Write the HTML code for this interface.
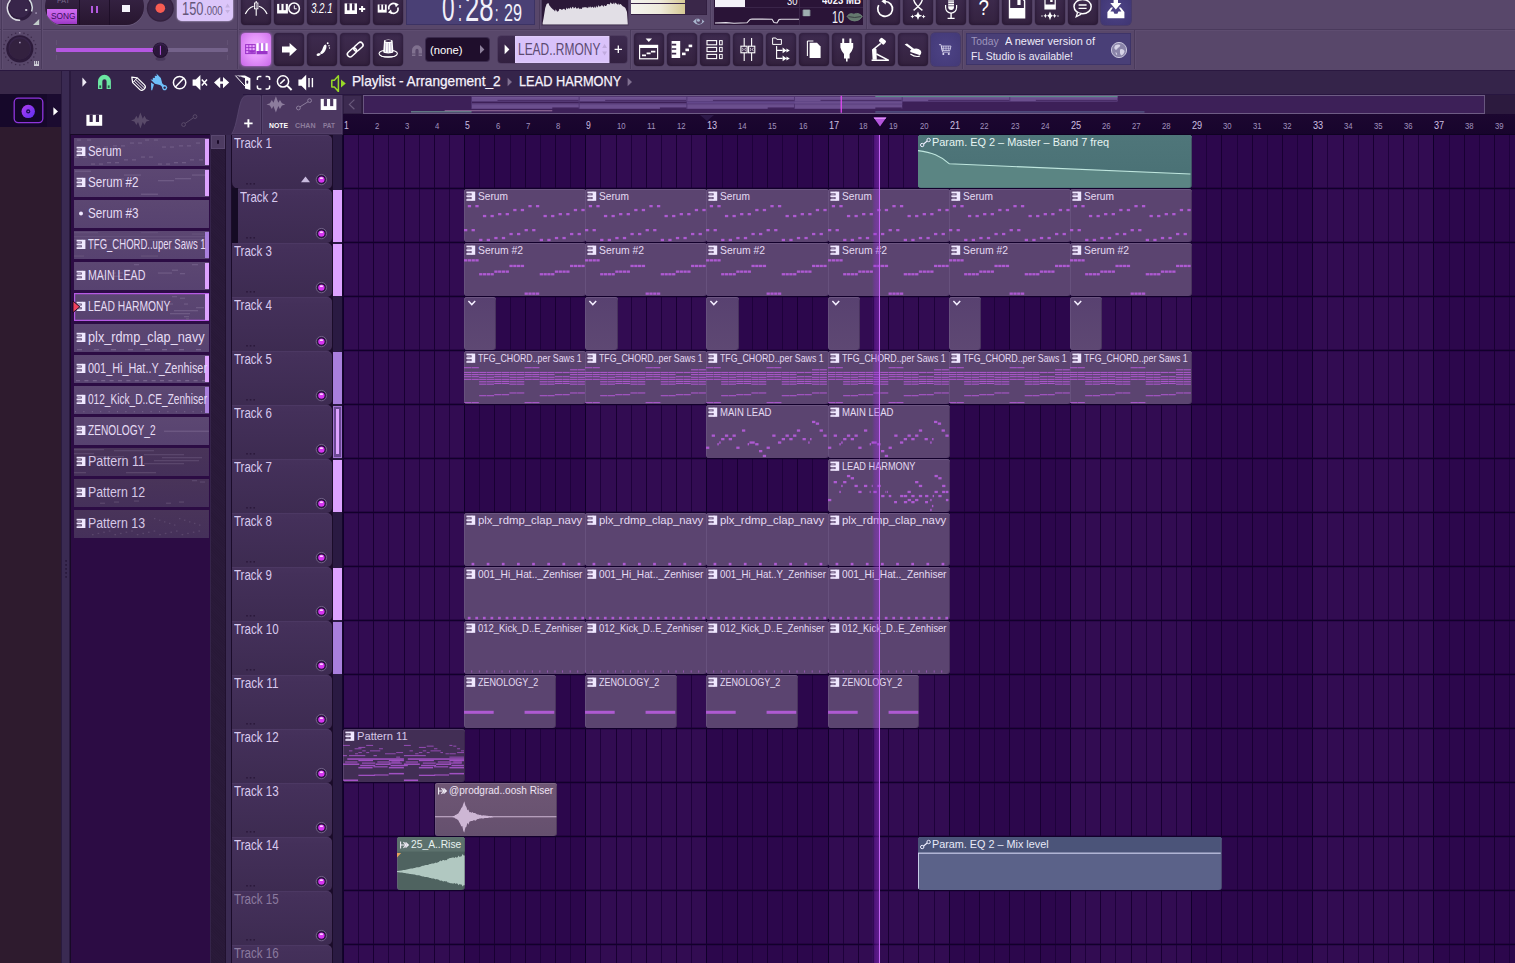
<!DOCTYPE html>
<html><head><meta charset="utf-8"><title>FL Studio Playlist</title><style>html,body{margin:0;padding:0;background:#35244a;}
#r{position:relative;width:1515px;height:963px;overflow:hidden;font-family:"Liberation Sans",sans-serif;background:#35244a;}
#r div,#r svg{position:absolute;}
#r svg{overflow:hidden;display:block;}
.t{white-space:nowrap;line-height:1;transform-origin:0 0;}
</style></head><body><div id="r">
<div style="left:0px;top:0px;width:1515px;height:71px;background:#58476a;"></div>
<div style="left:0px;top:28.6px;width:1515px;height:1px;background:#4a3a5c;"></div>
<div style="left:0px;top:29.6px;width:1515px;height:1px;background:#5e4d70;"></div>
<div style="left:0px;top:70px;width:1515px;height:1px;background:#2a1840;"></div>
<div style="left:1px;top:0px;width:1px;height:69px;background:#4a3a5c;"></div>
<div style="left:2px;top:0px;width:1px;height:69px;background:#5e4d70;"></div>
<div style="left:41px;top:0px;width:1px;height:69px;background:#4a3a5c;"></div>
<div style="left:42px;top:0px;width:1px;height:69px;background:#5e4d70;"></div>
<div style="left:237px;top:0px;width:1px;height:69px;background:#4a3a5c;"></div>
<div style="left:238px;top:0px;width:1px;height:69px;background:#5e4d70;"></div>
<div style="left:539px;top:0px;width:1px;height:29px;background:#4a3a5c;"></div>
<div style="left:540px;top:0px;width:1px;height:29px;background:#5e4d70;"></div>
<div style="left:630px;top:30px;width:1px;height:39px;background:#4a3a5c;"></div>
<div style="left:631px;top:30px;width:1px;height:39px;background:#5e4d70;"></div>
<div style="left:710px;top:0px;width:1px;height:29px;background:#4a3a5c;"></div>
<div style="left:711px;top:0px;width:1px;height:29px;background:#5e4d70;"></div>
<div style="left:866px;top:0px;width:1px;height:29px;background:#4a3a5c;"></div>
<div style="left:867px;top:0px;width:1px;height:29px;background:#5e4d70;"></div>
<div style="left:962px;top:30px;width:1px;height:39px;background:#4a3a5c;"></div>
<div style="left:963px;top:30px;width:1px;height:39px;background:#5e4d70;"></div>
<div style="left:1134px;top:30px;width:1px;height:39px;background:#4a3a5c;"></div>
<div style="left:1135px;top:30px;width:1px;height:39px;background:#5e4d70;"></div>
<svg style="left:2px;top:0px;" width="40" height="29" viewBox="0 0 40 29">
      <circle cx="18" cy="8" r="12.6" fill="#2e1c3e"/>
      <circle cx="17.6" cy="7.2" r="10.6" fill="#38254a"/>
      <path d="M8.4,0 A12.3,12.3 0 0 0 18.2,20.3" fill="none" stroke="#dcdce4" stroke-width="1.5"/>
      <path d="M26.6,-1 A12.3,12.3 0 0 1 29.6,11.4" fill="none" stroke="#d4dce0" stroke-width="1.5"/>
      <rect x="23.2" y="9" width="2" height="2" fill="#c4c0cc"/>
      <rect x="33.2" y="12.2" width="1.8" height="1.8" fill="#8e80a0"/>
      <path d="M37.2,19 L37.2,25 L31,25 Z" fill="#c2cdca"/>
    </svg>
<div style="left:45px;top:-12px;width:99px;height:36.6px;background:linear-gradient(#3a2749,#27152f);border-radius:18px;box-shadow:0 1px 0 #6a5a7c;"></div>
<div style="left:79px;top:-12px;width:1.2px;height:36.6px;background:#1e0e28;"></div>
<div style="left:109px;top:-12px;width:1.2px;height:36.6px;background:#1e0e28;"></div>
<div style="left:45px;top:-12px;width:34px;height:36.6px;border-radius:18px 0 0 18px;overflow:hidden;"><div style="left:2px;top:21.2px;width:30px;height:14.6px;background:linear-gradient(#cf6ef0,#c058e4 55%,#9a38c4);"></div></div>
<div class="t" style="left:50.8px;top:10px;font-size:9.5px;line-height:11px;color:#3a0f5e;transform:scaleX(0.8793);">SONG</div>
<div class="t" style="left:57px;top:-4px;font-size:8px;line-height:9px;color:#7a6a8c;transform:scaleX(0.9045);">PAT</div>
<div style="left:90.8px;top:6px;width:2.7px;height:7px;background:#b45ae0;"></div>
<div style="left:95.5px;top:6px;width:2.7px;height:7px;background:#b45ae0;"></div>
<div style="left:122px;top:5px;width:8.2px;height:7.4px;background:#f4f4fa;"></div>
<svg style="left:146px;top:-6px;" width="30" height="30" viewBox="0 0 30 30"><circle cx="14.3" cy="14.2" r="13.5" fill="#33213f"/><circle cx="14.3" cy="14.2" r="12.2" fill="#3a2748"/><circle cx="14.3" cy="14.2" r="4.8" fill="#f85c52"/></svg>
<div style="left:177px;top:-6px;width:55.6px;height:26.6px;background:#dcc6fa;border-radius:5px;box-shadow:0 0 2px #e8d8ff;"></div>
<div class="t" style="left:182.2px;top:-2px;font-size:18.3px;line-height:21px;color:#65567a;transform:scaleX(0.7009);">150</div>
<div class="t" style="left:204.4px;top:4px;font-size:12.2px;line-height:14px;color:#65567a;transform:scaleX(0.7875);">.000</div>
<svg style="left:224px;top:2px;" width="8" height="14" viewBox="0 0 8 14"><path d="M1.2,5.4 L3.6,1.6 L6,5.4Z M1.2,8 L3.6,11.6 L6,8Z" fill="#c4b0e0"/></svg>
<svg style="left:0px;top:30px;" width="42" height="39" viewBox="0 0 42 39"><circle cx="36.00" cy="18.80" r="0.75" fill="#3b2949"/><circle cx="35.45" cy="22.99" r="0.75" fill="#3b2949"/><circle cx="33.83" cy="26.90" r="0.75" fill="#3b2949"/><circle cx="31.26" cy="30.26" r="0.75" fill="#3b2949"/><circle cx="27.90" cy="32.83" r="0.75" fill="#3b2949"/><circle cx="23.99" cy="34.45" r="0.75" fill="#3b2949"/><circle cx="19.80" cy="35.00" r="0.75" fill="#3b2949"/><circle cx="15.61" cy="34.45" r="0.75" fill="#3b2949"/><circle cx="11.70" cy="32.83" r="0.75" fill="#3b2949"/><circle cx="8.34" cy="30.26" r="0.75" fill="#3b2949"/><circle cx="5.77" cy="26.90" r="0.75" fill="#3b2949"/><circle cx="4.15" cy="22.99" r="0.75" fill="#3b2949"/><circle cx="3.60" cy="18.80" r="0.75" fill="#3b2949"/><circle cx="4.15" cy="14.61" r="0.75" fill="#3b2949"/><circle cx="5.77" cy="10.70" r="0.75" fill="#3b2949"/><circle cx="8.34" cy="7.34" r="0.75" fill="#3b2949"/><circle cx="11.70" cy="4.77" r="0.75" fill="#3b2949"/><circle cx="15.61" cy="3.15" r="0.75" fill="#3b2949"/><circle cx="19.80" cy="2.60" r="0.75" fill="#3b2949"/><circle cx="23.99" cy="3.15" r="0.75" fill="#3b2949"/><circle cx="27.90" cy="4.77" r="0.75" fill="#3b2949"/><circle cx="31.26" cy="7.34" r="0.75" fill="#3b2949"/><circle cx="33.83" cy="10.70" r="0.75" fill="#3b2949"/><circle cx="35.45" cy="14.61" r="0.75" fill="#3b2949"/>
      <circle cx="19.8" cy="18.8" r="13.6" fill="#2c1a3a"/>
      <circle cx="19.8" cy="18.2" r="11.2" fill="#38254a"/>
      <circle cx="19.8" cy="19" r="10.4" fill="#33213f"/>
      <rect x="19" y="2" width="1.6" height="1.6" fill="#8a7a9a"/>
      <rect x="19.1" y="11.8" width="1.5" height="1.5" fill="#b0a0c0"/>
      <path d="M34,31 h5 v5 h-5z" fill="#d0d0d8"/><path d="M35.4,31 v3.2 M37.6,31 v3.2" stroke="#58476a" stroke-width="0.9"/>
    </svg>
<div style="left:55.5px;top:48px;width:172px;height:4px;background:#74628a;border-radius:1px;"></div>
<div style="left:55.5px;top:48px;width:98px;height:4px;background:#b557e2;border-radius:1px;"></div>
<div style="left:56.2px;top:40.2px;width:0.7px;height:5px;background:#625174;"></div>
<div style="left:56.2px;top:55px;width:0.7px;height:4.6px;background:#625174;"></div>
<div style="left:226.6px;top:40.2px;width:0.7px;height:5px;background:#625174;"></div>
<div style="left:226.6px;top:55px;width:0.7px;height:4.6px;background:#625174;"></div>
<svg style="left:151px;top:40px;" width="20" height="22" viewBox="0 0 20 22"><ellipse cx="9.5" cy="18.8" rx="5" ry="2" fill="#47375a"/>
      <circle cx="9.4" cy="10.2" r="7.7" fill="#231030"/><circle cx="9.4" cy="9.8" r="6.7" fill="#35224a"/>
      <circle cx="9.4" cy="10.6" r="6.2" fill="#2a173a"/>
      <rect x="8.9" y="5.8" width="1" height="9" fill="#b557e2"/></svg>
<div style="left:241px;top:-6px;width:29.8px;height:30.6px;background:linear-gradient(#3e2b4f,#34223f);border-radius:4px;box-shadow:inset 0 0 4px rgba(20,5,30,.55),0 0 0 0.6px #4a3a5c;"></div>
<div style="left:274px;top:-6px;width:29.8px;height:30.6px;background:linear-gradient(#3e2b4f,#34223f);border-radius:4px;box-shadow:inset 0 0 4px rgba(20,5,30,.55),0 0 0 0.6px #4a3a5c;"></div>
<div style="left:307px;top:-6px;width:29.8px;height:30.6px;background:linear-gradient(#3e2b4f,#34223f);border-radius:4px;box-shadow:inset 0 0 4px rgba(20,5,30,.55),0 0 0 0.6px #4a3a5c;"></div>
<div style="left:340px;top:-6px;width:29.8px;height:30.6px;background:linear-gradient(#3e2b4f,#34223f);border-radius:4px;box-shadow:inset 0 0 4px rgba(20,5,30,.55),0 0 0 0.6px #4a3a5c;"></div>
<div style="left:373px;top:-6px;width:29.8px;height:30.6px;background:linear-gradient(#3e2b4f,#34223f);border-radius:4px;box-shadow:inset 0 0 4px rgba(20,5,30,.55),0 0 0 0.6px #4a3a5c;"></div>
<div style="left:274px;top:33px;width:29.8px;height:33px;background:linear-gradient(#3e2b4f,#34223f);border-radius:4px;box-shadow:inset 0 0 4px rgba(20,5,30,.55),0 0 0 0.6px #4a3a5c;"></div>
<div style="left:307px;top:33px;width:29.8px;height:33px;background:linear-gradient(#3e2b4f,#34223f);border-radius:4px;box-shadow:inset 0 0 4px rgba(20,5,30,.55),0 0 0 0.6px #4a3a5c;"></div>
<div style="left:340px;top:33px;width:29.8px;height:33px;background:linear-gradient(#3e2b4f,#34223f);border-radius:4px;box-shadow:inset 0 0 4px rgba(20,5,30,.55),0 0 0 0.6px #4a3a5c;"></div>
<div style="left:373px;top:33px;width:29.8px;height:33px;background:linear-gradient(#3e2b4f,#34223f);border-radius:4px;box-shadow:inset 0 0 4px rgba(20,5,30,.55),0 0 0 0.6px #4a3a5c;"></div>
<div style="left:241px;top:33px;width:29.8px;height:33px;background:radial-gradient(ellipse at 50% 45%,#f0b4ff 0%,#e595fb 45%,#c868e8 100%);border-radius:4px;box-shadow:0 0 3px #d070f0;"></div>
<svg style="left:241px;top:-6px;" width="30" height="30.6" viewBox="0 0 30 30.6"><path d="M4.3,19.9 Q7.4,13.6 12.6,12.2 M26.1,19.9 Q23,13.6 17.8,12.2" stroke="#fff" fill="none" stroke-width="1.15"/><path d="M15.2,7 V21.8" stroke="#fff" fill="none" stroke-width="1.1"/><rect x="13.5" y="9" width="3.4" height="5.8" fill="#3a2749" stroke="#fff" stroke-width="0.9"/><path d="M15.2,10 v4" stroke="#fff" stroke-width="0.7"/></svg>
<svg style="left:274px;top:-6px;" width="30" height="30.6" viewBox="0 0 30 30.6"><rect x="3.1" y="9.9" width="10.8" height="9.6" fill="#fff"/><rect x="5.26" y="9.8" width="2.16" height="6.34" fill="#3a2749"/><rect x="9.58" y="9.8" width="2.16" height="6.34" fill="#3a2749"/><circle cx="20.1" cy="14.4" r="5.3" fill="#3a2749" stroke="#fff" stroke-width="1.5"/><path d="M20.3,11.4 V14.8 H22.8" stroke="#fff" fill="none" stroke-width="1"/></svg>
<svg style="left:307px;top:-6px;" width="30" height="30.6" viewBox="0 0 30 30.6"><text x="3.9" y="18.9" font-family="Liberation Sans" font-style="italic" font-size="14.6" fill="#fff" textLength="21.8" lengthAdjust="spacingAndGlyphs">3.2.1</text></svg>
<svg style="left:340px;top:-6px;" width="30" height="30.6" viewBox="0 0 30 30.6"><rect x="4.6" y="9.4" width="12.4" height="10.6" fill="#fff"/><rect x="7.08" y="9.3" width="2.48" height="7.00" fill="#3a2749"/><rect x="12.04" y="9.3" width="2.48" height="7.00" fill="#3a2749"/><path d="M19,15 h6.2 M22.1,11.9 v6.2" stroke="#fff" stroke-width="2"/></svg>
<svg style="left:373px;top:-6px;" width="30" height="30.6" viewBox="0 0 30 30.6"><rect x="4.7" y="10.5" width="9" height="8.1" fill="#fff"/><rect x="6.50" y="10.4" width="1.80" height="5.35" fill="#3a2749"/><rect x="10.10" y="10.4" width="1.80" height="5.35" fill="#3a2749"/><path d="M16,15.4 A4.5,4.5 0 0 1 23.4,10.8" stroke="#fff" fill="none" stroke-width="1.6"/><path d="M24.8,13.4 A4.5,4.5 0 0 1 17.4,18" stroke="#fff" fill="none" stroke-width="1.6"/><path d="M21.6,8.6 l4.2,1.6 -3,3z M19.2,20.2 l-4.2,-1.6 3,-3z" fill="#fff"/></svg>
<svg style="left:241px;top:33px;" width="30" height="32.4" viewBox="0 0 30 32.4"><rect x="4.6" y="11.6" width="9.6" height="9" fill="none" stroke="#9a32c8" stroke-width="1"/><path d="M4.6,14.6 h9.6 M4.6,17.6 h9.6 M7.8,11.6 v9 M11,11.6 v9" stroke="#9a32c8" stroke-width="0.9"/><rect x="8.2" y="18" width="5.6" height="1.8" fill="#9a32c8"/><rect x="15.5" y="10.2" width="11.2" height="11.2" fill="#fff"/><rect x="17.74" y="10.1" width="2.24" height="7.84" fill="#c070e8"/><rect x="22.22" y="10.1" width="2.24" height="7.84" fill="#c070e8"/><rect x="15.5" y="18" width="11.2" height="3.4" fill="#9a32c8"/></svg>
<svg style="left:274px;top:33px;" width="30" height="32.4" viewBox="0 0 30 32.4"><path d="M8,13.6 h7.6 v-3.6 l7.3,6.6 -7.3,6.6 v-3.6 h-7.6z" fill="#fff"/></svg>
<svg style="left:307px;top:33px;" width="30" height="32.4" viewBox="0 0 30 32.4"><ellipse cx="11.6" cy="21.6" rx="2.1" ry="1.3" transform="rotate(-18 11.6 21.6)" fill="#fff"/><path d="M13.6,21.3 Q17.6,20.4 19.2,15.4 Q20,12 18.7,11.4 Q17,11.2 16,14.4 Q15.2,17.8 13.2,19.6Z" fill="#fff"/><circle cx="20.7" cy="10.3" r="0.95" fill="#fff"/><circle cx="22" cy="12.7" r="0.75" fill="#fff"/><circle cx="22.5" cy="15" r="0.65" fill="#fff"/></svg>
<svg style="left:340px;top:33px;" width="30" height="32.4" viewBox="0 0 30 32.4"><g transform="rotate(-42 15.2 16.6)" fill="none" stroke="#fff" stroke-width="1.5"><rect x="5.6" y="13.9" width="10.6" height="5.4" rx="2.7"/><rect x="14.2" y="13.9" width="10.6" height="5.4" rx="2.7"/></g></svg>
<svg style="left:373px;top:33px;" width="30" height="32.4" viewBox="0 0 30 32.4"><ellipse cx="15.2" cy="20.6" rx="9.2" ry="3.6" fill="none" stroke="#fff" stroke-width="1.1"/><path d="M6.2,21.4 A9.2,3.6 0 0 0 24.2,21.4 A9.2,2.4 0 0 1 6.2,21.4Z" fill="#fff"/><path d="M11,8 A4.3,1.5 0 0 1 19.6,8 L20.4,19 A5.2,1.8 0 0 1 10.2,19Z" fill="#fff"/><ellipse cx="15.3" cy="8" rx="3.2" ry="0.9" fill="#3a2749"/><path d="M12.8,9.8 L12.4,19 M15.3,10 V19.6 M17.8,9.8 L18.2,19" stroke="#9a8cb0" stroke-width="0.6"/></svg>
<svg style="left:410px;top:42px;" width="14" height="18" viewBox="0 0 14 18"><path d="M2,14 V8.2 A5,5 0 0 1 12,8.2 V14 H8.6 V8.4 A1.6,1.6 0 0 0 5.4,8.4 V14Z" fill="#80718f"/><path d="M2,12 h3.4 M8.6,12 h3.4" stroke="#58476a" stroke-width="0.9"/></svg>
<div style="left:426px;top:38px;width:62.6px;height:22.6px;background:#1f0e2c;border-radius:3px;box-shadow:0 0 0 1px #3a2a4c;"></div>
<div class="t" style="left:430.2px;top:44px;font-size:11.5px;line-height:12px;color:#fff;transform:scaleX(0.9806);">(none)</div>
<svg style="left:478px;top:43px;" width="8" height="13" viewBox="0 0 8 13"><path d="M2,2 L6.4,6.4 L2,10.8Z" fill="#8e809c"/></svg>
<div style="left:498px;top:36px;width:17px;height:26.6px;background:linear-gradient(#3e2b50,#322040);border-radius:3px 0 0 3px;box-shadow:0 0 0 0.6px #463558;"></div>
<svg style="left:503px;top:43px;" width="8" height="13" viewBox="0 0 8 13"><path d="M1.6,1.6 L6.4,6.4 L1.6,11.2Z" fill="#fff"/></svg>
<div style="left:515px;top:36px;width:95px;height:26.6px;background:#d9c2fa;box-shadow:inset 0 0 3px #eedcff;"></div>
<div class="t" style="left:517.6px;top:39px;font-size:17.4px;line-height:20px;color:#5c4a72;transform:scaleX(0.6873);">LEAD..RMONY</div>
<svg style="left:601px;top:42px;" width="8" height="16" viewBox="0 0 8 16"><path d="M1.2,6 L3.6,2 L6,6Z M1.2,9.6 L3.6,13.4 L6,9.6Z" fill="#c0aade"/></svg>
<div style="left:610px;top:36px;width:17px;height:26.6px;background:linear-gradient(#3e2b50,#322040);border-radius:0 3px 3px 0;box-shadow:0 0 0 0.6px #463558;"></div>
<svg style="left:612px;top:42px;" width="13" height="14" viewBox="0 0 13 14"><path d="M2.6,7.3 h7.4 M6.3,3.6 v7.4" stroke="#fff" stroke-width="1.3"/></svg>
<div style="left:406px;top:-4px;width:129px;height:28.6px;background:#4a4075;box-shadow:inset 0 0 0 1px #3c3364;"></div>
<div class="t" style="left:441.6px;top:-13px;font-size:38px;line-height:42px;color:#f2f0fa;transform:scaleX(0.5962);">0</div>
<div class="t" style="left:458.4px;top:-6px;font-size:30px;line-height:33px;color:#f2f0fa;transform:scaleX(0.4799);">:</div>
<div class="t" style="left:465.2px;top:-13px;font-size:38px;line-height:42px;color:#f2f0fa;transform:scaleX(0.6766);">28</div>
<div class="t" style="left:495.2px;top:1px;font-size:22px;line-height:25px;color:#f2f0fa;transform:scaleX(0.5563);">:</div>
<div class="t" style="left:503.6px;top:0px;font-size:23.4px;line-height:26px;color:#f2f0fa;transform:scaleX(0.6915);">29</div>
<div style="left:541.6px;top:-4px;width:86.8px;height:28.6px;background:#2b1838;box-shadow:0 0 0 0.6px #463558;"></div>
<svg style="left:541.6px;top:0px;" width="87" height="24.6" viewBox="0 0 87 24.6"><path d="M0.6,24.6 L0.6,23.0 L1.6,18.0 L2.4,13.0 L3.2,8.0 L4.6,4.0 L5.5,3.5 L6.4,2.9 L7.4,5.6 L8.1,6.3 L8.8,7.2 L9.5,8.0 L10.3,8.7 L11.0,9.6 L12.0,10.0 L13.0,11.5 L13.7,9.3 L14.5,10.6 L15.2,12.1 L15.9,10.9 L16.6,11.2 L17.3,8.8 L18.0,9.3 L18.8,8.9 L19.5,9.8 L20.2,10.0 L21.0,8.7 L21.7,9.0 L22.4,8.8 L23.2,10.2 L23.9,9.5 L24.6,7.6 L25.5,9.3 L26.3,7.7 L27.1,9.0 L28.0,7.8 L28.8,7.2 L29.5,9.1 L30.3,7.1 L31.1,6.8 L31.8,8.5 L32.6,7.9 L33.5,6.7 L34.3,8.7 L35.1,8.0 L36.0,8.7 L36.8,7.3 L37.5,9.2 L38.3,8.4 L39.1,9.1 L39.8,8.8 L40.6,7.2 L41.5,7.5 L42.3,7.2 L43.1,7.3 L44.0,7.3 L44.7,7.6 L45.5,8.2 L46.2,6.4 L46.9,7.9 L47.7,6.7 L48.4,6.4 L49.1,7.9 L49.8,7.1 L50.6,6.8 L51.3,7.4 L52.0,8.1 L52.7,6.2 L53.5,8.3 L54.2,5.6 L54.9,7.2 L55.7,7.2 L56.4,4.8 L57.1,6.9 L57.8,6.0 L58.6,6.6 L59.3,5.2 L60.0,5.4 L60.7,5.4 L61.5,7.1 L62.2,4.8 L62.9,5.9 L63.7,6.1 L64.4,5.7 L65.3,4.1 L66.1,4.0 L67.0,4.3 L67.7,4.4 L68.5,2.2 L69.2,3.3 L70.1,3.7 L71.1,4.1 L72.0,2.2 L72.7,4.6 L73.4,2.5 L74.1,3.2 L74.9,3.9 L75.6,4.8 L76.3,3.3 L77.0,4.9 L77.8,4.3 L78.5,4.1 L79.2,4.5 L80.0,5.6 L80.8,6.2 L81.7,6.8 L82.6,7.3 L83.4,7.9 L84.2,9.9 L85.0,12.0 L85.8,23.8 L85.8,24.6Z" fill="#e2dfe6"/></svg>
<div style="left:630.6px;top:-4px;width:76.4px;height:18.6px;background:#3a2749;box-shadow:inset 0 0 0 0.6px #2e1c3c;"></div>
<div style="left:631.2px;top:-2px;width:54px;height:4.6px;background:linear-gradient(90deg,#f4f4f0,#eeeada 55%,#d6c994);"></div>
<div style="left:631.2px;top:4.2px;width:53.4px;height:9.6px;background:linear-gradient(90deg,#f4f4f0,#eeeada 55%,#d6c994);"></div>
<svg style="left:692px;top:15px;" width="14" height="12" viewBox="0 0 14 12"><path d="M1,6.4 Q6.6,-0.6 12.4,6.4 Q6.6,13 1,6.4Z" fill="#a9b6cf"/><circle cx="7.2" cy="6" r="3" fill="#58476a"/><circle cx="6.4" cy="5.2" r="1.5" fill="#a9b6cf"/></svg>
<div style="left:714px;top:-4px;width:149px;height:28.6px;background:#2a1437;"></div>
<div style="left:714.6px;top:-4px;width:30.4px;height:10.6px;background:#f4f2f8;"></div>
<div style="left:714px;top:6.8px;width:85px;height:0.8px;background:#3a2549;"></div>
<div style="left:799px;top:-4px;width:0.9px;height:28.6px;background:#3a2549;"></div>
<div style="left:799px;top:6.6px;width:64px;height:0.8px;background:#3a2549;"></div>
<div class="t" style="left:786.8px;top:-5px;font-size:10.6px;line-height:12px;color:#f4f2fa;transform:scaleX(0.8905);">30</div>
<div class="t" style="left:821.6px;top:-6px;font-size:10.6px;line-height:12px;color:#f8f6fc;transform:scaleX(0.9021);font-weight:bold;">4023 MB</div>
<svg style="left:714px;top:14px;" width="86" height="11" viewBox="0 0 86 11"><path d="M1,9 L12,8.6 L20,9.2 L33,8.8 L36,5.4 L38,5 L58,5.2 L60,8.6 L63,9 L65,5.6 L67,5.2 L85,5.2" fill="none" stroke="#e2dee8" stroke-width="1.1"/></svg>
<svg style="left:801px;top:8px;" width="12" height="10" viewBox="0 0 12 10"><rect x="2.2" y="1.6" width="6.6" height="6.6" fill="#9eb0b0"/><path d="M1,3 h9 M1,5 h9 M1,7 h9" stroke="#9eb0b0" stroke-width="0.6"/></svg>
<div class="t" style="left:832px;top:9px;font-size:15.6px;line-height:17px;color:#f4f2f8;transform:scaleX(0.6915);">10</div>
<svg style="left:846px;top:11px;" width="18" height="12" viewBox="0 0 18 12"><path d="M1,5.4 Q3,2.2 5.6,2.6 Q7.4,3.4 8.4,3 Q10.6,2 12.4,2.6 Q14.6,3.4 16.4,5.4 Q13,10.4 8.6,10 Q4,10.2 1,5.4Z" fill="#65786f" stroke="#6d8377" stroke-width="0.8"/><path d="M2.4,5.6 Q8.6,7.4 15,5.6" fill="none" stroke="#3a3f44" stroke-width="1"/></svg>
<div style="left:870px;top:-6px;width:29.8px;height:30.6px;background:linear-gradient(#3e2b4f,#34223f);border-radius:4px;box-shadow:inset 0 0 4px rgba(20,5,30,.55),0 0 0 0.6px #4a3a5c;"></div>
<div style="left:903px;top:-6px;width:29.8px;height:30.6px;background:linear-gradient(#3e2b4f,#34223f);border-radius:4px;box-shadow:inset 0 0 4px rgba(20,5,30,.55),0 0 0 0.6px #4a3a5c;"></div>
<div style="left:936px;top:-6px;width:29.8px;height:30.6px;background:linear-gradient(#3e2b4f,#34223f);border-radius:4px;box-shadow:inset 0 0 4px rgba(20,5,30,.55),0 0 0 0.6px #4a3a5c;"></div>
<div style="left:969px;top:-6px;width:29.8px;height:30.6px;background:linear-gradient(#3e2b4f,#34223f);border-radius:4px;box-shadow:inset 0 0 4px rgba(20,5,30,.55),0 0 0 0.6px #4a3a5c;"></div>
<div style="left:1002px;top:-6px;width:29.8px;height:30.6px;background:linear-gradient(#3e2b4f,#34223f);border-radius:4px;box-shadow:inset 0 0 4px rgba(20,5,30,.55),0 0 0 0.6px #4a3a5c;"></div>
<div style="left:1035px;top:-6px;width:29.8px;height:30.6px;background:linear-gradient(#3e2b4f,#34223f);border-radius:4px;box-shadow:inset 0 0 4px rgba(20,5,30,.55),0 0 0 0.6px #4a3a5c;"></div>
<div style="left:1068px;top:-6px;width:29.8px;height:30.6px;background:linear-gradient(#3e2b4f,#34223f);border-radius:4px;box-shadow:inset 0 0 4px rgba(20,5,30,.55),0 0 0 0.6px #4a3a5c;"></div>
<div style="left:1101px;top:-6px;width:29.8px;height:30.6px;background:radial-gradient(ellipse at 50% 50%,#4e4488,#3f3572);border-radius:4px;box-shadow:0 0 0 0.6px #3c3368;"></div>
<svg style="left:870px;top:-6px;" width="30" height="30.6" viewBox="0 0 30 30.6"><path d="M15.1,7.5 A7.4,7.4 0 1 1 8.7,11.2" stroke="#fff" fill="none" stroke-width="1.7"/><path d="M11.4,7.3 L15.8,4 V10.6Z" fill="#fff"/></svg>
<svg style="left:903px;top:-6px;" width="30" height="30.6" viewBox="0 0 30 30.6"><path d="M10.6,5 Q11,10 19.4,16.4 M19.4,5 Q19,10 10.6,16.4" stroke="#fff" fill="none" stroke-width="1.4"/><path d="M15,17.6 l1.2,3 3,1.2 -3,1.2 -1.2,3 -1.2,-3 -3,-1.2 3,-1.2z" fill="#fff"/><path d="M9.4,20.4 l.6,1.6 1.4,.6 -1.4,.6 -.6,1.4 -.6,-1.4 -1.4,-.6 1.4,-.6z M20.6,20.4 l.6,1.6 1.4,.6 -1.4,.6 -.6,1.4 -.6,-1.4 -1.4,-.6 1.4,-.6z" fill="#fff"/></svg>
<svg style="left:936px;top:-6px;" width="30" height="30.6" viewBox="0 0 30 30.6"><rect x="12.2" y="2" width="5.8" height="14" rx="2.9" fill="#fff"/><path d="M12.2,7 h5.8 M12.2,9.4 h5.8 M12.2,11.8 h5.8" stroke="#3a2749" stroke-width="0.7"/><path d="M9.6,11 v2.6 a5.5,5.5 0 0 0 11,0 V11" stroke="#fff" fill="none" stroke-width="1.2"/><path d="M15.1,19 v5 M11.6,24.4 h7" stroke="#fff" fill="none" stroke-width="1.4"/></svg>
<svg style="left:969px;top:-6px;" width="30" height="30.6" viewBox="0 0 30 30.6"><text x="9.6" y="20.6" font-family="Liberation Sans" font-size="22.5" fill="#fff" textLength="10.4" lengthAdjust="spacingAndGlyphs">?</text></svg>
<svg style="left:1002px;top:-6px;" width="30" height="30.6" viewBox="0 0 30 30.6"><path d="M7.5,4 H19.8 L22.6,6.8 V23.8 H7.5Z" fill="#3a2749" stroke="#fff" stroke-width="1.4"/><rect x="7.5" y="14" width="15.1" height="9.8" fill="#fff"/><rect x="15.4" y="4" width="3.2" height="7" fill="#fff"/></svg>
<svg style="left:1035px;top:-6px;" width="30" height="30.6" viewBox="0 0 30 30.6"><path d="M10,3 H18.4 L20.2,4.8 V14.9 H10Z" fill="#3a2749" stroke="#fff" stroke-width="1.2"/><rect x="10" y="10.5" width="10.2" height="4.4" fill="#fff"/><rect x="15.2" y="3" width="2.4" height="5" fill="#fff"/><path d="M15,17.4 l1.2,3.2 1.6,1.2 -1.6,1.2 -1.2,3.2 -1.2,-3.2 -1.6,-1.2 1.6,-1.2z M10.4,19.6 l.7,1.6 1.2,.6 -1.2,.6 -.7,1.6 -.7,-1.6 -1.2,-.6 1.2,-.6z M19.6,19.6 l.7,1.6 1.2,.6 -1.2,.6 -.7,1.6 -.7,-1.6 -1.2,-.6 1.2,-.6z M7,21 l.4,.8 .8,.2 -.8,.2 -.4,.8 -.4,-.8 -.8,-.2 .8,-.2z M23,21 l.4,.8 .8,.2 -.8,.2 -.4,.8 -.4,-.8 -.8,-.2 .8,-.2z" fill="#fff"/></svg>
<svg style="left:1068px;top:-6px;" width="30" height="30.6" viewBox="0 0 30 30.6"><ellipse cx="14.6" cy="12.6" rx="8.6" ry="7.2" stroke="#fff" fill="none" stroke-width="1.5"/><path d="M9.6,18.4 l-1.4,4.4 5,-2.6" fill="#3a2749" stroke="#fff" stroke-width="1.3"/><path d="M10.6,11 h8 M10.6,14.4 h8" stroke="#fff" fill="none" stroke-width="1.3"/></svg>
<svg style="left:1101px;top:-6px;" width="30" height="30.6" viewBox="0 0 30 30.6"><path d="M12.6,2 h4.4 v7 h3.4 l-5.6,6.6 -5.6,-6.6 h3.4z" fill="#fff"/><path d="M6.4,18 l3.6,-4.6 h2 l-2.6,4 h3 l1,2.4 h3 l1,-2.4 h3 l-2.6,-4 h2 l3.6,4.6 v6.2 h-17z" fill="#fff"/></svg>
<div style="left:634.3px;top:33px;width:29.8px;height:33px;background:linear-gradient(#3e2b4f,#34223f);border-radius:4px;box-shadow:inset 0 0 4px rgba(20,5,30,.55),0 0 0 0.6px #4a3a5c;"></div>
<div style="left:667.3px;top:33px;width:29.8px;height:33px;background:linear-gradient(#3e2b4f,#34223f);border-radius:4px;box-shadow:inset 0 0 4px rgba(20,5,30,.55),0 0 0 0.6px #4a3a5c;"></div>
<div style="left:700.3px;top:33px;width:29.8px;height:33px;background:linear-gradient(#3e2b4f,#34223f);border-radius:4px;box-shadow:inset 0 0 4px rgba(20,5,30,.55),0 0 0 0.6px #4a3a5c;"></div>
<div style="left:733.3px;top:33px;width:29.8px;height:33px;background:linear-gradient(#3e2b4f,#34223f);border-radius:4px;box-shadow:inset 0 0 4px rgba(20,5,30,.55),0 0 0 0.6px #4a3a5c;"></div>
<div style="left:766.3px;top:33px;width:29.8px;height:33px;background:linear-gradient(#3e2b4f,#34223f);border-radius:4px;box-shadow:inset 0 0 4px rgba(20,5,30,.55),0 0 0 0.6px #4a3a5c;"></div>
<div style="left:799.3px;top:33px;width:29.8px;height:33px;background:linear-gradient(#3e2b4f,#34223f);border-radius:4px;box-shadow:inset 0 0 4px rgba(20,5,30,.55),0 0 0 0.6px #4a3a5c;"></div>
<div style="left:832.3px;top:33px;width:29.8px;height:33px;background:linear-gradient(#3e2b4f,#34223f);border-radius:4px;box-shadow:inset 0 0 4px rgba(20,5,30,.55),0 0 0 0.6px #4a3a5c;"></div>
<div style="left:865.3px;top:33px;width:29.8px;height:33px;background:linear-gradient(#3e2b4f,#34223f);border-radius:4px;box-shadow:inset 0 0 4px rgba(20,5,30,.55),0 0 0 0.6px #4a3a5c;"></div>
<div style="left:898.3px;top:33px;width:29.8px;height:33px;background:linear-gradient(#3e2b4f,#34223f);border-radius:4px;box-shadow:inset 0 0 4px rgba(20,5,30,.55),0 0 0 0.6px #4a3a5c;"></div>
<div style="left:931.3px;top:33px;width:29px;height:33px;background:radial-gradient(ellipse at 50% 50%,#4d4386,#433977);border-radius:4px;box-shadow:0 0 0 0.6px #3c3368;"></div>
<svg style="left:634.3px;top:33px;" width="30" height="32.4" viewBox="0 0 30 32.4"><path d="M11.6,5.6 h6.4 l-3.2,3.4z" fill="#fff"/><rect x="5.6" y="12.4" width="18" height="13.4" stroke="#fff" fill="none" stroke-width="1.2"/><rect x="5.6" y="12.4" width="18" height="2.6" fill="#fff"/><path d="M8,22.4 h4 M12.6,20.4 h4 M17,18.6 h4.4" stroke="#fff" stroke-width="1.6"/></svg>
<svg style="left:667.3px;top:33px;" width="30" height="32.4" viewBox="0 0 30 32.4"><path d="M4.6,8 h8.6 v17 h-8.6z" fill="#fff"/><path d="M4.6,11.6 h4.6 M4.6,16 h4.6 M4.6,20.6 h4.6" stroke="#3a2749" stroke-width="1.6"/><rect x="15" y="19.6" width="3.6" height="2.6" fill="#fff"/><rect x="18.4" y="15.6" width="3.6" height="2.6" fill="#fff"/><rect x="21.6" y="11.6" width="3.6" height="2.6" fill="#fff"/></svg>
<svg style="left:700.3px;top:33px;" width="30" height="32.4" viewBox="0 0 30 32.4"><rect x="7" y="7.6" width="9.6" height="4.2" stroke="#fff" fill="none" stroke-width="1.1"/><rect x="19.6" y="7.6" width="2.6" height="4.2" stroke="#fff" fill="none" stroke-width="1"/><rect x="7" y="14.4" width="9.6" height="4.2" stroke="#fff" fill="none" stroke-width="1.1"/><rect x="19.6" y="14.4" width="2.6" height="4.2" stroke="#fff" fill="none" stroke-width="1"/><rect x="7" y="21.4" width="9.6" height="4.2" stroke="#fff" fill="none" stroke-width="1.1"/><rect x="19.6" y="21.4" width="2.6" height="4.2" stroke="#fff" fill="none" stroke-width="1"/></svg>
<svg style="left:733.3px;top:33px;" width="30" height="32.4" viewBox="0 0 30 32.4"><path d="M11.2,5 V28 M18.6,5 V28" stroke="#fff" fill="none" stroke-width="1.1"/><rect x="7.9" y="13.2" width="6.2" height="6.6" fill="#3a2749" stroke="#fff" stroke-width="1.1"/><rect x="15.6" y="13.2" width="6.2" height="6.6" fill="#3a2749" stroke="#fff" stroke-width="1.1"/><path d="M9.4,14.8 q1.6,1.7 0,3.4 M12.6,14.8 q-1.6,1.7 0,3.4 M17.1,14.8 q1.6,1.7 0,3.4 M20.3,14.8 q-1.6,1.7 0,3.4" stroke="#fff" fill="none" stroke-width="0.7"/></svg>
<svg style="left:766.3px;top:33px;" width="30" height="32.4" viewBox="0 0 30 32.4"><path d="M6.6,11.4 v-6.4 h3.2 l1,1.4 h4.6 v5z" stroke="#fff" fill="none" stroke-width="1"/><path d="M10.6,13 v12.4 h6 M10.6,17.4 h6" stroke="#fff" fill="none" stroke-width="1.1"/><path d="M16.6,14.6 l4,2.8 -4,2.8z M16.6,22.6 l4,2.8 -4,2.8z M20.4,15.4 l3.4,2 -3.4,2z M20.4,23.4 l3.4,2 -3.4,2z" fill="#fff"/></svg>
<svg style="left:799.3px;top:33px;" width="30" height="32.4" viewBox="0 0 30 32.4"><path d="M8.4,8 h6 M8.4,8 v15" stroke="#fff" fill="none" stroke-width="1.1"/><path d="M10.6,9.8 h7.4 l3.6,3.6 v11.6 h-11z" fill="#fff"/></svg>
<svg style="left:832.3px;top:33px;" width="30" height="32.4" viewBox="0 0 30 32.4"><path d="M11.2,5.4 v5 M18.4,5.4 v5" stroke="#fff" stroke-width="2"/><path d="M8.4,10 h12.8 v4.6 q-1,4 -3.6,6.4 v4.6 h-5.6 v-4.6 q-2.6,-2.4 -3.6,-6.4z" fill="#fff"/><path d="M14.8,25 v3.4" stroke="#fff" stroke-width="1.6"/></svg>
<svg style="left:865.3px;top:33px;" width="30" height="32.4" viewBox="0 0 30 32.4"><rect x="14.2" y="5.8" width="6.6" height="4.8" rx="1.4" transform="rotate(40 17.5 8.2)" fill="#fff"/><path d="M15.8,10.4 L8.8,16" fill="none" stroke="#fff" stroke-width="1.5"/><path d="M7,16.6 Q9.2,13.8 11.4,16 L11.8,26.8 H7.6Z" fill="#fff"/><path d="M11.4,21 L23.4,27.2 H6.6" fill="none" stroke="#fff" stroke-width="1.5" stroke-linejoin="round"/></svg>
<svg style="left:898.3px;top:33px;" width="30" height="32.4" viewBox="0 0 30 32.4"><g transform="translate(0,-1.6)"><path d="M6.6,13 l2.4,-1 7,5.4 q4,-1 6.4,1.4 q2,2.4 -0.4,5 l-9.6,-3.2 q-1,-1.6 1,-2.4z" fill="#fff"/><path d="M12.4,22.6 q5,3.6 9.6,2" fill="none" stroke="#fff" stroke-width="1.2"/></g></svg>
<svg style="left:931.3px;top:33px;" width="29" height="32.4" viewBox="0 0 29 32.4"><g transform="translate(2.2,3.4) scale(0.78)"><path d="M7.4,10.6 h2.6 l2,9.6 h9.6" fill="none" stroke="#e4e0f6" stroke-width="1"/><path d="M10.4,12.4 h12.4 l-1.4,5.6 h-9.8z" fill="none" stroke="#e4e0f6" stroke-width="1"/><path d="M13.4,12.4 v5.6 M16.4,12.4 v5.6 M19.4,12.4 v5.6 M10.8,15.2 h11.6" stroke="#e4e0f6" stroke-width="0.8"/><circle cx="13" cy="22.6" r="1.3" fill="#e4e0f6"/><circle cx="20" cy="22.6" r="1.3" fill="#e4e0f6"/></g></svg>
<div style="left:966.3px;top:33px;width:164.4px;height:32.4px;background:#493f77;box-shadow:inset 0 0 0 0.8px #3b3266;"></div>
<div class="t" style="left:970.6px;top:35px;font-size:10.9px;line-height:12px;color:#9d94bb;transform:scaleX(0.9489);">Today</div>
<div class="t" style="left:1004.6px;top:35px;font-size:10.9px;line-height:12px;color:#eeeaf8;transform:scaleX(1.0037);">A newer version of</div>
<div class="t" style="left:970.6px;top:50px;font-size:10.9px;line-height:12px;color:#eeeaf8;transform:scaleX(0.9601);">FL Studio is available!</div>
<svg style="left:1110px;top:41px;" width="18" height="18" viewBox="0 0 18 18"><circle cx="9" cy="9" r="7.6" fill="#8a84a8" stroke="#c9c6dc" stroke-width="1"/><path d="M5,4.6 q3,-2 5.4,-0.6 q-0.6,2.6 -2.6,3 q-0.6,2.4 -2.6,1.6 q-1.6,-2 -0.2,-4z M10,8.4 q3,-1 4.6,1.6 q-0.6,3.6 -3.6,4.6 q-1.6,-2 -1,-6.2z M5.6,11 q1.6,0.6 1.6,3 q-1.6,0 -1.6,-3z" fill="#d6d3e6"/></svg>
<div style="left:0px;top:71px;width:62px;height:24px;background:#392849;"></div>
<div style="left:0px;top:94px;width:62px;height:33px;background:#16082a;"></div>
<div style="left:0px;top:127px;width:62px;height:836px;background:#2e1b2e;"></div>
<div style="left:46.6px;top:94px;width:15.4px;height:33px;background:#1b0b30;"></div>
<svg style="left:12px;top:96px;" width="34" height="29" viewBox="0 0 34 29"><rect x="2.2" y="2.2" width="28.6" height="24.4" rx="4" fill="#14062a" stroke="#8e35dc" stroke-width="1.3"/><defs><linearGradient id="dg" x1="0" y1="0" x2="1" y2="1"><stop offset="0" stop-color="#b53cf4"/><stop offset="1" stop-color="#5a30ee"/></linearGradient></defs><circle cx="16.2" cy="15.4" r="6.7" fill="url(#dg)"/><circle cx="16.2" cy="15.4" r="2.1" fill="#1a0c5a"/><circle cx="16.2" cy="15.4" r="0.7" fill="#b060e0"/></svg>
<svg style="left:51px;top:104px;" width="9" height="15" viewBox="0 0 9 15"><path d="M2.4,3.2 L7,7.4 L2.4,11.6Z" fill="#fff"/></svg>
<div style="left:62px;top:71px;width:8.6px;height:893px;background:#3a2a52;"></div>
<div style="left:61px;top:71px;width:1.4px;height:893px;background:#2a1a3e;"></div>
<div style="left:69.4px;top:71px;width:1.3px;height:893px;background:#2a1a3e;"></div>
<svg style="left:64px;top:556px;" width="5" height="30" viewBox="0 0 5 30"><rect x="1.2" y="4" width="1.8" height="1.8" fill="#2a1a3e"/><rect x="1.2" y="8" width="1.8" height="1.8" fill="#2a1a3e"/><rect x="1.2" y="12" width="1.8" height="1.8" fill="#2a1a3e"/><rect x="1.2" y="16" width="1.8" height="1.8" fill="#2a1a3e"/><rect x="1.2" y="20" width="1.8" height="1.8" fill="#2a1a3e"/></svg>
<div style="left:70.6px;top:71px;width:1444.4px;height:893px;background:#35244a;"></div>
<div style="left:243px;top:94px;width:1272px;height:1.2px;background:#281640;"></div>
<svg style="left:78px;top:72px;" width="240" height="21" viewBox="0 0 240 21">
<path d="M4.4,5.6 L8.6,10.2 L4.4,14.8Z" fill="#f0ecf6"/>
<path d="M20,16.9 V9.2 A6.45,6.45 0 0 1 32.9,9.2 V16.9 H28.6 V9.4 A2.15,2.15 0 0 0 24.3,9.4 V16.9Z" fill="#6be6a2"/><rect x="21.3" y="13.4" width="1.8" height="2.5" fill="#2c5a48"/><rect x="29.8" y="13.4" width="1.8" height="2.5" fill="#2c5a48"/>
<g transform="translate(53.8,5.2) rotate(44)" fill="none" stroke="#fff" stroke-width="1.25" stroke-linejoin="round"><path d="M0,0 L4.4,-3.3 H14.4 Q17.2,-3.3 17.2,0 Q17.2,3.3 14.4,3.3 H4.4Z"/><path d="M4.4,-3.3 V3.3 M4.4,-1.1 H16.6 M4.4,1.1 H16.6" stroke-width="0.9"/></g>
<g transform="translate(76.6,5.6) rotate(45)" fill="#6fc0fa"><path d="M-1.6,-4.2 L0.4,-2.8 L-1.2,-1.4 L0.4,0 L-1.2,1.4 L0.4,2.8 L-1.6,4.2 L4.6,4.2 L9,1.6 L9,-1.6 L4.6,-4.2Z"/><rect x="8" y="-1.3" width="5" height="2.6"/><circle cx="14.2" cy="0" r="1.9" fill="#35244a" stroke="#6fc0fa" stroke-width="1.3"/></g>
<path d="M73,10.4 L76,12.6 L74.2,18.2 L73.2,18.2Z" fill="#6fc0fa"/>
<circle cx="101.6" cy="10.6" r="6.2" fill="none" stroke="#fff" stroke-width="1.5"/><path d="M97.4,15 L105.8,6.2" stroke="#fff" stroke-width="1.5"/>
<path d="M114.6,7.4 h3.2 l4.6,-4.4 v15.2 l-4.6,-4.4 h-3.2z" fill="#fff"/><path d="M123.8,7.6 l5.2,6 m0,-6 l-5.2,6" stroke="#fff" stroke-width="1.5"/>
<path d="M136,10.6 l6.2,-5.6 v11.2z M151.2,10.6 l-6.2,-5.6 v11.2z" fill="#fff"/><path d="M141,10.6 h5" stroke="#fff" stroke-width="2.4"/>
<path d="M157.4,3.6 h9.6 l5.4,2.6 v11.8 l-5.4,-1.6 v-10.4z" fill="#fff"/><path d="M157.4,3.6 l9.6,10.6" stroke="#fff" stroke-width="1"/><path d="M159.4,3.6 l7.4,8.2 M162,3.6 l4.8,5.4" stroke="#35244a" stroke-width="0.6"/><rect x="168.4" y="8.4" width="1.8" height="3.4" rx="0.8" fill="#35244a"/>
<path d="M179.4,8 V6.4 q0,-2 2,-2 h2 M187.6,4.4 h2 q2,0 2,2 V8 M191.6,13.4 V15 q0,2 -2,2 h-2 M183.4,17 h-2 q-2,0 -2,-2 v-1.6" fill="none" stroke="#fff" stroke-width="1.5"/>
<circle cx="205" cy="9.4" r="5.6" fill="none" stroke="#fff" stroke-width="1.5"/><path d="M209.2,13.6 l4.4,4.4" stroke="#fff" stroke-width="2"/><path d="M202.2,11.8 l4.6,-4.4" stroke="#fff" stroke-width="1.5"/>
<path d="M220.4,7.4 h3 l4.8,-4.6 v15.6 l-4.8,-4.6 h-3z" fill="#fff"/><path d="M231,6 v9.2 M234.4,6 v9.2" stroke="#fff" stroke-width="1.4"/>
</svg>
<div class="t" style="left:352.4px;top:73px;font-size:14.2px;line-height:16px;color:#f6f2fc;transform:scaleX(0.9619);-webkit-text-stroke:0.25px #f6f2fc;">Playlist - Arrangement_2</div>
<svg style="left:506px;top:76px;" width="8" height="13" viewBox="0 0 8 13"><path d="M1.6,1.8 L6,6 L1.6,10.2Z" fill="#7f7090"/></svg>
<div class="t" style="left:519px;top:73px;font-size:14.2px;line-height:16px;color:#f6f2fc;transform:scaleX(0.9012);-webkit-text-stroke:0.25px #f6f2fc;">LEAD HARMONY</div>
<svg style="left:626px;top:76px;" width="8" height="13" viewBox="0 0 8 13"><path d="M1.6,1.8 L6,6 L1.6,10.2Z" fill="#7f7090"/></svg>
<div style="left:70.6px;top:95.2px;width:161px;height:40px;background:#35244a;"></div>
<svg style="left:84px;top:110px;" width="120" height="20" viewBox="0 0 120 20"><rect x="2.4" y="4.8" width="15.8" height="11" fill="#fff"/><rect x="5.56" y="4.7" width="3.16" height="7.26" fill="#35244a"/><rect x="11.88" y="4.7" width="3.16" height="7.26" fill="#35244a"/><path d="M47,10.4 l3.4,-1.2 2,-3.4 1.6,3 2.4,-6.4 2.4,6.4 1.6,-3 2,3.4 3.4,1.2 -3.4,1.2 -2,3.4 -1.6,-3 -2.4,6.4 -2.4,-6.4 -1.6,3 -2,-3.4z" fill="#594a69"/><circle cx="99.6" cy="14.6" r="1.9" fill="none" stroke="#594a69" stroke-width="1"/><circle cx="111" cy="6.6" r="1.9" fill="none" stroke="#594a69" stroke-width="1"/><path d="M101.2,13.4 L109.4,7.8" stroke="#594a69" stroke-width="1"/></svg>
<svg style="left:329px;top:73px;" width="20" height="19" viewBox="0 0 20 19"><path d="M2.8,7.2 h2.6 l4,-4.4 v15.6 l-4,-4.4 h-2.6z" fill="none" stroke="#98d828" stroke-width="1.5" stroke-linejoin="round"/><path d="M12,6.4 L16.8,10.5 L12,14.6Z" fill="#98d828"/></svg>
<div style="left:70.4px;top:134.4px;width:140px;height:829px;background:#170a26;"></div>
<div style="left:71.4px;top:135.2px;width:138.4px;height:828px;background:#2c0c44;"></div>
<div style="left:210.6px;top:135px;width:15px;height:828px;background:#2a1a3a;background-image:repeating-linear-gradient(45deg,rgba(0,0,0,.06) 0 1px,transparent 1px 2px);"></div>
<div style="left:211px;top:135px;width:14px;height:14px;background:#4d3b61;box-shadow:inset 0 0 0 1px #5a4870;"></div>
<div style="left:217.2px;top:139.6px;width:1.8px;height:4.4px;background:#1a0a28;border-radius:1px;"></div>
<div style="left:225.6px;top:135px;width:6px;height:828px;background:#3a2a52;"></div>
<div style="left:225.2px;top:135px;width:0.8px;height:828px;background:#21112f;"></div>
<div style="left:74px;top:138px;width:135px;height:27.6px;background:linear-gradient(#5c4772,#574270);overflow:hidden;"><svg style="left:0;top:0" width="135" height="27.6"><rect x="3" y="1.4" width="4" height="1.3" fill="#6e5a84"/><rect x="13" y="1.4" width="4" height="1.3" fill="#6e5a84"/><rect x="56" y="4.4" width="4" height="1.3" fill="#6e5a84"/><rect x="64" y="4.4" width="4" height="1.3" fill="#6e5a84"/><rect x="39" y="7.2" width="4" height="1.3" fill="#6e5a84"/><rect x="47" y="7.2" width="4" height="1.3" fill="#6e5a84"/><rect x="22" y="8.4" width="4" height="1.3" fill="#6e5a84"/><rect x="30" y="8.4" width="4" height="1.3" fill="#6e5a84"/><rect x="71" y="1.4" width="4" height="1.3" fill="#6e5a84"/><rect x="80" y="1.4" width="4" height="1.3" fill="#6e5a84"/><rect x="122" y="4.4" width="4" height="1.3" fill="#6e5a84"/><rect x="105" y="7.2" width="4" height="1.3" fill="#6e5a84"/><rect x="113" y="7.2" width="4" height="1.3" fill="#6e5a84"/><rect x="88" y="8.4" width="4" height="1.3" fill="#6e5a84"/><rect x="96" y="8.4" width="4" height="1.3" fill="#6e5a84"/><rect x="1" y="18.4" width="4" height="1.3" fill="#6e5a84"/><rect x="9" y="18.4" width="4" height="1.3" fill="#6e5a84"/><rect x="67" y="18.4" width="4" height="1.3" fill="#6e5a84"/><rect x="75" y="18.4" width="4" height="1.3" fill="#6e5a84"/><rect x="50" y="21.2" width="4" height="1.3" fill="#6e5a84"/><rect x="58" y="21.2" width="4" height="1.3" fill="#6e5a84"/><rect x="33" y="24" width="4" height="1.3" fill="#6e5a84"/><rect x="41" y="24" width="4" height="1.3" fill="#6e5a84"/><rect x="17" y="25.4" width="4" height="1.3" fill="#6e5a84"/><rect x="25" y="25.4" width="4" height="1.3" fill="#6e5a84"/><rect x="116" y="21.2" width="4" height="1.3" fill="#6e5a84"/><rect x="125" y="21.2" width="4" height="1.3" fill="#6e5a84"/><rect x="100" y="24" width="4" height="1.3" fill="#6e5a84"/><rect x="108" y="24" width="4" height="1.3" fill="#6e5a84"/><rect x="84" y="25.4" width="4" height="1.3" fill="#6e5a84"/><rect x="92" y="25.4" width="4" height="1.3" fill="#6e5a84"/></svg></div>
<div style="left:205px;top:138.6px;width:4px;height:26.6px;background:#dda2ff;"></div>
<svg style="left:76px;top:146px;" width="10" height="11" viewBox="0 0 10 11"><rect x="5.8" y="0.8" width="3.6" height="9.2" fill="#f0e8ff"/><rect x="0.6" y="0.8" width="6" height="1.7" fill="#f0e8ff"/><rect x="0.6" y="4.55" width="6" height="1.7" fill="#f0e8ff"/><rect x="0.6" y="8.3" width="6" height="1.7" fill="#f0e8ff"/><rect x="1.4" y="3.0" width="3.4" height="1" fill="#f0e8ff" opacity="0.55"/><rect x="1.4" y="6.75" width="3.4" height="1" fill="#f0e8ff" opacity="0.55"/></svg>
<div class="t" style="left:88.2px;top:143px;font-size:14px;line-height:16px;color:#e6dcf4;transform:scaleX(0.8148);">Serum</div>
<div style="left:74px;top:169px;width:135px;height:27.6px;background:linear-gradient(#5c4772,#574270);overflow:hidden;"><svg style="left:0;top:0" width="135" height="27.6"><rect x="1" y="1.6" width="16" height="1.3" fill="#6e5a84"/><rect x="50" y="5.4" width="17" height="1.3" fill="#6e5a84"/><rect x="34" y="9.4" width="16" height="1.3" fill="#6e5a84"/><rect x="84" y="11" width="16" height="1.3" fill="#6e5a84"/><rect x="101" y="9" width="16" height="1.3" fill="#6e5a84"/><rect x="118" y="5.4" width="14" height="1.3" fill="#6e5a84"/><rect x="67" y="24.6" width="17" height="1.3" fill="#6e5a84"/></svg></div>
<div style="left:205px;top:169.6px;width:4px;height:26.6px;background:#dda2ff;"></div>
<svg style="left:76px;top:177px;" width="10" height="11" viewBox="0 0 10 11"><rect x="5.8" y="0.8" width="3.6" height="9.2" fill="#f0e8ff"/><rect x="0.6" y="0.8" width="6" height="1.7" fill="#f0e8ff"/><rect x="0.6" y="4.55" width="6" height="1.7" fill="#f0e8ff"/><rect x="0.6" y="8.3" width="6" height="1.7" fill="#f0e8ff"/><rect x="1.4" y="3.0" width="3.4" height="1" fill="#f0e8ff" opacity="0.55"/><rect x="1.4" y="6.75" width="3.4" height="1" fill="#f0e8ff" opacity="0.55"/></svg>
<div class="t" style="left:88.2px;top:174px;font-size:14px;line-height:16px;color:#e6dcf4;transform:scaleX(0.8336);">Serum #2</div>
<div style="left:74px;top:200px;width:135px;height:27.6px;background:linear-gradient(#5c4772,#574270);overflow:hidden;"><svg style="left:0;top:0" width="135" height="27.6"></svg></div>
<svg style="left:76px;top:208px;" width="10" height="10" viewBox="0 0 10 10"><circle cx="5" cy="5.6" r="2" fill="#f0e8ff"/></svg>
<div class="t" style="left:88.2px;top:205px;font-size:14px;line-height:16px;color:#e6dcf4;transform:scaleX(0.8336);">Serum #3</div>
<div style="left:74px;top:231px;width:135px;height:27.6px;background:linear-gradient(#5c4772,#574270);overflow:hidden;"><svg style="left:0;top:0" width="135" height="27.6"><rect x="0" y="1" width="24" height="1.3" fill="#64507a"/><rect x="67" y="1" width="17" height="1.3" fill="#64507a"/><rect x="118" y="2.4" width="12" height="1.3" fill="#64507a"/><rect x="0" y="24.4" width="10" height="1.3" fill="#64507a"/><rect x="67" y="24.4" width="17" height="1.3" fill="#64507a"/><rect x="0" y="5" width="135" height="1.3" fill="#64507a"/><rect x="0" y="8" width="135" height="1.3" fill="#64507a"/><rect x="20" y="17.4" width="46" height="1.3" fill="#64507a"/><rect x="84" y="17.4" width="40" height="1.3" fill="#64507a"/></svg></div>
<div style="left:205px;top:231.6px;width:4px;height:26.6px;background:#a97fdd;"></div>
<svg style="left:76px;top:239px;" width="10" height="11" viewBox="0 0 10 11"><rect x="5.8" y="0.8" width="3.6" height="9.2" fill="#f0e8ff"/><rect x="0.6" y="0.8" width="6" height="1.7" fill="#f0e8ff"/><rect x="0.6" y="4.55" width="6" height="1.7" fill="#f0e8ff"/><rect x="0.6" y="8.3" width="6" height="1.7" fill="#f0e8ff"/><rect x="1.4" y="3.0" width="3.4" height="1" fill="#f0e8ff" opacity="0.55"/><rect x="1.4" y="6.75" width="3.4" height="1" fill="#f0e8ff" opacity="0.55"/></svg>
<div class="t" style="left:88.2px;top:236px;font-size:14px;line-height:16px;color:#e6dcf4;transform:scaleX(0.6809);">TFG_CHORD..uper Saws 1</div>
<div style="left:74px;top:262px;width:135px;height:27.6px;background:linear-gradient(#5c4772,#574270);overflow:hidden;"><svg style="left:0;top:0" width="135" height="27.6"><rect x="60" y="2" width="5" height="1.3" fill="#6e5a84"/><rect x="118" y="2" width="6" height="1.3" fill="#6e5a84"/><rect x="50" y="7.6" width="6" height="1.3" fill="#6e5a84"/><rect x="36" y="10.4" width="6" height="1.3" fill="#6e5a84"/><rect x="44" y="10.4" width="5" height="1.3" fill="#6e5a84"/><rect x="98" y="7.6" width="6" height="1.3" fill="#6e5a84"/><rect x="84" y="10.4" width="14" height="1.3" fill="#6e5a84"/><rect x="26" y="13" width="5" height="1.3" fill="#6e5a84"/><rect x="106" y="11" width="5" height="1.3" fill="#6e5a84"/><rect x="58" y="16.4" width="5" height="1.3" fill="#6e5a84"/><rect x="40" y="13.6" width="8" height="1.3" fill="#6e5a84"/></svg></div>
<div style="left:205px;top:262.6px;width:4px;height:26.6px;background:#dda2ff;"></div>
<svg style="left:76px;top:270px;" width="10" height="11" viewBox="0 0 10 11"><rect x="5.8" y="0.8" width="3.6" height="9.2" fill="#f0e8ff"/><rect x="0.6" y="0.8" width="6" height="1.7" fill="#f0e8ff"/><rect x="0.6" y="4.55" width="6" height="1.7" fill="#f0e8ff"/><rect x="0.6" y="8.3" width="6" height="1.7" fill="#f0e8ff"/><rect x="1.4" y="3.0" width="3.4" height="1" fill="#f0e8ff" opacity="0.55"/><rect x="1.4" y="6.75" width="3.4" height="1" fill="#f0e8ff" opacity="0.55"/></svg>
<div class="t" style="left:88.2px;top:267px;font-size:14px;line-height:16px;color:#e6dcf4;transform:scaleX(0.7606);">MAIN LEAD</div>
<div style="left:74px;top:293px;width:135px;height:27.6px;background:linear-gradient(#5c4772,#574270);overflow:hidden;box-shadow:inset 0 0 0 1.2px #b658e4;"><svg style="left:0;top:0" width="135" height="27.6"><rect x="98" y="3" width="5" height="1.3" fill="#6e5a84"/><rect x="106" y="4.6" width="5" height="1.3" fill="#6e5a84"/><rect x="86" y="7.4" width="6" height="1.3" fill="#6e5a84"/><rect x="94" y="10.4" width="5" height="1.3" fill="#6e5a84"/><rect x="110" y="10.4" width="4" height="1.3" fill="#6e5a84"/><rect x="122" y="14" width="8" height="1.3" fill="#6e5a84"/><rect x="100" y="17" width="24" height="1.3" fill="#6e5a84"/><rect x="96" y="20" width="20" height="1.3" fill="#6e5a84"/><rect x="110" y="23" width="5" height="1.3" fill="#6e5a84"/><rect x="112" y="25.4" width="3" height="1.3" fill="#6e5a84"/></svg></div>
<div style="left:205px;top:293.6px;width:4px;height:26.6px;background:#dda2ff;"></div>
<svg style="left:76px;top:301px;" width="10" height="11" viewBox="0 0 10 11"><rect x="5.8" y="0.8" width="3.6" height="9.2" fill="#f0e8ff"/><rect x="0.6" y="0.8" width="6" height="1.7" fill="#f0e8ff"/><rect x="0.6" y="4.55" width="6" height="1.7" fill="#f0e8ff"/><rect x="0.6" y="8.3" width="6" height="1.7" fill="#f0e8ff"/><rect x="1.4" y="3.0" width="3.4" height="1" fill="#f0e8ff" opacity="0.55"/><rect x="1.4" y="6.75" width="3.4" height="1" fill="#f0e8ff" opacity="0.55"/></svg>
<div class="t" style="left:88.2px;top:298px;font-size:14px;line-height:16px;color:#e6dcf4;transform:scaleX(0.7356);">LEAD HARMONY</div>
<svg style="left:71px;top:299px;" width="11" height="16" viewBox="0 0 11 16"><path d="M2,2 L8.8,7.8 L2,13.6Z" fill="#f0425e" stroke="#14061e" stroke-width="0.9" stroke-linejoin="round"/></svg>
<div style="left:74px;top:324px;width:135px;height:27.6px;background:linear-gradient(#5c4772,#574270);overflow:hidden;"><svg style="left:0;top:0" width="135" height="27.6"><rect x="3" y="25" width="5" height="1.3" fill="#76628c"/><rect x="20" y="25" width="5" height="1.3" fill="#76628c"/><rect x="37" y="25" width="5" height="1.3" fill="#76628c"/><rect x="54" y="25" width="5" height="1.3" fill="#76628c"/><rect x="71" y="25" width="5" height="1.3" fill="#76628c"/><rect x="88" y="25" width="5" height="1.3" fill="#76628c"/><rect x="105" y="25" width="5" height="1.3" fill="#76628c"/><rect x="122" y="25" width="5" height="1.3" fill="#76628c"/></svg></div>
<svg style="left:76px;top:332px;" width="10" height="11" viewBox="0 0 10 11"><rect x="5.8" y="0.8" width="3.6" height="9.2" fill="#f0e8ff"/><rect x="0.6" y="0.8" width="6" height="1.7" fill="#f0e8ff"/><rect x="0.6" y="4.55" width="6" height="1.7" fill="#f0e8ff"/><rect x="0.6" y="8.3" width="6" height="1.7" fill="#f0e8ff"/><rect x="1.4" y="3.0" width="3.4" height="1" fill="#f0e8ff" opacity="0.55"/><rect x="1.4" y="6.75" width="3.4" height="1" fill="#f0e8ff" opacity="0.55"/></svg>
<div class="t" style="left:88.2px;top:329px;font-size:14px;line-height:16px;color:#e6dcf4;transform:scaleX(0.9080);">plx_rdmp_clap_navy</div>
<div style="left:74px;top:355px;width:135px;height:27.6px;background:linear-gradient(#5c4772,#574270);overflow:hidden;"><svg style="left:0;top:0" width="135" height="27.6"><rect x="2.0" y="25" width="4" height="1.3" fill="#76628c"/><rect x="10.4" y="25" width="4" height="1.3" fill="#76628c"/><rect x="18.8" y="25" width="4" height="1.3" fill="#76628c"/><rect x="27.200000000000003" y="25" width="4" height="1.3" fill="#76628c"/><rect x="35.6" y="25" width="4" height="1.3" fill="#76628c"/><rect x="44.0" y="25" width="4" height="1.3" fill="#76628c"/><rect x="52.400000000000006" y="25" width="4" height="1.3" fill="#76628c"/><rect x="60.800000000000004" y="25" width="4" height="1.3" fill="#76628c"/><rect x="69.2" y="25" width="4" height="1.3" fill="#76628c"/><rect x="77.60000000000001" y="25" width="4" height="1.3" fill="#76628c"/><rect x="86.0" y="25" width="4" height="1.3" fill="#76628c"/><rect x="94.4" y="25" width="4" height="1.3" fill="#76628c"/><rect x="102.80000000000001" y="25" width="4" height="1.3" fill="#76628c"/><rect x="111.2" y="25" width="4" height="1.3" fill="#76628c"/><rect x="119.60000000000001" y="25" width="4" height="1.3" fill="#76628c"/><rect x="128.0" y="25" width="4" height="1.3" fill="#76628c"/></svg></div>
<div style="left:205px;top:355.6px;width:4px;height:26.6px;background:#dda2ff;"></div>
<svg style="left:76px;top:363px;" width="10" height="11" viewBox="0 0 10 11"><rect x="5.8" y="0.8" width="3.6" height="9.2" fill="#f0e8ff"/><rect x="0.6" y="0.8" width="6" height="1.7" fill="#f0e8ff"/><rect x="0.6" y="4.55" width="6" height="1.7" fill="#f0e8ff"/><rect x="0.6" y="8.3" width="6" height="1.7" fill="#f0e8ff"/><rect x="1.4" y="3.0" width="3.4" height="1" fill="#f0e8ff" opacity="0.55"/><rect x="1.4" y="6.75" width="3.4" height="1" fill="#f0e8ff" opacity="0.55"/></svg>
<div class="t" style="left:88.2px;top:360px;font-size:14px;line-height:16px;color:#e6dcf4;transform:scaleX(0.7762);">001_Hi_Hat..Y_Zenhiser</div>
<div style="left:74px;top:386px;width:135px;height:27.6px;background:linear-gradient(#5c4772,#574270);overflow:hidden;"><svg style="left:0;top:0" width="135" height="27.6"><rect x="1.0" y="25" width="1" height="1.3" fill="#76628c"/><rect x="9.4" y="25" width="1" height="1.3" fill="#76628c"/><rect x="17.8" y="25" width="1" height="1.3" fill="#76628c"/><rect x="26.200000000000003" y="25" width="1" height="1.3" fill="#76628c"/><rect x="34.6" y="25" width="1" height="1.3" fill="#76628c"/><rect x="43.0" y="25" width="1" height="1.3" fill="#76628c"/><rect x="51.400000000000006" y="25" width="1" height="1.3" fill="#76628c"/><rect x="59.800000000000004" y="25" width="1" height="1.3" fill="#76628c"/><rect x="68.2" y="25" width="1" height="1.3" fill="#76628c"/><rect x="76.60000000000001" y="25" width="1" height="1.3" fill="#76628c"/><rect x="85.0" y="25" width="1" height="1.3" fill="#76628c"/><rect x="93.4" y="25" width="1" height="1.3" fill="#76628c"/><rect x="101.80000000000001" y="25" width="1" height="1.3" fill="#76628c"/><rect x="110.2" y="25" width="1" height="1.3" fill="#76628c"/><rect x="118.60000000000001" y="25" width="1" height="1.3" fill="#76628c"/><rect x="127.0" y="25" width="1" height="1.3" fill="#76628c"/></svg></div>
<div style="left:205px;top:386.6px;width:4px;height:26.6px;background:#a97fdd;"></div>
<svg style="left:76px;top:394px;" width="10" height="11" viewBox="0 0 10 11"><rect x="5.8" y="0.8" width="3.6" height="9.2" fill="#f0e8ff"/><rect x="0.6" y="0.8" width="6" height="1.7" fill="#f0e8ff"/><rect x="0.6" y="4.55" width="6" height="1.7" fill="#f0e8ff"/><rect x="0.6" y="8.3" width="6" height="1.7" fill="#f0e8ff"/><rect x="1.4" y="3.0" width="3.4" height="1" fill="#f0e8ff" opacity="0.55"/><rect x="1.4" y="6.75" width="3.4" height="1" fill="#f0e8ff" opacity="0.55"/></svg>
<div class="t" style="left:88.2px;top:391px;font-size:14px;line-height:16px;color:#e6dcf4;transform:scaleX(0.7213);">012_Kick_D..CE_Zenhiser</div>
<div style="left:74px;top:417px;width:135px;height:27.6px;background:linear-gradient(#5c4772,#574270);overflow:hidden;"><svg style="left:0;top:0" width="135" height="27.6"><rect x="90" y="13.6" width="45" height="1.3" fill="#6e5a84"/></svg></div>
<svg style="left:76px;top:425px;" width="10" height="11" viewBox="0 0 10 11"><rect x="5.8" y="0.8" width="3.6" height="9.2" fill="#f0e8ff"/><rect x="0.6" y="0.8" width="6" height="1.7" fill="#f0e8ff"/><rect x="0.6" y="4.55" width="6" height="1.7" fill="#f0e8ff"/><rect x="0.6" y="8.3" width="6" height="1.7" fill="#f0e8ff"/><rect x="1.4" y="3.0" width="3.4" height="1" fill="#f0e8ff" opacity="0.55"/><rect x="1.4" y="6.75" width="3.4" height="1" fill="#f0e8ff" opacity="0.55"/></svg>
<div class="t" style="left:88.2px;top:422px;font-size:14px;line-height:16px;color:#e6dcf4;transform:scaleX(0.7240);">ZENOLOGY_2</div>
<div style="left:74px;top:448px;width:135px;height:27.6px;background:linear-gradient(#493459,#45305a);overflow:hidden;"><svg style="left:0;top:0" width="135" height="27.6"><rect x="0" y="1" width="30" height="1.3" fill="#5a466c"/><rect x="40" y="2" width="40" height="1.3" fill="#5a466c"/><rect x="70" y="6" width="40" height="1.3" fill="#5a466c"/><rect x="88" y="9" width="40" height="1.3" fill="#5a466c"/><rect x="80" y="12" width="45" height="1.3" fill="#5a466c"/><rect x="70" y="15" width="40" height="1.3" fill="#5a466c"/><rect x="0" y="24" width="12" height="1.3" fill="#5a466c"/><rect x="52" y="24" width="30" height="1.3" fill="#5a466c"/><rect x="0" y="5" width="20" height="1.3" fill="#5a466c"/><rect x="20" y="8" width="30" height="1.3" fill="#5a466c"/></svg></div>
<svg style="left:76px;top:456px;" width="10" height="11" viewBox="0 0 10 11"><rect x="5.8" y="0.8" width="3.6" height="9.2" fill="#f0e8ff"/><rect x="0.6" y="0.8" width="6" height="1.7" fill="#f0e8ff"/><rect x="0.6" y="4.55" width="6" height="1.7" fill="#f0e8ff"/><rect x="0.6" y="8.3" width="6" height="1.7" fill="#f0e8ff"/><rect x="1.4" y="3.0" width="3.4" height="1" fill="#f0e8ff" opacity="0.55"/><rect x="1.4" y="6.75" width="3.4" height="1" fill="#f0e8ff" opacity="0.55"/></svg>
<div class="t" style="left:88.2px;top:453px;font-size:14px;line-height:16px;color:#d6c8e6;transform:scaleX(0.8968);">Pattern 11</div>
<div style="left:74px;top:479px;width:135px;height:27.6px;background:linear-gradient(#493459,#45305a);overflow:hidden;"><svg style="left:0;top:0" width="135" height="27.6"><rect x="118" y="1" width="5" height="1.3" fill="#5a466c"/><rect x="126" y="2.4" width="5" height="1.3" fill="#5a466c"/><rect x="26" y="23.6" width="5" height="1.3" fill="#5a466c"/><rect x="40" y="22.4" width="5" height="1.3" fill="#5a466c"/><rect x="60" y="21.4" width="5" height="1.3" fill="#5a466c"/><rect x="92" y="23.6" width="5" height="1.3" fill="#5a466c"/><rect x="105" y="22.4" width="5" height="1.3" fill="#5a466c"/></svg></div>
<svg style="left:76px;top:487px;" width="10" height="11" viewBox="0 0 10 11"><rect x="5.8" y="0.8" width="3.6" height="9.2" fill="#f0e8ff"/><rect x="0.6" y="0.8" width="6" height="1.7" fill="#f0e8ff"/><rect x="0.6" y="4.55" width="6" height="1.7" fill="#f0e8ff"/><rect x="0.6" y="8.3" width="6" height="1.7" fill="#f0e8ff"/><rect x="1.4" y="3.0" width="3.4" height="1" fill="#f0e8ff" opacity="0.55"/><rect x="1.4" y="6.75" width="3.4" height="1" fill="#f0e8ff" opacity="0.55"/></svg>
<div class="t" style="left:88.2px;top:484px;font-size:14px;line-height:16px;color:#d6c8e6;transform:scaleX(0.8823);">Pattern 12</div>
<div style="left:74px;top:510px;width:135px;height:27.6px;background:linear-gradient(#493459,#45305a);overflow:hidden;"><svg style="left:0;top:0" width="135" height="27.6"><rect x="18.0" y="24.0" width="1.6" height="1.3" fill="#5a466c"/><rect x="23.6" y="22.8" width="1.6" height="1.3" fill="#5a466c"/><rect x="29.2" y="21.6" width="1.6" height="1.3" fill="#5a466c"/><rect x="34.8" y="20.4" width="1.6" height="1.3" fill="#5a466c"/><rect x="40.4" y="24.0" width="1.6" height="1.3" fill="#5a466c"/><rect x="46.0" y="22.8" width="1.6" height="1.3" fill="#5a466c"/><rect x="51.599999999999994" y="21.6" width="1.6" height="1.3" fill="#5a466c"/><rect x="57.199999999999996" y="20.4" width="1.6" height="1.3" fill="#5a466c"/><rect x="62.8" y="24.0" width="1.6" height="1.3" fill="#5a466c"/><rect x="68.4" y="22.8" width="1.6" height="1.3" fill="#5a466c"/><rect x="74.0" y="21.6" width="1.6" height="1.3" fill="#5a466c"/><rect x="79.6" y="20.4" width="1.6" height="1.3" fill="#5a466c"/><rect x="85.19999999999999" y="24.0" width="1.6" height="1.3" fill="#5a466c"/><rect x="90.8" y="22.8" width="1.6" height="1.3" fill="#5a466c"/><rect x="96.39999999999999" y="21.6" width="1.6" height="1.3" fill="#5a466c"/><rect x="102.0" y="20.4" width="1.6" height="1.3" fill="#5a466c"/><rect x="107.6" y="24.0" width="1.6" height="1.3" fill="#5a466c"/><rect x="113.19999999999999" y="22.8" width="1.6" height="1.3" fill="#5a466c"/><rect x="118.8" y="21.6" width="1.6" height="1.3" fill="#5a466c"/><rect x="124.39999999999999" y="20.4" width="1.6" height="1.3" fill="#5a466c"/><rect x="80" y="8.0" width="1.4" height="1.3" fill="#5a466c"/><rect x="85" y="9.6" width="1.4" height="1.3" fill="#5a466c"/><rect x="90" y="11.2" width="1.4" height="1.3" fill="#5a466c"/><rect x="95" y="12.8" width="1.4" height="1.3" fill="#5a466c"/><rect x="100" y="14.4" width="1.4" height="1.3" fill="#5a466c"/><rect x="105" y="8.0" width="1.4" height="1.3" fill="#5a466c"/><rect x="110" y="9.6" width="1.4" height="1.3" fill="#5a466c"/><rect x="115" y="11.2" width="1.4" height="1.3" fill="#5a466c"/><rect x="120" y="12.8" width="1.4" height="1.3" fill="#5a466c"/><rect x="125" y="14.4" width="1.4" height="1.3" fill="#5a466c"/></svg></div>
<svg style="left:76px;top:518px;" width="10" height="11" viewBox="0 0 10 11"><rect x="5.8" y="0.8" width="3.6" height="9.2" fill="#f0e8ff"/><rect x="0.6" y="0.8" width="6" height="1.7" fill="#f0e8ff"/><rect x="0.6" y="4.55" width="6" height="1.7" fill="#f0e8ff"/><rect x="0.6" y="8.3" width="6" height="1.7" fill="#f0e8ff"/><rect x="1.4" y="3.0" width="3.4" height="1" fill="#f0e8ff" opacity="0.55"/><rect x="1.4" y="6.75" width="3.4" height="1" fill="#f0e8ff" opacity="0.55"/></svg>
<div class="t" style="left:88.2px;top:515px;font-size:14px;line-height:16px;color:#d6c8e6;transform:scaleX(0.8823);">Pattern 13</div>
<svg style="left:231px;top:95px;" width="112" height="39.4" viewBox="0 0 112 39.4"><path d="M0.9,38.9 C6.4,30 7.4,8 11.8,2.6 Q13.2,0.7 16,0.7 H29.6 V38.9Z" fill="#4c3861" stroke="#5c4a72" stroke-width="0.7"/><rect x="31.4" y="0.7" width="79.5" height="38.2" fill="#4c3861" stroke="#5c4a72" stroke-width="0.7"/><path d="M13.2,28.4 h8.4 M17.4,24.2 v8.4" stroke="#fff" stroke-width="1.9"/><g transform="translate(45.9,9.4) scale(1.12) translate(-45.9,-9.4)"><path d="M36.6,9.4 l3,-1 1.8,-3 1.4,2.6 2.2,-5.8 2.2,5.8 1.4,-2.6 1.8,3 3,1 -3,1 -1.8,3 -1.4,-2.6 -2.2,5.8 -2.2,-5.8 -1.4,2.6 -1.8,-3z" fill="#8c7c9c"/></g><circle cx="67.4" cy="13" r="1.9" fill="none" stroke="#8c7c9c" stroke-width="1"/><circle cx="78.6" cy="5.6" r="1.9" fill="none" stroke="#8c7c9c" stroke-width="1"/><path d="M69,11.8 L77,6.8" stroke="#8c7c9c" stroke-width="1"/><rect x="89.7" y="3.9" width="15.7" height="11.1" fill="#fff"/><rect x="92.84" y="3.8" width="3.14" height="7.33" fill="#4c3861"/><rect x="99.12" y="3.8" width="3.14" height="7.33" fill="#4c3861"/></svg>
<div class="t" style="left:269px;top:121px;font-size:7.2px;line-height:9px;color:#fff;transform:scaleX(0.9500);font-weight:bold;">NOTE</div>
<div class="t" style="left:294.8px;top:121px;font-size:7.2px;line-height:9px;color:#8c7c9c;transform:scaleX(0.9904);font-weight:bold;">CHAN</div>
<div class="t" style="left:322.8px;top:121px;font-size:7.2px;line-height:9px;color:#8c7c9c;transform:scaleX(0.9001);font-weight:bold;">PAT</div>
<div style="left:231.4px;top:134.6px;width:112px;height:829px;background:#1b0c2a;"></div>
<div style="left:333px;top:135px;width:9.2px;height:828px;background:#2a1a42;"></div>
<div style="left:232px;top:135px;width:100px;height:54px;background:linear-gradient(#46325c,#44305a 12%,#3d2b51);border-radius:0 5px 5px 7px;box-shadow:inset 0 1px 0 rgba(90,70,112,.35);"></div>
<div class="t" style="left:234.2px;top:135px;font-size:13.9px;line-height:16px;color:#d9caef;transform:scaleX(0.8270);">Track 1</div>
<svg style="left:244.6px;top:182.2px;" width="14" height="4" viewBox="0 0 14 4"><rect x="1.2" y="1" width="1.6" height="1.6" fill="#2c1a3c"/><rect x="4.8" y="1" width="1.6" height="1.6" fill="#2c1a3c"/><rect x="8.4" y="1" width="1.6" height="1.6" fill="#2c1a3c"/></svg>
<svg style="left:314px;top:172px;" width="15" height="15" viewBox="0 0 15 15"><circle cx="7.4" cy="7.6" r="5.2" fill="#3c2a50" stroke="#75658a" stroke-width="0.9"/><circle cx="7.4" cy="7.6" r="4" fill="#1c0832"/><circle cx="7.4" cy="7.6" r="3.2" fill="#d636f0"/><ellipse cx="7.4" cy="6.2" rx="1.7" ry="0.9" fill="#fbd0ff"/></svg>
<svg style="left:299px;top:175px;" width="13" height="9" viewBox="0 0 13 9"><path d="M2,7.2 L6.5,1.6 L11,7.2Z" fill="#c9bade"/></svg>
<div style="left:232px;top:188px;width:6px;height:55px;background:#150b24;"></div>
<div style="left:238px;top:189px;width:94px;height:54px;background:linear-gradient(#46325c,#44305a 12%,#3d2b51);border-radius:0 5px 5px 0;box-shadow:inset 0 1px 0 rgba(90,70,112,.35);"></div>
<div class="t" style="left:240.2px;top:189px;font-size:13.9px;line-height:16px;color:#d9caef;transform:scaleX(0.8270);">Track 2</div>
<svg style="left:244.6px;top:236.2px;" width="14" height="4" viewBox="0 0 14 4"><rect x="1.2" y="1" width="1.6" height="1.6" fill="#2c1a3c"/><rect x="4.8" y="1" width="1.6" height="1.6" fill="#2c1a3c"/><rect x="8.4" y="1" width="1.6" height="1.6" fill="#2c1a3c"/></svg>
<svg style="left:314px;top:226px;" width="15" height="15" viewBox="0 0 15 15"><circle cx="7.4" cy="7.6" r="5.2" fill="#3c2a50" stroke="#75658a" stroke-width="0.9"/><circle cx="7.4" cy="7.6" r="4" fill="#1c0832"/><circle cx="7.4" cy="7.6" r="3.2" fill="#d636f0"/><ellipse cx="7.4" cy="6.2" rx="1.7" ry="0.9" fill="#fbd0ff"/></svg>
<div style="left:333.2px;top:189.6px;width:8.8px;height:52.2px;background:#dda2ff;"></div>
<div style="left:232px;top:243px;width:100px;height:54px;background:linear-gradient(#46325c,#44305a 12%,#3d2b51);border-radius:0 5px 5px 0;box-shadow:inset 0 1px 0 rgba(90,70,112,.35);"></div>
<div class="t" style="left:234.2px;top:243px;font-size:13.9px;line-height:16px;color:#d9caef;transform:scaleX(0.8270);">Track 3</div>
<svg style="left:244.6px;top:290.2px;" width="14" height="4" viewBox="0 0 14 4"><rect x="1.2" y="1" width="1.6" height="1.6" fill="#2c1a3c"/><rect x="4.8" y="1" width="1.6" height="1.6" fill="#2c1a3c"/><rect x="8.4" y="1" width="1.6" height="1.6" fill="#2c1a3c"/></svg>
<svg style="left:314px;top:280px;" width="15" height="15" viewBox="0 0 15 15"><circle cx="7.4" cy="7.6" r="5.2" fill="#3c2a50" stroke="#75658a" stroke-width="0.9"/><circle cx="7.4" cy="7.6" r="4" fill="#1c0832"/><circle cx="7.4" cy="7.6" r="3.2" fill="#d636f0"/><ellipse cx="7.4" cy="6.2" rx="1.7" ry="0.9" fill="#fbd0ff"/></svg>
<div style="left:333.2px;top:243.6px;width:8.8px;height:52.2px;background:#dda2ff;"></div>
<div style="left:232px;top:297px;width:100px;height:54px;background:linear-gradient(#46325c,#44305a 12%,#3d2b51);border-radius:0 5px 5px 0;box-shadow:inset 0 1px 0 rgba(90,70,112,.35);"></div>
<div class="t" style="left:234.2px;top:297px;font-size:13.9px;line-height:16px;color:#d9caef;transform:scaleX(0.8270);">Track 4</div>
<svg style="left:244.6px;top:344.2px;" width="14" height="4" viewBox="0 0 14 4"><rect x="1.2" y="1" width="1.6" height="1.6" fill="#2c1a3c"/><rect x="4.8" y="1" width="1.6" height="1.6" fill="#2c1a3c"/><rect x="8.4" y="1" width="1.6" height="1.6" fill="#2c1a3c"/></svg>
<svg style="left:314px;top:334px;" width="15" height="15" viewBox="0 0 15 15"><circle cx="7.4" cy="7.6" r="5.2" fill="#3c2a50" stroke="#75658a" stroke-width="0.9"/><circle cx="7.4" cy="7.6" r="4" fill="#1c0832"/><circle cx="7.4" cy="7.6" r="3.2" fill="#d636f0"/><ellipse cx="7.4" cy="6.2" rx="1.7" ry="0.9" fill="#fbd0ff"/></svg>
<div style="left:232px;top:351px;width:100px;height:54px;background:linear-gradient(#46325c,#44305a 12%,#3d2b51);border-radius:0 5px 5px 0;box-shadow:inset 0 1px 0 rgba(90,70,112,.35);"></div>
<div class="t" style="left:234.2px;top:351px;font-size:13.9px;line-height:16px;color:#d9caef;transform:scaleX(0.8270);">Track 5</div>
<svg style="left:244.6px;top:398.2px;" width="14" height="4" viewBox="0 0 14 4"><rect x="1.2" y="1" width="1.6" height="1.6" fill="#2c1a3c"/><rect x="4.8" y="1" width="1.6" height="1.6" fill="#2c1a3c"/><rect x="8.4" y="1" width="1.6" height="1.6" fill="#2c1a3c"/></svg>
<svg style="left:314px;top:388px;" width="15" height="15" viewBox="0 0 15 15"><circle cx="7.4" cy="7.6" r="5.2" fill="#3c2a50" stroke="#75658a" stroke-width="0.9"/><circle cx="7.4" cy="7.6" r="4" fill="#1c0832"/><circle cx="7.4" cy="7.6" r="3.2" fill="#d636f0"/><ellipse cx="7.4" cy="6.2" rx="1.7" ry="0.9" fill="#fbd0ff"/></svg>
<div style="left:333.2px;top:351.6px;width:8.8px;height:52.2px;background:#a97fdd;"></div>
<div style="left:232px;top:405px;width:100px;height:54px;background:linear-gradient(#46325c,#44305a 12%,#3d2b51);border-radius:0 5px 5px 0;box-shadow:inset 0 1px 0 rgba(90,70,112,.35);"></div>
<div class="t" style="left:234.2px;top:405px;font-size:13.9px;line-height:16px;color:#d9caef;transform:scaleX(0.8270);">Track 6</div>
<svg style="left:244.6px;top:452.2px;" width="14" height="4" viewBox="0 0 14 4"><rect x="1.2" y="1" width="1.6" height="1.6" fill="#2c1a3c"/><rect x="4.8" y="1" width="1.6" height="1.6" fill="#2c1a3c"/><rect x="8.4" y="1" width="1.6" height="1.6" fill="#2c1a3c"/></svg>
<svg style="left:314px;top:442px;" width="15" height="15" viewBox="0 0 15 15"><circle cx="7.4" cy="7.6" r="5.2" fill="#3c2a50" stroke="#75658a" stroke-width="0.9"/><circle cx="7.4" cy="7.6" r="4" fill="#1c0832"/><circle cx="7.4" cy="7.6" r="3.2" fill="#d636f0"/><ellipse cx="7.4" cy="6.2" rx="1.7" ry="0.9" fill="#fbd0ff"/></svg>
<div style="left:333.2px;top:405.6px;width:8.8px;height:52.2px;background:#6a4892;box-shadow:inset 0 0 0 1px #a374d4;"></div>
<div style="left:335.8px;top:408.8px;width:3.6px;height:45.4px;background:#dda2ff;"></div>
<div style="left:232px;top:459px;width:100px;height:54px;background:linear-gradient(#46325c,#44305a 12%,#3d2b51);border-radius:0 5px 5px 0;box-shadow:inset 0 1px 0 rgba(90,70,112,.35);"></div>
<div class="t" style="left:234.2px;top:459px;font-size:13.9px;line-height:16px;color:#d9caef;transform:scaleX(0.8270);">Track 7</div>
<svg style="left:244.6px;top:506.2px;" width="14" height="4" viewBox="0 0 14 4"><rect x="1.2" y="1" width="1.6" height="1.6" fill="#2c1a3c"/><rect x="4.8" y="1" width="1.6" height="1.6" fill="#2c1a3c"/><rect x="8.4" y="1" width="1.6" height="1.6" fill="#2c1a3c"/></svg>
<svg style="left:314px;top:496px;" width="15" height="15" viewBox="0 0 15 15"><circle cx="7.4" cy="7.6" r="5.2" fill="#3c2a50" stroke="#75658a" stroke-width="0.9"/><circle cx="7.4" cy="7.6" r="4" fill="#1c0832"/><circle cx="7.4" cy="7.6" r="3.2" fill="#d636f0"/><ellipse cx="7.4" cy="6.2" rx="1.7" ry="0.9" fill="#fbd0ff"/></svg>
<div style="left:333.2px;top:459.6px;width:8.8px;height:52.2px;background:#dda2ff;"></div>
<div style="left:232px;top:513px;width:100px;height:54px;background:linear-gradient(#46325c,#44305a 12%,#3d2b51);border-radius:0 5px 5px 0;box-shadow:inset 0 1px 0 rgba(90,70,112,.35);"></div>
<div class="t" style="left:234.2px;top:513px;font-size:13.9px;line-height:16px;color:#d9caef;transform:scaleX(0.8270);">Track 8</div>
<svg style="left:244.6px;top:560.2px;" width="14" height="4" viewBox="0 0 14 4"><rect x="1.2" y="1" width="1.6" height="1.6" fill="#2c1a3c"/><rect x="4.8" y="1" width="1.6" height="1.6" fill="#2c1a3c"/><rect x="8.4" y="1" width="1.6" height="1.6" fill="#2c1a3c"/></svg>
<svg style="left:314px;top:550px;" width="15" height="15" viewBox="0 0 15 15"><circle cx="7.4" cy="7.6" r="5.2" fill="#3c2a50" stroke="#75658a" stroke-width="0.9"/><circle cx="7.4" cy="7.6" r="4" fill="#1c0832"/><circle cx="7.4" cy="7.6" r="3.2" fill="#d636f0"/><ellipse cx="7.4" cy="6.2" rx="1.7" ry="0.9" fill="#fbd0ff"/></svg>
<div style="left:232px;top:567px;width:100px;height:54px;background:linear-gradient(#46325c,#44305a 12%,#3d2b51);border-radius:0 5px 5px 0;box-shadow:inset 0 1px 0 rgba(90,70,112,.35);"></div>
<div class="t" style="left:234.2px;top:567px;font-size:13.9px;line-height:16px;color:#d9caef;transform:scaleX(0.8270);">Track 9</div>
<svg style="left:244.6px;top:614.2px;" width="14" height="4" viewBox="0 0 14 4"><rect x="1.2" y="1" width="1.6" height="1.6" fill="#2c1a3c"/><rect x="4.8" y="1" width="1.6" height="1.6" fill="#2c1a3c"/><rect x="8.4" y="1" width="1.6" height="1.6" fill="#2c1a3c"/></svg>
<svg style="left:314px;top:604px;" width="15" height="15" viewBox="0 0 15 15"><circle cx="7.4" cy="7.6" r="5.2" fill="#3c2a50" stroke="#75658a" stroke-width="0.9"/><circle cx="7.4" cy="7.6" r="4" fill="#1c0832"/><circle cx="7.4" cy="7.6" r="3.2" fill="#d636f0"/><ellipse cx="7.4" cy="6.2" rx="1.7" ry="0.9" fill="#fbd0ff"/></svg>
<div style="left:333.2px;top:567.6px;width:8.8px;height:52.2px;background:#dda2ff;"></div>
<div style="left:232px;top:621px;width:100px;height:54px;background:linear-gradient(#46325c,#44305a 12%,#3d2b51);border-radius:0 5px 5px 0;box-shadow:inset 0 1px 0 rgba(90,70,112,.35);"></div>
<div class="t" style="left:234.2px;top:621px;font-size:13.9px;line-height:16px;color:#d9caef;transform:scaleX(0.8327);">Track 10</div>
<svg style="left:244.6px;top:668.2px;" width="14" height="4" viewBox="0 0 14 4"><rect x="1.2" y="1" width="1.6" height="1.6" fill="#2c1a3c"/><rect x="4.8" y="1" width="1.6" height="1.6" fill="#2c1a3c"/><rect x="8.4" y="1" width="1.6" height="1.6" fill="#2c1a3c"/></svg>
<svg style="left:314px;top:658px;" width="15" height="15" viewBox="0 0 15 15"><circle cx="7.4" cy="7.6" r="5.2" fill="#3c2a50" stroke="#75658a" stroke-width="0.9"/><circle cx="7.4" cy="7.6" r="4" fill="#1c0832"/><circle cx="7.4" cy="7.6" r="3.2" fill="#d636f0"/><ellipse cx="7.4" cy="6.2" rx="1.7" ry="0.9" fill="#fbd0ff"/></svg>
<div style="left:333.2px;top:621.6px;width:8.8px;height:52.2px;background:#a97fdd;"></div>
<div style="left:232px;top:675px;width:100px;height:54px;background:linear-gradient(#46325c,#44305a 12%,#3d2b51);border-radius:0 5px 5px 0;box-shadow:inset 0 1px 0 rgba(90,70,112,.35);"></div>
<div class="t" style="left:234.2px;top:675px;font-size:13.9px;line-height:16px;color:#d9caef;transform:scaleX(0.8491);">Track 11</div>
<svg style="left:244.6px;top:722.2px;" width="14" height="4" viewBox="0 0 14 4"><rect x="1.2" y="1" width="1.6" height="1.6" fill="#2c1a3c"/><rect x="4.8" y="1" width="1.6" height="1.6" fill="#2c1a3c"/><rect x="8.4" y="1" width="1.6" height="1.6" fill="#2c1a3c"/></svg>
<svg style="left:314px;top:712px;" width="15" height="15" viewBox="0 0 15 15"><circle cx="7.4" cy="7.6" r="5.2" fill="#3c2a50" stroke="#75658a" stroke-width="0.9"/><circle cx="7.4" cy="7.6" r="4" fill="#1c0832"/><circle cx="7.4" cy="7.6" r="3.2" fill="#d636f0"/><ellipse cx="7.4" cy="6.2" rx="1.7" ry="0.9" fill="#fbd0ff"/></svg>
<div style="left:232px;top:729px;width:100px;height:54px;background:linear-gradient(#46325c,#44305a 12%,#3d2b51);border-radius:0 5px 5px 0;box-shadow:inset 0 1px 0 rgba(90,70,112,.35);"></div>
<div class="t" style="left:234.2px;top:729px;font-size:13.9px;line-height:16px;color:#d9caef;transform:scaleX(0.8327);">Track 12</div>
<svg style="left:244.6px;top:776.2px;" width="14" height="4" viewBox="0 0 14 4"><rect x="1.2" y="1" width="1.6" height="1.6" fill="#2c1a3c"/><rect x="4.8" y="1" width="1.6" height="1.6" fill="#2c1a3c"/><rect x="8.4" y="1" width="1.6" height="1.6" fill="#2c1a3c"/></svg>
<svg style="left:314px;top:766px;" width="15" height="15" viewBox="0 0 15 15"><circle cx="7.4" cy="7.6" r="5.2" fill="#3c2a50" stroke="#75658a" stroke-width="0.9"/><circle cx="7.4" cy="7.6" r="4" fill="#1c0832"/><circle cx="7.4" cy="7.6" r="3.2" fill="#d636f0"/><ellipse cx="7.4" cy="6.2" rx="1.7" ry="0.9" fill="#fbd0ff"/></svg>
<div style="left:232px;top:783px;width:100px;height:54px;background:linear-gradient(#46325c,#44305a 12%,#3d2b51);border-radius:0 5px 5px 0;box-shadow:inset 0 1px 0 rgba(90,70,112,.35);"></div>
<div class="t" style="left:234.2px;top:783px;font-size:13.9px;line-height:16px;color:#d9caef;transform:scaleX(0.8327);">Track 13</div>
<svg style="left:244.6px;top:830.2px;" width="14" height="4" viewBox="0 0 14 4"><rect x="1.2" y="1" width="1.6" height="1.6" fill="#2c1a3c"/><rect x="4.8" y="1" width="1.6" height="1.6" fill="#2c1a3c"/><rect x="8.4" y="1" width="1.6" height="1.6" fill="#2c1a3c"/></svg>
<svg style="left:314px;top:820px;" width="15" height="15" viewBox="0 0 15 15"><circle cx="7.4" cy="7.6" r="5.2" fill="#3c2a50" stroke="#75658a" stroke-width="0.9"/><circle cx="7.4" cy="7.6" r="4" fill="#1c0832"/><circle cx="7.4" cy="7.6" r="3.2" fill="#d636f0"/><ellipse cx="7.4" cy="6.2" rx="1.7" ry="0.9" fill="#fbd0ff"/></svg>
<div style="left:232px;top:837px;width:100px;height:54px;background:linear-gradient(#46325c,#44305a 12%,#3d2b51);border-radius:0 5px 5px 0;box-shadow:inset 0 1px 0 rgba(90,70,112,.35);"></div>
<div class="t" style="left:234.2px;top:837px;font-size:13.9px;line-height:16px;color:#d9caef;transform:scaleX(0.8327);">Track 14</div>
<svg style="left:244.6px;top:884.2px;" width="14" height="4" viewBox="0 0 14 4"><rect x="1.2" y="1" width="1.6" height="1.6" fill="#2c1a3c"/><rect x="4.8" y="1" width="1.6" height="1.6" fill="#2c1a3c"/><rect x="8.4" y="1" width="1.6" height="1.6" fill="#2c1a3c"/></svg>
<svg style="left:314px;top:874px;" width="15" height="15" viewBox="0 0 15 15"><circle cx="7.4" cy="7.6" r="5.2" fill="#3c2a50" stroke="#75658a" stroke-width="0.9"/><circle cx="7.4" cy="7.6" r="4" fill="#1c0832"/><circle cx="7.4" cy="7.6" r="3.2" fill="#d636f0"/><ellipse cx="7.4" cy="6.2" rx="1.7" ry="0.9" fill="#fbd0ff"/></svg>
<div style="left:232px;top:891px;width:100px;height:54px;background:linear-gradient(#46325c,#44305a 12%,#3d2b51);border-radius:0 5px 5px 0;box-shadow:inset 0 1px 0 rgba(90,70,112,.35);"></div>
<div class="t" style="left:234.2px;top:891px;font-size:13.9px;line-height:16px;color:#8b7a9f;transform:scaleX(0.8327);">Track 15</div>
<svg style="left:244.6px;top:938.2px;" width="14" height="4" viewBox="0 0 14 4"><rect x="1.2" y="1" width="1.6" height="1.6" fill="#2c1a3c"/><rect x="4.8" y="1" width="1.6" height="1.6" fill="#2c1a3c"/><rect x="8.4" y="1" width="1.6" height="1.6" fill="#2c1a3c"/></svg>
<svg style="left:314px;top:928px;" width="15" height="15" viewBox="0 0 15 15"><circle cx="7.4" cy="7.6" r="5.2" fill="#3c2a50" stroke="#75658a" stroke-width="0.9"/><circle cx="7.4" cy="7.6" r="4" fill="#1c0832"/><circle cx="7.4" cy="7.6" r="3.2" fill="#d636f0"/><ellipse cx="7.4" cy="6.2" rx="1.7" ry="0.9" fill="#fbd0ff"/></svg>
<div style="left:232px;top:945px;width:100px;height:54px;background:linear-gradient(#46325c,#44305a 12%,#3d2b51);border-radius:0 5px 5px 0;box-shadow:inset 0 1px 0 rgba(90,70,112,.35);"></div>
<div class="t" style="left:234.2px;top:945px;font-size:13.9px;line-height:16px;color:#8b7a9f;transform:scaleX(0.8327);">Track 16</div>
<svg style="left:244.6px;top:992.2px;" width="14" height="4" viewBox="0 0 14 4"><rect x="1.2" y="1" width="1.6" height="1.6" fill="#2c1a3c"/><rect x="4.8" y="1" width="1.6" height="1.6" fill="#2c1a3c"/><rect x="8.4" y="1" width="1.6" height="1.6" fill="#2c1a3c"/></svg>
<svg style="left:314px;top:982px;" width="15" height="15" viewBox="0 0 15 15"><circle cx="7.4" cy="7.6" r="5.2" fill="#3c2a50" stroke="#75658a" stroke-width="0.9"/><circle cx="7.4" cy="7.6" r="4" fill="#1c0832"/><circle cx="7.4" cy="7.6" r="3.2" fill="#d636f0"/><ellipse cx="7.4" cy="6.2" rx="1.7" ry="0.9" fill="#fbd0ff"/></svg>
<div style="left:342.2px;top:134.6px;width:1.4px;height:829px;background:#14062a;"></div>
<div style="left:343px;top:95.2px;width:19px;height:18.6px;background:#3c2a50;box-shadow:inset 0 0 0 0.7px #2c1c3e;"></div>
<svg style="left:346px;top:98px;" width="12" height="13" viewBox="0 0 12 13"><path d="M8.4,1.6 L3.4,6.4 L8.4,11.2" fill="none" stroke="#6a5a7c" stroke-width="1.2"/></svg>
<div style="left:362px;top:95.2px;width:1153px;height:19px;background:#2c1a3e;"></div>
<div style="left:363px;top:95.4px;width:1122px;height:18.4px;background:#3d2058;box-shadow:inset 0 0 0 0.9px #6e5c84;"></div>
<svg style="left:363px;top:95.4px;" width="1122" height="18.4" viewBox="0 0 1122 18.4"><rect x="108.3" y="1.7" width="646.3" height="4.8" fill="#6b4f8e"/><rect x="108.3" y="8.5" width="430.9" height="5.3" fill="#6b4f8e"/><rect x="108.3" y="1.7" width="646.3" height="1.6" fill="#745896" opacity="0.6"/><rect x="108.3" y="8.5" width="430.9" height="1.6" fill="#5f4482" opacity="0.8"/><rect x="134.3" y="4.9" width="81.1" height="0.8" fill="#3d2058"/><rect x="107.8" y="1.4" width="0.9" height="12.6" fill="#4e3470"/><rect x="242.0" y="4.9" width="81.1" height="0.8" fill="#3d2058"/><rect x="215.5" y="1.4" width="0.9" height="12.6" fill="#4e3470"/><rect x="349.8" y="4.9" width="81.1" height="0.8" fill="#3d2058"/><rect x="323.3" y="1.4" width="0.9" height="12.6" fill="#4e3470"/><rect x="457.5" y="4.9" width="81.1" height="0.8" fill="#3d2058"/><rect x="431.0" y="1.4" width="0.9" height="12.6" fill="#4e3470"/><rect x="565.2" y="4.9" width="81.1" height="0.8" fill="#3d2058"/><rect x="538.7" y="1.4" width="0.9" height="5.4" fill="#4e3470"/><rect x="672.9" y="4.9" width="81.1" height="0.8" fill="#3d2058"/><rect x="646.4" y="1.4" width="0.9" height="5.4" fill="#4e3470"/><rect x="189.1" y="12.5" width="26.5" height="1.4" fill="#3d2058"/><rect x="296.8" y="12.5" width="26.5" height="1.4" fill="#3d2058"/><rect x="404.6" y="12.5" width="26.5" height="1.4" fill="#3d2058"/><rect x="512.3" y="12.5" width="26.5" height="1.4" fill="#3d2058"/><rect x="323.8" y="6.5" width="215.4" height="2" fill="#62478a"/><rect x="431.5" y="6.5" width="107.7" height="2" fill="#6b4f8e"/><rect x="81.4" y="15.1" width="107.7" height="1.2" fill="#8a6292"/><rect x="47.7" y="16.3" width="60.6" height="1.1" fill="#6f9a94"/><rect x="512.3" y="1" width="242.4" height="1.1" fill="#5b8b8a"/><rect x="512.3" y="16.4" width="269.3" height="1.1" fill="#5a6490"/><rect x="477.6" y="0.8" width="1.2" height="17" fill="#e848f8"/></svg>
<div style="left:343.4px;top:114.4px;width:1172px;height:20.4px;background:linear-gradient(#1c0730,#17042c);"></div>
<div style="left:343.4px;top:133.6px;width:1172px;height:1.4px;background:#0f0222;"></div>
<div class="t" style="left:343.87px;top:119px;font-size:11.4px;line-height:12px;color:#cbbfe0;transform:scaleX(0.7571);">1</div>
<div class="t" style="left:374.56px;top:120px;font-size:9.8px;line-height:11px;color:#a092be;transform:scaleX(0.7889);">2</div>
<div class="t" style="left:404.85px;top:120px;font-size:9.8px;line-height:11px;color:#a092be;transform:scaleX(0.7889);">3</div>
<div class="t" style="left:435.14px;top:120px;font-size:9.8px;line-height:11px;color:#a092be;transform:scaleX(0.7889);">4</div>
<div class="t" style="left:465.03px;top:119px;font-size:11.4px;line-height:12px;color:#cbbfe0;transform:scaleX(0.7571);">5</div>
<div class="t" style="left:495.72px;top:120px;font-size:9.8px;line-height:11px;color:#a092be;transform:scaleX(0.7889);">6</div>
<div class="t" style="left:526.01px;top:120px;font-size:9.8px;line-height:11px;color:#a092be;transform:scaleX(0.7889);">7</div>
<div class="t" style="left:556.3px;top:120px;font-size:9.8px;line-height:11px;color:#a092be;transform:scaleX(0.7889);">8</div>
<div class="t" style="left:586.19px;top:119px;font-size:11.4px;line-height:12px;color:#cbbfe0;transform:scaleX(0.7571);">9</div>
<div class="t" style="left:616.88px;top:120px;font-size:9.8px;line-height:11px;color:#a092be;transform:scaleX(0.7889);">10</div>
<div class="t" style="left:647.17px;top:120px;font-size:9.8px;line-height:11px;color:#a092be;transform:scaleX(0.8453);">11</div>
<div class="t" style="left:677.46px;top:120px;font-size:9.8px;line-height:11px;color:#a092be;transform:scaleX(0.7889);">12</div>
<div class="t" style="left:707.35px;top:119px;font-size:11.4px;line-height:12px;color:#cbbfe0;transform:scaleX(0.8044);">13</div>
<div class="t" style="left:738.04px;top:120px;font-size:9.8px;line-height:11px;color:#a092be;transform:scaleX(0.7889);">14</div>
<div class="t" style="left:768.33px;top:120px;font-size:9.8px;line-height:11px;color:#a092be;transform:scaleX(0.7889);">15</div>
<div class="t" style="left:798.62px;top:120px;font-size:9.8px;line-height:11px;color:#a092be;transform:scaleX(0.7889);">16</div>
<div class="t" style="left:828.51px;top:119px;font-size:11.4px;line-height:12px;color:#cbbfe0;transform:scaleX(0.8044);">17</div>
<div class="t" style="left:859.2px;top:120px;font-size:9.8px;line-height:11px;color:#a092be;transform:scaleX(0.7889);">18</div>
<div class="t" style="left:889.49px;top:120px;font-size:9.8px;line-height:11px;color:#a092be;transform:scaleX(0.7889);">19</div>
<div class="t" style="left:919.78px;top:120px;font-size:9.8px;line-height:11px;color:#a092be;transform:scaleX(0.7889);">20</div>
<div class="t" style="left:949.67px;top:119px;font-size:11.4px;line-height:12px;color:#cbbfe0;transform:scaleX(0.8044);">21</div>
<div class="t" style="left:980.36px;top:120px;font-size:9.8px;line-height:11px;color:#a092be;transform:scaleX(0.7889);">22</div>
<div class="t" style="left:1010.65px;top:120px;font-size:9.8px;line-height:11px;color:#a092be;transform:scaleX(0.7889);">23</div>
<div class="t" style="left:1040.94px;top:120px;font-size:9.8px;line-height:11px;color:#a092be;transform:scaleX(0.7889);">24</div>
<div class="t" style="left:1070.83px;top:119px;font-size:11.4px;line-height:12px;color:#cbbfe0;transform:scaleX(0.8044);">25</div>
<div class="t" style="left:1101.52px;top:120px;font-size:9.8px;line-height:11px;color:#a092be;transform:scaleX(0.7889);">26</div>
<div class="t" style="left:1131.81px;top:120px;font-size:9.8px;line-height:11px;color:#a092be;transform:scaleX(0.7889);">27</div>
<div class="t" style="left:1162.1px;top:120px;font-size:9.8px;line-height:11px;color:#a092be;transform:scaleX(0.7889);">28</div>
<div class="t" style="left:1191.99px;top:119px;font-size:11.4px;line-height:12px;color:#cbbfe0;transform:scaleX(0.8044);">29</div>
<div class="t" style="left:1222.68px;top:120px;font-size:9.8px;line-height:11px;color:#a092be;transform:scaleX(0.7889);">30</div>
<div class="t" style="left:1252.97px;top:120px;font-size:9.8px;line-height:11px;color:#a092be;transform:scaleX(0.7889);">31</div>
<div class="t" style="left:1283.26px;top:120px;font-size:9.8px;line-height:11px;color:#a092be;transform:scaleX(0.7889);">32</div>
<div class="t" style="left:1313.15px;top:119px;font-size:11.4px;line-height:12px;color:#cbbfe0;transform:scaleX(0.8044);">33</div>
<div class="t" style="left:1343.84px;top:120px;font-size:9.8px;line-height:11px;color:#a092be;transform:scaleX(0.7889);">34</div>
<div class="t" style="left:1374.13px;top:120px;font-size:9.8px;line-height:11px;color:#a092be;transform:scaleX(0.7889);">35</div>
<div class="t" style="left:1404.42px;top:120px;font-size:9.8px;line-height:11px;color:#a092be;transform:scaleX(0.7889);">36</div>
<div class="t" style="left:1434.31px;top:119px;font-size:11.4px;line-height:12px;color:#cbbfe0;transform:scaleX(0.8044);">37</div>
<div class="t" style="left:1465px;top:120px;font-size:9.8px;line-height:11px;color:#a092be;transform:scaleX(0.7889);">38</div>
<div class="t" style="left:1495.29px;top:120px;font-size:9.8px;line-height:11px;color:#a092be;transform:scaleX(0.7889);">39</div>
<svg style="left:698.95px;top:115px;" width="16" height="7" viewBox="0 0 16 7"><path d="M1,0 H15 L8,6Z" fill="#2c1848"/></svg>
<svg style="left:343px;top:135px;" width="1172" height="828" viewBox="0 0 1172 828"><rect x="0" y="0" width="1172" height="828" fill="#2c074c"/><rect x="0" y="0" width="121" height="828" fill="#320c52"/><rect x="242" y="0" width="121" height="828" fill="#320c52"/><rect x="485" y="0" width="121" height="828" fill="#320c52"/><rect x="727" y="0" width="121" height="828" fill="#320c52"/><rect x="969" y="0" width="121" height="828" fill="#320c52"/><rect x="0" y="0" width="1" height="828" fill="#10002a"/><rect x="15" y="0" width="1" height="828" fill="#1e023b"/><rect x="30" y="0" width="1" height="828" fill="#180032"/><rect x="45" y="0" width="1" height="828" fill="#1e023b"/><rect x="61" y="0" width="1" height="828" fill="#180032"/><rect x="76" y="0" width="1" height="828" fill="#1e023b"/><rect x="91" y="0" width="1" height="828" fill="#180032"/><rect x="106" y="0" width="1" height="828" fill="#1e023b"/><rect x="121" y="0" width="1" height="828" fill="#10002a"/><rect x="136" y="0" width="1" height="828" fill="#1e023b"/><rect x="151" y="0" width="1" height="828" fill="#180032"/><rect x="167" y="0" width="1" height="828" fill="#1e023b"/><rect x="182" y="0" width="1" height="828" fill="#180032"/><rect x="197" y="0" width="1" height="828" fill="#1e023b"/><rect x="212" y="0" width="1" height="828" fill="#180032"/><rect x="227" y="0" width="1" height="828" fill="#1e023b"/><rect x="242" y="0" width="1" height="828" fill="#10002a"/><rect x="257" y="0" width="1" height="828" fill="#1e023b"/><rect x="273" y="0" width="1" height="828" fill="#180032"/><rect x="288" y="0" width="1" height="828" fill="#1e023b"/><rect x="303" y="0" width="1" height="828" fill="#180032"/><rect x="318" y="0" width="1" height="828" fill="#1e023b"/><rect x="333" y="0" width="1" height="828" fill="#180032"/><rect x="348" y="0" width="1" height="828" fill="#1e023b"/><rect x="363" y="0" width="1" height="828" fill="#10002a"/><rect x="379" y="0" width="1" height="828" fill="#1e023b"/><rect x="394" y="0" width="1" height="828" fill="#180032"/><rect x="409" y="0" width="1" height="828" fill="#1e023b"/><rect x="424" y="0" width="1" height="828" fill="#180032"/><rect x="439" y="0" width="1" height="828" fill="#1e023b"/><rect x="454" y="0" width="1" height="828" fill="#180032"/><rect x="469" y="0" width="1" height="828" fill="#1e023b"/><rect x="485" y="0" width="1" height="828" fill="#10002a"/><rect x="500" y="0" width="1" height="828" fill="#1e023b"/><rect x="515" y="0" width="1" height="828" fill="#180032"/><rect x="530" y="0" width="1" height="828" fill="#1e023b"/><rect x="545" y="0" width="1" height="828" fill="#180032"/><rect x="560" y="0" width="1" height="828" fill="#1e023b"/><rect x="575" y="0" width="1" height="828" fill="#180032"/><rect x="591" y="0" width="1" height="828" fill="#1e023b"/><rect x="606" y="0" width="1" height="828" fill="#10002a"/><rect x="621" y="0" width="1" height="828" fill="#1e023b"/><rect x="636" y="0" width="1" height="828" fill="#180032"/><rect x="651" y="0" width="1" height="828" fill="#1e023b"/><rect x="666" y="0" width="1" height="828" fill="#180032"/><rect x="681" y="0" width="1" height="828" fill="#1e023b"/><rect x="697" y="0" width="1" height="828" fill="#180032"/><rect x="712" y="0" width="1" height="828" fill="#1e023b"/><rect x="727" y="0" width="1" height="828" fill="#10002a"/><rect x="742" y="0" width="1" height="828" fill="#1e023b"/><rect x="757" y="0" width="1" height="828" fill="#180032"/><rect x="772" y="0" width="1" height="828" fill="#1e023b"/><rect x="788" y="0" width="1" height="828" fill="#180032"/><rect x="803" y="0" width="1" height="828" fill="#1e023b"/><rect x="818" y="0" width="1" height="828" fill="#180032"/><rect x="833" y="0" width="1" height="828" fill="#1e023b"/><rect x="848" y="0" width="1" height="828" fill="#10002a"/><rect x="863" y="0" width="1" height="828" fill="#1e023b"/><rect x="878" y="0" width="1" height="828" fill="#180032"/><rect x="894" y="0" width="1" height="828" fill="#1e023b"/><rect x="909" y="0" width="1" height="828" fill="#180032"/><rect x="924" y="0" width="1" height="828" fill="#1e023b"/><rect x="939" y="0" width="1" height="828" fill="#180032"/><rect x="954" y="0" width="1" height="828" fill="#1e023b"/><rect x="969" y="0" width="1" height="828" fill="#10002a"/><rect x="984" y="0" width="1" height="828" fill="#1e023b"/><rect x="1000" y="0" width="1" height="828" fill="#180032"/><rect x="1015" y="0" width="1" height="828" fill="#1e023b"/><rect x="1030" y="0" width="1" height="828" fill="#180032"/><rect x="1045" y="0" width="1" height="828" fill="#1e023b"/><rect x="1060" y="0" width="1" height="828" fill="#180032"/><rect x="1075" y="0" width="1" height="828" fill="#1e023b"/><rect x="1090" y="0" width="1" height="828" fill="#10002a"/><rect x="1106" y="0" width="1" height="828" fill="#1e023b"/><rect x="1121" y="0" width="1" height="828" fill="#180032"/><rect x="1136" y="0" width="1" height="828" fill="#1e023b"/><rect x="1151" y="0" width="1" height="828" fill="#180032"/><rect x="1166" y="0" width="1" height="828" fill="#1e023b"/><rect x="0" y="52" width="1172" height="1" fill="#1a0036" opacity="0.45"/><rect x="0" y="53" width="1172" height="1" fill="#12002b"/><rect x="0" y="54" width="1172" height="1" fill="#1a0036" opacity="0.3"/><rect x="0" y="106" width="1172" height="1" fill="#1a0036" opacity="0.45"/><rect x="0" y="107" width="1172" height="1" fill="#12002b"/><rect x="0" y="108" width="1172" height="1" fill="#1a0036" opacity="0.3"/><rect x="0" y="160" width="1172" height="1" fill="#1a0036" opacity="0.45"/><rect x="0" y="161" width="1172" height="1" fill="#12002b"/><rect x="0" y="162" width="1172" height="1" fill="#1a0036" opacity="0.3"/><rect x="0" y="214" width="1172" height="1" fill="#1a0036" opacity="0.45"/><rect x="0" y="215" width="1172" height="1" fill="#12002b"/><rect x="0" y="216" width="1172" height="1" fill="#1a0036" opacity="0.3"/><rect x="0" y="268" width="1172" height="1" fill="#1a0036" opacity="0.45"/><rect x="0" y="269" width="1172" height="1" fill="#12002b"/><rect x="0" y="270" width="1172" height="1" fill="#1a0036" opacity="0.3"/><rect x="0" y="322" width="1172" height="1" fill="#1a0036" opacity="0.45"/><rect x="0" y="323" width="1172" height="1" fill="#12002b"/><rect x="0" y="324" width="1172" height="1" fill="#1a0036" opacity="0.3"/><rect x="0" y="376" width="1172" height="1" fill="#1a0036" opacity="0.45"/><rect x="0" y="377" width="1172" height="1" fill="#12002b"/><rect x="0" y="378" width="1172" height="1" fill="#1a0036" opacity="0.3"/><rect x="0" y="430" width="1172" height="1" fill="#1a0036" opacity="0.45"/><rect x="0" y="431" width="1172" height="1" fill="#12002b"/><rect x="0" y="432" width="1172" height="1" fill="#1a0036" opacity="0.3"/><rect x="0" y="484" width="1172" height="1" fill="#1a0036" opacity="0.45"/><rect x="0" y="485" width="1172" height="1" fill="#12002b"/><rect x="0" y="486" width="1172" height="1" fill="#1a0036" opacity="0.3"/><rect x="0" y="538" width="1172" height="1" fill="#1a0036" opacity="0.45"/><rect x="0" y="539" width="1172" height="1" fill="#12002b"/><rect x="0" y="540" width="1172" height="1" fill="#1a0036" opacity="0.3"/><rect x="0" y="592" width="1172" height="1" fill="#1a0036" opacity="0.45"/><rect x="0" y="593" width="1172" height="1" fill="#12002b"/><rect x="0" y="594" width="1172" height="1" fill="#1a0036" opacity="0.3"/><rect x="0" y="646" width="1172" height="1" fill="#1a0036" opacity="0.45"/><rect x="0" y="647" width="1172" height="1" fill="#12002b"/><rect x="0" y="648" width="1172" height="1" fill="#1a0036" opacity="0.3"/><rect x="0" y="700" width="1172" height="1" fill="#1a0036" opacity="0.45"/><rect x="0" y="701" width="1172" height="1" fill="#12002b"/><rect x="0" y="702" width="1172" height="1" fill="#1a0036" opacity="0.3"/><rect x="0" y="754" width="1172" height="1" fill="#1a0036" opacity="0.45"/><rect x="0" y="755" width="1172" height="1" fill="#12002b"/><rect x="0" y="756" width="1172" height="1" fill="#1a0036" opacity="0.3"/><rect x="0" y="808" width="1172" height="1" fill="#1a0036" opacity="0.45"/><rect x="0" y="809" width="1172" height="1" fill="#12002b"/><rect x="0" y="810" width="1172" height="1" fill="#1a0036" opacity="0.3"/></svg>
<div style="left:464px;top:189px;width:122px;height:53px;background:#5b4470;border-radius:3px;overflow:hidden;box-shadow:inset 0 1px 0 #6b5580,inset 1px 0 0 rgba(125,105,150,.35),inset -1px 0 0 rgba(40,20,60,.35);"><svg style="left:0;top:0" width="122.0" height="53"><rect x="3.79" y="16.0" width="3.29" height="2.3" fill="#ae5ad2"/><rect x="0.00" y="40.0" width="3.29" height="2.3" fill="#ae5ad2"/><rect x="11.36" y="16.0" width="3.29" height="2.3" fill="#ae5ad2"/><rect x="7.57" y="40.0" width="3.29" height="2.3" fill="#ae5ad2"/><rect x="18.93" y="25.9" width="3.29" height="2.3" fill="#ae5ad2"/><rect x="15.14" y="49.8" width="3.29" height="2.3" fill="#ae5ad2"/><rect x="26.50" y="25.9" width="3.29" height="2.3" fill="#ae5ad2"/><rect x="22.72" y="49.8" width="3.29" height="2.3" fill="#ae5ad2"/><rect x="34.08" y="24.0" width="3.29" height="2.3" fill="#ae5ad2"/><rect x="30.29" y="47.9" width="3.29" height="2.3" fill="#ae5ad2"/><rect x="41.65" y="24.0" width="3.29" height="2.3" fill="#ae5ad2"/><rect x="37.86" y="47.9" width="3.29" height="2.3" fill="#ae5ad2"/><rect x="49.22" y="19.9" width="3.29" height="2.3" fill="#ae5ad2"/><rect x="45.44" y="43.9" width="3.29" height="2.3" fill="#ae5ad2"/><rect x="56.79" y="19.9" width="3.29" height="2.3" fill="#ae5ad2"/><rect x="53.01" y="43.9" width="3.29" height="2.3" fill="#ae5ad2"/><rect x="64.37" y="16.0" width="3.29" height="2.3" fill="#ae5ad2"/><rect x="60.58" y="40.0" width="3.29" height="2.3" fill="#ae5ad2"/><rect x="71.94" y="16.0" width="3.29" height="2.3" fill="#ae5ad2"/><rect x="68.15" y="40.0" width="3.29" height="2.3" fill="#ae5ad2"/><rect x="79.51" y="25.9" width="3.29" height="2.3" fill="#ae5ad2"/><rect x="75.72" y="49.8" width="3.29" height="2.3" fill="#ae5ad2"/><rect x="87.08" y="25.9" width="3.29" height="2.3" fill="#ae5ad2"/><rect x="83.30" y="49.8" width="3.29" height="2.3" fill="#ae5ad2"/><rect x="94.66" y="24.0" width="3.29" height="2.3" fill="#ae5ad2"/><rect x="90.87" y="47.9" width="3.29" height="2.3" fill="#ae5ad2"/><rect x="102.23" y="24.0" width="3.29" height="2.3" fill="#ae5ad2"/><rect x="98.44" y="47.9" width="3.29" height="2.3" fill="#ae5ad2"/><rect x="109.80" y="19.9" width="3.29" height="2.3" fill="#ae5ad2"/><rect x="106.02" y="43.9" width="3.29" height="2.3" fill="#ae5ad2"/><rect x="117.37" y="19.9" width="3.29" height="2.3" fill="#ae5ad2"/><rect x="113.59" y="43.9" width="3.29" height="2.3" fill="#ae5ad2"/></svg></div>
<svg style="left:466.4px;top:191.2px;" width="10" height="11" viewBox="0 0 10 11"><rect x="5.6000000000000005" y="0.6" width="3.6" height="9.2" fill="#f0e8ff"/><rect x="0.4" y="0.6" width="6" height="1.7" fill="#f0e8ff"/><rect x="0.4" y="4.35" width="6" height="1.7" fill="#f0e8ff"/><rect x="0.4" y="8.1" width="6" height="1.7" fill="#f0e8ff"/><rect x="1.2000000000000002" y="2.8000000000000003" width="3.4" height="1" fill="#f0e8ff" opacity="0.55"/><rect x="1.2000000000000002" y="6.55" width="3.4" height="1" fill="#f0e8ff" opacity="0.55"/></svg>
<div class="t" style="left:478.2px;top:190px;font-size:10.9px;line-height:12px;color:#e4daf2;transform:scaleX(0.9313);">Serum</div>
<div style="left:464px;top:243px;width:122px;height:53px;background:#5b4470;border-radius:3px;overflow:hidden;box-shadow:inset 0 1px 0 #6b5580,inset 1px 0 0 rgba(125,105,150,.35),inset -1px 0 0 rgba(40,20,60,.35);"><svg style="left:0;top:0" width="122.0" height="53"><rect x="0.00" y="16.2" width="3.29" height="2.3" fill="#ae5ad2"/><rect x="3.79" y="16.2" width="3.29" height="2.3" fill="#ae5ad2"/><rect x="7.57" y="16.2" width="3.29" height="2.3" fill="#ae5ad2"/><rect x="11.36" y="16.2" width="3.29" height="2.3" fill="#ae5ad2"/><rect x="15.14" y="30.1" width="3.29" height="2.3" fill="#ae5ad2"/><rect x="18.93" y="30.1" width="3.29" height="2.3" fill="#ae5ad2"/><rect x="22.72" y="30.1" width="3.29" height="2.3" fill="#ae5ad2"/><rect x="26.50" y="30.1" width="3.29" height="2.3" fill="#ae5ad2"/><rect x="30.29" y="27.5" width="3.29" height="2.3" fill="#ae5ad2"/><rect x="34.08" y="27.5" width="3.29" height="2.3" fill="#ae5ad2"/><rect x="37.86" y="27.5" width="3.29" height="2.3" fill="#ae5ad2"/><rect x="41.65" y="27.5" width="3.29" height="2.3" fill="#ae5ad2"/><rect x="45.44" y="21.8" width="3.29" height="2.3" fill="#ae5ad2"/><rect x="49.22" y="21.8" width="3.29" height="2.3" fill="#ae5ad2"/><rect x="53.01" y="21.8" width="3.29" height="2.3" fill="#ae5ad2"/><rect x="56.79" y="21.8" width="3.29" height="2.3" fill="#ae5ad2"/><rect x="60.58" y="49.5" width="3.29" height="2.3" fill="#ae5ad2"/><rect x="64.37" y="49.5" width="3.29" height="2.3" fill="#ae5ad2"/><rect x="68.15" y="49.5" width="3.29" height="2.3" fill="#ae5ad2"/><rect x="71.94" y="49.5" width="3.29" height="2.3" fill="#ae5ad2"/><rect x="75.72" y="30.1" width="3.29" height="2.3" fill="#ae5ad2"/><rect x="79.51" y="30.1" width="3.29" height="2.3" fill="#ae5ad2"/><rect x="83.30" y="30.1" width="3.29" height="2.3" fill="#ae5ad2"/><rect x="87.08" y="30.1" width="3.29" height="2.3" fill="#ae5ad2"/><rect x="90.87" y="27.5" width="3.29" height="2.3" fill="#ae5ad2"/><rect x="94.66" y="27.5" width="3.29" height="2.3" fill="#ae5ad2"/><rect x="98.44" y="27.5" width="3.29" height="2.3" fill="#ae5ad2"/><rect x="102.23" y="27.5" width="3.29" height="2.3" fill="#ae5ad2"/><rect x="106.02" y="21.8" width="3.29" height="2.3" fill="#ae5ad2"/><rect x="109.80" y="21.8" width="3.29" height="2.3" fill="#ae5ad2"/><rect x="113.59" y="21.8" width="3.29" height="2.3" fill="#ae5ad2"/><rect x="117.37" y="21.8" width="3.29" height="2.3" fill="#ae5ad2"/></svg></div>
<svg style="left:466.4px;top:245.2px;" width="10" height="11" viewBox="0 0 10 11"><rect x="5.6000000000000005" y="0.6" width="3.6" height="9.2" fill="#f0e8ff"/><rect x="0.4" y="0.6" width="6" height="1.7" fill="#f0e8ff"/><rect x="0.4" y="4.35" width="6" height="1.7" fill="#f0e8ff"/><rect x="0.4" y="8.1" width="6" height="1.7" fill="#f0e8ff"/><rect x="1.2000000000000002" y="2.8000000000000003" width="3.4" height="1" fill="#f0e8ff" opacity="0.55"/><rect x="1.2000000000000002" y="6.55" width="3.4" height="1" fill="#f0e8ff" opacity="0.55"/></svg>
<div class="t" style="left:478.2px;top:244px;font-size:10.9px;line-height:12px;color:#e4daf2;transform:scaleX(0.9522);">Serum #2</div>
<div style="left:464px;top:297px;width:32px;height:53px;background:linear-gradient(#584170,#5e4873);border-radius:3px;overflow:hidden;box-shadow:inset 0 1px 0 #6b5580,inset 1px 0 0 rgba(125,105,150,.35),inset -1px 0 0 rgba(40,20,60,.35);"><svg style="left:0;top:0" width="32.0" height="53"></svg></div>
<svg style="left:465.6px;top:299px;" width="12" height="9" viewBox="0 0 12 9"><path d="M2.4,2 L5.8,5.6 L9.2,2" fill="none" stroke="#f4eeff" stroke-width="1.5"/></svg>
<div style="left:464px;top:351px;width:122px;height:53px;background:#5b4470;border-radius:3px;overflow:hidden;box-shadow:inset 0 1px 0 #6b5580,inset 1px 0 0 rgba(125,105,150,.35),inset -1px 0 0 rgba(40,20,60,.35);"><svg style="left:0;top:0" width="122.0" height="53"><rect x="0.00" y="16.1" width="7.27" height="1.15" fill="#a656c6"/><rect x="7.57" y="16.1" width="7.27" height="1.15" fill="#a656c6"/><rect x="0.00" y="20.9" width="7.27" height="1.15" fill="#a656c6"/><rect x="7.57" y="20.9" width="7.27" height="1.15" fill="#a656c6"/><rect x="0.00" y="23.0" width="7.27" height="1.15" fill="#a656c6"/><rect x="7.57" y="23.0" width="7.27" height="1.15" fill="#a656c6"/><rect x="0.00" y="25.1" width="7.27" height="1.15" fill="#a656c6"/><rect x="7.57" y="25.1" width="7.27" height="1.15" fill="#a656c6"/><rect x="0.00" y="27.8" width="7.27" height="1.15" fill="#a656c6"/><rect x="7.57" y="27.8" width="7.27" height="1.15" fill="#a656c6"/><rect x="0.00" y="51.0" width="7.27" height="1.15" fill="#a656c6"/><rect x="7.57" y="51.0" width="7.27" height="1.15" fill="#a656c6"/><rect x="15.14" y="20.9" width="7.27" height="1.15" fill="#a656c6"/><rect x="22.72" y="20.9" width="7.27" height="1.15" fill="#a656c6"/><rect x="15.14" y="23.0" width="7.27" height="1.15" fill="#a656c6"/><rect x="22.72" y="23.0" width="7.27" height="1.15" fill="#a656c6"/><rect x="15.14" y="25.7" width="7.27" height="1.15" fill="#a656c6"/><rect x="22.72" y="25.7" width="7.27" height="1.15" fill="#a656c6"/><rect x="15.14" y="27.8" width="7.27" height="1.15" fill="#a656c6"/><rect x="22.72" y="27.8" width="7.27" height="1.15" fill="#a656c6"/><rect x="15.14" y="30.2" width="7.27" height="1.15" fill="#a656c6"/><rect x="22.72" y="30.2" width="7.27" height="1.15" fill="#a656c6"/><rect x="15.14" y="32.6" width="7.27" height="1.15" fill="#a656c6"/><rect x="22.72" y="32.6" width="7.27" height="1.15" fill="#a656c6"/><rect x="15.14" y="44.1" width="7.27" height="1.15" fill="#a656c6"/><rect x="22.72" y="44.1" width="7.27" height="1.15" fill="#a656c6"/><rect x="30.29" y="20.9" width="7.27" height="1.15" fill="#a656c6"/><rect x="37.86" y="20.9" width="7.27" height="1.15" fill="#a656c6"/><rect x="30.29" y="23.0" width="7.27" height="1.15" fill="#a656c6"/><rect x="37.86" y="23.0" width="7.27" height="1.15" fill="#a656c6"/><rect x="30.29" y="25.1" width="7.27" height="1.15" fill="#a656c6"/><rect x="37.86" y="25.1" width="7.27" height="1.15" fill="#a656c6"/><rect x="30.29" y="27.8" width="7.27" height="1.15" fill="#a656c6"/><rect x="37.86" y="27.8" width="7.27" height="1.15" fill="#a656c6"/><rect x="30.29" y="29.9" width="7.27" height="1.15" fill="#a656c6"/><rect x="37.86" y="29.9" width="7.27" height="1.15" fill="#a656c6"/><rect x="30.29" y="31.9" width="7.27" height="1.15" fill="#a656c6"/><rect x="37.86" y="31.9" width="7.27" height="1.15" fill="#a656c6"/><rect x="30.29" y="43.1" width="7.27" height="1.15" fill="#a656c6"/><rect x="37.86" y="43.1" width="7.27" height="1.15" fill="#a656c6"/><rect x="45.44" y="20.9" width="7.27" height="1.15" fill="#a656c6"/><rect x="53.01" y="20.9" width="7.27" height="1.15" fill="#a656c6"/><rect x="45.44" y="23.0" width="7.27" height="1.15" fill="#a656c6"/><rect x="53.01" y="23.0" width="7.27" height="1.15" fill="#a656c6"/><rect x="45.44" y="25.7" width="7.27" height="1.15" fill="#a656c6"/><rect x="53.01" y="25.7" width="7.27" height="1.15" fill="#a656c6"/><rect x="45.44" y="27.8" width="7.27" height="1.15" fill="#a656c6"/><rect x="53.01" y="27.8" width="7.27" height="1.15" fill="#a656c6"/><rect x="45.44" y="30.2" width="7.27" height="1.15" fill="#a656c6"/><rect x="53.01" y="30.2" width="7.27" height="1.15" fill="#a656c6"/><rect x="45.44" y="32.6" width="7.27" height="1.15" fill="#a656c6"/><rect x="53.01" y="32.6" width="7.27" height="1.15" fill="#a656c6"/><rect x="45.44" y="41.4" width="7.27" height="1.15" fill="#a656c6"/><rect x="53.01" y="41.4" width="7.27" height="1.15" fill="#a656c6"/><rect x="60.58" y="16.1" width="7.27" height="1.15" fill="#a656c6"/><rect x="68.15" y="16.1" width="7.27" height="1.15" fill="#a656c6"/><rect x="60.58" y="20.9" width="7.27" height="1.15" fill="#a656c6"/><rect x="68.15" y="20.9" width="7.27" height="1.15" fill="#a656c6"/><rect x="60.58" y="23.0" width="7.27" height="1.15" fill="#a656c6"/><rect x="68.15" y="23.0" width="7.27" height="1.15" fill="#a656c6"/><rect x="60.58" y="25.1" width="7.27" height="1.15" fill="#a656c6"/><rect x="68.15" y="25.1" width="7.27" height="1.15" fill="#a656c6"/><rect x="60.58" y="27.8" width="7.27" height="1.15" fill="#a656c6"/><rect x="68.15" y="27.8" width="7.27" height="1.15" fill="#a656c6"/><rect x="60.58" y="51.0" width="7.27" height="1.15" fill="#a656c6"/><rect x="68.15" y="51.0" width="7.27" height="1.15" fill="#a656c6"/><rect x="75.72" y="20.9" width="7.27" height="1.15" fill="#a656c6"/><rect x="83.30" y="20.9" width="7.27" height="1.15" fill="#a656c6"/><rect x="75.72" y="23.0" width="7.27" height="1.15" fill="#a656c6"/><rect x="83.30" y="23.0" width="7.27" height="1.15" fill="#a656c6"/><rect x="75.72" y="25.7" width="7.27" height="1.15" fill="#a656c6"/><rect x="83.30" y="25.7" width="7.27" height="1.15" fill="#a656c6"/><rect x="75.72" y="27.8" width="7.27" height="1.15" fill="#a656c6"/><rect x="83.30" y="27.8" width="7.27" height="1.15" fill="#a656c6"/><rect x="75.72" y="30.2" width="7.27" height="1.15" fill="#a656c6"/><rect x="83.30" y="30.2" width="7.27" height="1.15" fill="#a656c6"/><rect x="75.72" y="32.6" width="7.27" height="1.15" fill="#a656c6"/><rect x="83.30" y="32.6" width="7.27" height="1.15" fill="#a656c6"/><rect x="75.72" y="44.1" width="7.27" height="1.15" fill="#a656c6"/><rect x="83.30" y="44.1" width="7.27" height="1.15" fill="#a656c6"/><rect x="90.87" y="20.9" width="7.27" height="1.15" fill="#a656c6"/><rect x="98.44" y="20.9" width="7.27" height="1.15" fill="#a656c6"/><rect x="90.87" y="25.1" width="7.27" height="1.15" fill="#a656c6"/><rect x="98.44" y="25.1" width="7.27" height="1.15" fill="#a656c6"/><rect x="90.87" y="27.8" width="7.27" height="1.15" fill="#a656c6"/><rect x="98.44" y="27.8" width="7.27" height="1.15" fill="#a656c6"/><rect x="90.87" y="29.9" width="7.27" height="1.15" fill="#a656c6"/><rect x="98.44" y="29.9" width="7.27" height="1.15" fill="#a656c6"/><rect x="90.87" y="31.9" width="7.27" height="1.15" fill="#a656c6"/><rect x="98.44" y="31.9" width="7.27" height="1.15" fill="#a656c6"/><rect x="90.87" y="43.1" width="7.27" height="1.15" fill="#a656c6"/><rect x="98.44" y="43.1" width="7.27" height="1.15" fill="#a656c6"/><rect x="106.02" y="18.2" width="7.27" height="1.15" fill="#a656c6"/><rect x="113.59" y="18.2" width="7.27" height="1.15" fill="#a656c6"/><rect x="106.02" y="20.9" width="7.27" height="1.15" fill="#a656c6"/><rect x="113.59" y="20.9" width="7.27" height="1.15" fill="#a656c6"/><rect x="106.02" y="23.0" width="7.27" height="1.15" fill="#a656c6"/><rect x="113.59" y="23.0" width="7.27" height="1.15" fill="#a656c6"/><rect x="106.02" y="25.7" width="7.27" height="1.15" fill="#a656c6"/><rect x="113.59" y="25.7" width="7.27" height="1.15" fill="#a656c6"/><rect x="106.02" y="27.8" width="7.27" height="1.15" fill="#a656c6"/><rect x="113.59" y="27.8" width="7.27" height="1.15" fill="#a656c6"/><rect x="106.02" y="30.2" width="7.27" height="1.15" fill="#a656c6"/><rect x="113.59" y="30.2" width="7.27" height="1.15" fill="#a656c6"/><rect x="106.02" y="32.6" width="7.27" height="1.15" fill="#a656c6"/><rect x="113.59" y="32.6" width="7.27" height="1.15" fill="#a656c6"/><rect x="106.02" y="41.4" width="7.27" height="1.15" fill="#a656c6"/><rect x="113.59" y="41.4" width="7.27" height="1.15" fill="#a656c6"/></svg></div>
<svg style="left:466.4px;top:353.2px;" width="10" height="11" viewBox="0 0 10 11"><rect x="5.6000000000000005" y="0.6" width="3.6" height="9.2" fill="#f0e8ff"/><rect x="0.4" y="0.6" width="6" height="1.7" fill="#f0e8ff"/><rect x="0.4" y="4.35" width="6" height="1.7" fill="#f0e8ff"/><rect x="0.4" y="8.1" width="6" height="1.7" fill="#f0e8ff"/><rect x="1.2000000000000002" y="2.8000000000000003" width="3.4" height="1" fill="#f0e8ff" opacity="0.55"/><rect x="1.2000000000000002" y="6.55" width="3.4" height="1" fill="#f0e8ff" opacity="0.55"/></svg>
<div class="t" style="left:478.2px;top:352px;font-size:10.9px;line-height:12px;color:#e4daf2;transform:scaleX(0.8076);">TFG_CHORD..per Saws 1</div>
<div style="left:585px;top:189px;width:122px;height:53px;background:#5b4470;border-radius:3px;overflow:hidden;box-shadow:inset 0 1px 0 #6b5580,inset 1px 0 0 rgba(125,105,150,.35),inset -1px 0 0 rgba(40,20,60,.35);"><svg style="left:0;top:0" width="122.0" height="53"><rect x="3.79" y="16.0" width="3.29" height="2.3" fill="#ae5ad2"/><rect x="0.00" y="40.0" width="3.29" height="2.3" fill="#ae5ad2"/><rect x="11.36" y="16.0" width="3.29" height="2.3" fill="#ae5ad2"/><rect x="7.57" y="40.0" width="3.29" height="2.3" fill="#ae5ad2"/><rect x="18.93" y="25.9" width="3.29" height="2.3" fill="#ae5ad2"/><rect x="15.14" y="49.8" width="3.29" height="2.3" fill="#ae5ad2"/><rect x="26.50" y="25.9" width="3.29" height="2.3" fill="#ae5ad2"/><rect x="22.72" y="49.8" width="3.29" height="2.3" fill="#ae5ad2"/><rect x="34.08" y="24.0" width="3.29" height="2.3" fill="#ae5ad2"/><rect x="30.29" y="47.9" width="3.29" height="2.3" fill="#ae5ad2"/><rect x="41.65" y="24.0" width="3.29" height="2.3" fill="#ae5ad2"/><rect x="37.86" y="47.9" width="3.29" height="2.3" fill="#ae5ad2"/><rect x="49.22" y="19.9" width="3.29" height="2.3" fill="#ae5ad2"/><rect x="45.44" y="43.9" width="3.29" height="2.3" fill="#ae5ad2"/><rect x="56.79" y="19.9" width="3.29" height="2.3" fill="#ae5ad2"/><rect x="53.01" y="43.9" width="3.29" height="2.3" fill="#ae5ad2"/><rect x="64.37" y="16.0" width="3.29" height="2.3" fill="#ae5ad2"/><rect x="60.58" y="40.0" width="3.29" height="2.3" fill="#ae5ad2"/><rect x="71.94" y="16.0" width="3.29" height="2.3" fill="#ae5ad2"/><rect x="68.15" y="40.0" width="3.29" height="2.3" fill="#ae5ad2"/><rect x="79.51" y="25.9" width="3.29" height="2.3" fill="#ae5ad2"/><rect x="75.72" y="49.8" width="3.29" height="2.3" fill="#ae5ad2"/><rect x="87.08" y="25.9" width="3.29" height="2.3" fill="#ae5ad2"/><rect x="83.30" y="49.8" width="3.29" height="2.3" fill="#ae5ad2"/><rect x="94.66" y="24.0" width="3.29" height="2.3" fill="#ae5ad2"/><rect x="90.87" y="47.9" width="3.29" height="2.3" fill="#ae5ad2"/><rect x="102.23" y="24.0" width="3.29" height="2.3" fill="#ae5ad2"/><rect x="98.44" y="47.9" width="3.29" height="2.3" fill="#ae5ad2"/><rect x="109.80" y="19.9" width="3.29" height="2.3" fill="#ae5ad2"/><rect x="106.02" y="43.9" width="3.29" height="2.3" fill="#ae5ad2"/><rect x="117.37" y="19.9" width="3.29" height="2.3" fill="#ae5ad2"/><rect x="113.59" y="43.9" width="3.29" height="2.3" fill="#ae5ad2"/></svg></div>
<svg style="left:587.4px;top:191.2px;" width="10" height="11" viewBox="0 0 10 11"><rect x="5.6000000000000005" y="0.6" width="3.6" height="9.2" fill="#f0e8ff"/><rect x="0.4" y="0.6" width="6" height="1.7" fill="#f0e8ff"/><rect x="0.4" y="4.35" width="6" height="1.7" fill="#f0e8ff"/><rect x="0.4" y="8.1" width="6" height="1.7" fill="#f0e8ff"/><rect x="1.2000000000000002" y="2.8000000000000003" width="3.4" height="1" fill="#f0e8ff" opacity="0.55"/><rect x="1.2000000000000002" y="6.55" width="3.4" height="1" fill="#f0e8ff" opacity="0.55"/></svg>
<div class="t" style="left:599.2px;top:190px;font-size:10.9px;line-height:12px;color:#e4daf2;transform:scaleX(0.9313);">Serum</div>
<div style="left:585px;top:243px;width:122px;height:53px;background:#5b4470;border-radius:3px;overflow:hidden;box-shadow:inset 0 1px 0 #6b5580,inset 1px 0 0 rgba(125,105,150,.35),inset -1px 0 0 rgba(40,20,60,.35);"><svg style="left:0;top:0" width="122.0" height="53"><rect x="0.00" y="16.2" width="3.29" height="2.3" fill="#ae5ad2"/><rect x="3.79" y="16.2" width="3.29" height="2.3" fill="#ae5ad2"/><rect x="7.57" y="16.2" width="3.29" height="2.3" fill="#ae5ad2"/><rect x="11.36" y="16.2" width="3.29" height="2.3" fill="#ae5ad2"/><rect x="15.14" y="30.1" width="3.29" height="2.3" fill="#ae5ad2"/><rect x="18.93" y="30.1" width="3.29" height="2.3" fill="#ae5ad2"/><rect x="22.72" y="30.1" width="3.29" height="2.3" fill="#ae5ad2"/><rect x="26.50" y="30.1" width="3.29" height="2.3" fill="#ae5ad2"/><rect x="30.29" y="27.5" width="3.29" height="2.3" fill="#ae5ad2"/><rect x="34.08" y="27.5" width="3.29" height="2.3" fill="#ae5ad2"/><rect x="37.86" y="27.5" width="3.29" height="2.3" fill="#ae5ad2"/><rect x="41.65" y="27.5" width="3.29" height="2.3" fill="#ae5ad2"/><rect x="45.44" y="21.8" width="3.29" height="2.3" fill="#ae5ad2"/><rect x="49.22" y="21.8" width="3.29" height="2.3" fill="#ae5ad2"/><rect x="53.01" y="21.8" width="3.29" height="2.3" fill="#ae5ad2"/><rect x="56.79" y="21.8" width="3.29" height="2.3" fill="#ae5ad2"/><rect x="60.58" y="49.5" width="3.29" height="2.3" fill="#ae5ad2"/><rect x="64.37" y="49.5" width="3.29" height="2.3" fill="#ae5ad2"/><rect x="68.15" y="49.5" width="3.29" height="2.3" fill="#ae5ad2"/><rect x="71.94" y="49.5" width="3.29" height="2.3" fill="#ae5ad2"/><rect x="75.72" y="30.1" width="3.29" height="2.3" fill="#ae5ad2"/><rect x="79.51" y="30.1" width="3.29" height="2.3" fill="#ae5ad2"/><rect x="83.30" y="30.1" width="3.29" height="2.3" fill="#ae5ad2"/><rect x="87.08" y="30.1" width="3.29" height="2.3" fill="#ae5ad2"/><rect x="90.87" y="27.5" width="3.29" height="2.3" fill="#ae5ad2"/><rect x="94.66" y="27.5" width="3.29" height="2.3" fill="#ae5ad2"/><rect x="98.44" y="27.5" width="3.29" height="2.3" fill="#ae5ad2"/><rect x="102.23" y="27.5" width="3.29" height="2.3" fill="#ae5ad2"/><rect x="106.02" y="21.8" width="3.29" height="2.3" fill="#ae5ad2"/><rect x="109.80" y="21.8" width="3.29" height="2.3" fill="#ae5ad2"/><rect x="113.59" y="21.8" width="3.29" height="2.3" fill="#ae5ad2"/><rect x="117.37" y="21.8" width="3.29" height="2.3" fill="#ae5ad2"/></svg></div>
<svg style="left:587.4px;top:245.2px;" width="10" height="11" viewBox="0 0 10 11"><rect x="5.6000000000000005" y="0.6" width="3.6" height="9.2" fill="#f0e8ff"/><rect x="0.4" y="0.6" width="6" height="1.7" fill="#f0e8ff"/><rect x="0.4" y="4.35" width="6" height="1.7" fill="#f0e8ff"/><rect x="0.4" y="8.1" width="6" height="1.7" fill="#f0e8ff"/><rect x="1.2000000000000002" y="2.8000000000000003" width="3.4" height="1" fill="#f0e8ff" opacity="0.55"/><rect x="1.2000000000000002" y="6.55" width="3.4" height="1" fill="#f0e8ff" opacity="0.55"/></svg>
<div class="t" style="left:599.2px;top:244px;font-size:10.9px;line-height:12px;color:#e4daf2;transform:scaleX(0.9522);">Serum #2</div>
<div style="left:585px;top:297px;width:33px;height:53px;background:linear-gradient(#584170,#5e4873);border-radius:3px;overflow:hidden;box-shadow:inset 0 1px 0 #6b5580,inset 1px 0 0 rgba(125,105,150,.35),inset -1px 0 0 rgba(40,20,60,.35);"><svg style="left:0;top:0" width="33.0" height="53"></svg></div>
<svg style="left:586.6px;top:299px;" width="12" height="9" viewBox="0 0 12 9"><path d="M2.4,2 L5.8,5.6 L9.2,2" fill="none" stroke="#f4eeff" stroke-width="1.5"/></svg>
<div style="left:585px;top:351px;width:122px;height:53px;background:#5b4470;border-radius:3px;overflow:hidden;box-shadow:inset 0 1px 0 #6b5580,inset 1px 0 0 rgba(125,105,150,.35),inset -1px 0 0 rgba(40,20,60,.35);"><svg style="left:0;top:0" width="122.0" height="53"><rect x="0.00" y="16.1" width="7.27" height="1.15" fill="#a656c6"/><rect x="7.57" y="16.1" width="7.27" height="1.15" fill="#a656c6"/><rect x="0.00" y="20.9" width="7.27" height="1.15" fill="#a656c6"/><rect x="7.57" y="20.9" width="7.27" height="1.15" fill="#a656c6"/><rect x="0.00" y="23.0" width="7.27" height="1.15" fill="#a656c6"/><rect x="7.57" y="23.0" width="7.27" height="1.15" fill="#a656c6"/><rect x="0.00" y="25.1" width="7.27" height="1.15" fill="#a656c6"/><rect x="7.57" y="25.1" width="7.27" height="1.15" fill="#a656c6"/><rect x="0.00" y="27.8" width="7.27" height="1.15" fill="#a656c6"/><rect x="7.57" y="27.8" width="7.27" height="1.15" fill="#a656c6"/><rect x="0.00" y="51.0" width="7.27" height="1.15" fill="#a656c6"/><rect x="7.57" y="51.0" width="7.27" height="1.15" fill="#a656c6"/><rect x="15.14" y="20.9" width="7.27" height="1.15" fill="#a656c6"/><rect x="22.72" y="20.9" width="7.27" height="1.15" fill="#a656c6"/><rect x="15.14" y="23.0" width="7.27" height="1.15" fill="#a656c6"/><rect x="22.72" y="23.0" width="7.27" height="1.15" fill="#a656c6"/><rect x="15.14" y="25.7" width="7.27" height="1.15" fill="#a656c6"/><rect x="22.72" y="25.7" width="7.27" height="1.15" fill="#a656c6"/><rect x="15.14" y="27.8" width="7.27" height="1.15" fill="#a656c6"/><rect x="22.72" y="27.8" width="7.27" height="1.15" fill="#a656c6"/><rect x="15.14" y="30.2" width="7.27" height="1.15" fill="#a656c6"/><rect x="22.72" y="30.2" width="7.27" height="1.15" fill="#a656c6"/><rect x="15.14" y="32.6" width="7.27" height="1.15" fill="#a656c6"/><rect x="22.72" y="32.6" width="7.27" height="1.15" fill="#a656c6"/><rect x="15.14" y="44.1" width="7.27" height="1.15" fill="#a656c6"/><rect x="22.72" y="44.1" width="7.27" height="1.15" fill="#a656c6"/><rect x="30.29" y="20.9" width="7.27" height="1.15" fill="#a656c6"/><rect x="37.86" y="20.9" width="7.27" height="1.15" fill="#a656c6"/><rect x="30.29" y="23.0" width="7.27" height="1.15" fill="#a656c6"/><rect x="37.86" y="23.0" width="7.27" height="1.15" fill="#a656c6"/><rect x="30.29" y="25.1" width="7.27" height="1.15" fill="#a656c6"/><rect x="37.86" y="25.1" width="7.27" height="1.15" fill="#a656c6"/><rect x="30.29" y="27.8" width="7.27" height="1.15" fill="#a656c6"/><rect x="37.86" y="27.8" width="7.27" height="1.15" fill="#a656c6"/><rect x="30.29" y="29.9" width="7.27" height="1.15" fill="#a656c6"/><rect x="37.86" y="29.9" width="7.27" height="1.15" fill="#a656c6"/><rect x="30.29" y="31.9" width="7.27" height="1.15" fill="#a656c6"/><rect x="37.86" y="31.9" width="7.27" height="1.15" fill="#a656c6"/><rect x="30.29" y="43.1" width="7.27" height="1.15" fill="#a656c6"/><rect x="37.86" y="43.1" width="7.27" height="1.15" fill="#a656c6"/><rect x="45.44" y="20.9" width="7.27" height="1.15" fill="#a656c6"/><rect x="53.01" y="20.9" width="7.27" height="1.15" fill="#a656c6"/><rect x="45.44" y="23.0" width="7.27" height="1.15" fill="#a656c6"/><rect x="53.01" y="23.0" width="7.27" height="1.15" fill="#a656c6"/><rect x="45.44" y="25.7" width="7.27" height="1.15" fill="#a656c6"/><rect x="53.01" y="25.7" width="7.27" height="1.15" fill="#a656c6"/><rect x="45.44" y="27.8" width="7.27" height="1.15" fill="#a656c6"/><rect x="53.01" y="27.8" width="7.27" height="1.15" fill="#a656c6"/><rect x="45.44" y="30.2" width="7.27" height="1.15" fill="#a656c6"/><rect x="53.01" y="30.2" width="7.27" height="1.15" fill="#a656c6"/><rect x="45.44" y="32.6" width="7.27" height="1.15" fill="#a656c6"/><rect x="53.01" y="32.6" width="7.27" height="1.15" fill="#a656c6"/><rect x="45.44" y="41.4" width="7.27" height="1.15" fill="#a656c6"/><rect x="53.01" y="41.4" width="7.27" height="1.15" fill="#a656c6"/><rect x="60.58" y="16.1" width="7.27" height="1.15" fill="#a656c6"/><rect x="68.15" y="16.1" width="7.27" height="1.15" fill="#a656c6"/><rect x="60.58" y="20.9" width="7.27" height="1.15" fill="#a656c6"/><rect x="68.15" y="20.9" width="7.27" height="1.15" fill="#a656c6"/><rect x="60.58" y="23.0" width="7.27" height="1.15" fill="#a656c6"/><rect x="68.15" y="23.0" width="7.27" height="1.15" fill="#a656c6"/><rect x="60.58" y="25.1" width="7.27" height="1.15" fill="#a656c6"/><rect x="68.15" y="25.1" width="7.27" height="1.15" fill="#a656c6"/><rect x="60.58" y="27.8" width="7.27" height="1.15" fill="#a656c6"/><rect x="68.15" y="27.8" width="7.27" height="1.15" fill="#a656c6"/><rect x="60.58" y="51.0" width="7.27" height="1.15" fill="#a656c6"/><rect x="68.15" y="51.0" width="7.27" height="1.15" fill="#a656c6"/><rect x="75.72" y="20.9" width="7.27" height="1.15" fill="#a656c6"/><rect x="83.30" y="20.9" width="7.27" height="1.15" fill="#a656c6"/><rect x="75.72" y="23.0" width="7.27" height="1.15" fill="#a656c6"/><rect x="83.30" y="23.0" width="7.27" height="1.15" fill="#a656c6"/><rect x="75.72" y="25.7" width="7.27" height="1.15" fill="#a656c6"/><rect x="83.30" y="25.7" width="7.27" height="1.15" fill="#a656c6"/><rect x="75.72" y="27.8" width="7.27" height="1.15" fill="#a656c6"/><rect x="83.30" y="27.8" width="7.27" height="1.15" fill="#a656c6"/><rect x="75.72" y="30.2" width="7.27" height="1.15" fill="#a656c6"/><rect x="83.30" y="30.2" width="7.27" height="1.15" fill="#a656c6"/><rect x="75.72" y="32.6" width="7.27" height="1.15" fill="#a656c6"/><rect x="83.30" y="32.6" width="7.27" height="1.15" fill="#a656c6"/><rect x="75.72" y="44.1" width="7.27" height="1.15" fill="#a656c6"/><rect x="83.30" y="44.1" width="7.27" height="1.15" fill="#a656c6"/><rect x="90.87" y="20.9" width="7.27" height="1.15" fill="#a656c6"/><rect x="98.44" y="20.9" width="7.27" height="1.15" fill="#a656c6"/><rect x="90.87" y="25.1" width="7.27" height="1.15" fill="#a656c6"/><rect x="98.44" y="25.1" width="7.27" height="1.15" fill="#a656c6"/><rect x="90.87" y="27.8" width="7.27" height="1.15" fill="#a656c6"/><rect x="98.44" y="27.8" width="7.27" height="1.15" fill="#a656c6"/><rect x="90.87" y="29.9" width="7.27" height="1.15" fill="#a656c6"/><rect x="98.44" y="29.9" width="7.27" height="1.15" fill="#a656c6"/><rect x="90.87" y="31.9" width="7.27" height="1.15" fill="#a656c6"/><rect x="98.44" y="31.9" width="7.27" height="1.15" fill="#a656c6"/><rect x="90.87" y="43.1" width="7.27" height="1.15" fill="#a656c6"/><rect x="98.44" y="43.1" width="7.27" height="1.15" fill="#a656c6"/><rect x="106.02" y="18.2" width="7.27" height="1.15" fill="#a656c6"/><rect x="113.59" y="18.2" width="7.27" height="1.15" fill="#a656c6"/><rect x="106.02" y="20.9" width="7.27" height="1.15" fill="#a656c6"/><rect x="113.59" y="20.9" width="7.27" height="1.15" fill="#a656c6"/><rect x="106.02" y="23.0" width="7.27" height="1.15" fill="#a656c6"/><rect x="113.59" y="23.0" width="7.27" height="1.15" fill="#a656c6"/><rect x="106.02" y="25.7" width="7.27" height="1.15" fill="#a656c6"/><rect x="113.59" y="25.7" width="7.27" height="1.15" fill="#a656c6"/><rect x="106.02" y="27.8" width="7.27" height="1.15" fill="#a656c6"/><rect x="113.59" y="27.8" width="7.27" height="1.15" fill="#a656c6"/><rect x="106.02" y="30.2" width="7.27" height="1.15" fill="#a656c6"/><rect x="113.59" y="30.2" width="7.27" height="1.15" fill="#a656c6"/><rect x="106.02" y="32.6" width="7.27" height="1.15" fill="#a656c6"/><rect x="113.59" y="32.6" width="7.27" height="1.15" fill="#a656c6"/><rect x="106.02" y="41.4" width="7.27" height="1.15" fill="#a656c6"/><rect x="113.59" y="41.4" width="7.27" height="1.15" fill="#a656c6"/></svg></div>
<svg style="left:587.4px;top:353.2px;" width="10" height="11" viewBox="0 0 10 11"><rect x="5.6000000000000005" y="0.6" width="3.6" height="9.2" fill="#f0e8ff"/><rect x="0.4" y="0.6" width="6" height="1.7" fill="#f0e8ff"/><rect x="0.4" y="4.35" width="6" height="1.7" fill="#f0e8ff"/><rect x="0.4" y="8.1" width="6" height="1.7" fill="#f0e8ff"/><rect x="1.2000000000000002" y="2.8000000000000003" width="3.4" height="1" fill="#f0e8ff" opacity="0.55"/><rect x="1.2000000000000002" y="6.55" width="3.4" height="1" fill="#f0e8ff" opacity="0.55"/></svg>
<div class="t" style="left:599.2px;top:352px;font-size:10.9px;line-height:12px;color:#e4daf2;transform:scaleX(0.8076);">TFG_CHORD..per Saws 1</div>
<div style="left:706px;top:189px;width:123px;height:53px;background:#5b4470;border-radius:3px;overflow:hidden;box-shadow:inset 0 1px 0 #6b5580,inset 1px 0 0 rgba(125,105,150,.35),inset -1px 0 0 rgba(40,20,60,.35);"><svg style="left:0;top:0" width="123.0" height="53"><rect x="3.79" y="16.0" width="3.29" height="2.3" fill="#ae5ad2"/><rect x="0.00" y="40.0" width="3.29" height="2.3" fill="#ae5ad2"/><rect x="11.36" y="16.0" width="3.29" height="2.3" fill="#ae5ad2"/><rect x="7.57" y="40.0" width="3.29" height="2.3" fill="#ae5ad2"/><rect x="18.93" y="25.9" width="3.29" height="2.3" fill="#ae5ad2"/><rect x="15.14" y="49.8" width="3.29" height="2.3" fill="#ae5ad2"/><rect x="26.50" y="25.9" width="3.29" height="2.3" fill="#ae5ad2"/><rect x="22.72" y="49.8" width="3.29" height="2.3" fill="#ae5ad2"/><rect x="34.08" y="24.0" width="3.29" height="2.3" fill="#ae5ad2"/><rect x="30.29" y="47.9" width="3.29" height="2.3" fill="#ae5ad2"/><rect x="41.65" y="24.0" width="3.29" height="2.3" fill="#ae5ad2"/><rect x="37.86" y="47.9" width="3.29" height="2.3" fill="#ae5ad2"/><rect x="49.22" y="19.9" width="3.29" height="2.3" fill="#ae5ad2"/><rect x="45.44" y="43.9" width="3.29" height="2.3" fill="#ae5ad2"/><rect x="56.79" y="19.9" width="3.29" height="2.3" fill="#ae5ad2"/><rect x="53.01" y="43.9" width="3.29" height="2.3" fill="#ae5ad2"/><rect x="64.37" y="16.0" width="3.29" height="2.3" fill="#ae5ad2"/><rect x="60.58" y="40.0" width="3.29" height="2.3" fill="#ae5ad2"/><rect x="71.94" y="16.0" width="3.29" height="2.3" fill="#ae5ad2"/><rect x="68.15" y="40.0" width="3.29" height="2.3" fill="#ae5ad2"/><rect x="79.51" y="25.9" width="3.29" height="2.3" fill="#ae5ad2"/><rect x="75.72" y="49.8" width="3.29" height="2.3" fill="#ae5ad2"/><rect x="87.08" y="25.9" width="3.29" height="2.3" fill="#ae5ad2"/><rect x="83.30" y="49.8" width="3.29" height="2.3" fill="#ae5ad2"/><rect x="94.66" y="24.0" width="3.29" height="2.3" fill="#ae5ad2"/><rect x="90.87" y="47.9" width="3.29" height="2.3" fill="#ae5ad2"/><rect x="102.23" y="24.0" width="3.29" height="2.3" fill="#ae5ad2"/><rect x="98.44" y="47.9" width="3.29" height="2.3" fill="#ae5ad2"/><rect x="109.80" y="19.9" width="3.29" height="2.3" fill="#ae5ad2"/><rect x="106.02" y="43.9" width="3.29" height="2.3" fill="#ae5ad2"/><rect x="117.37" y="19.9" width="3.29" height="2.3" fill="#ae5ad2"/><rect x="113.59" y="43.9" width="3.29" height="2.3" fill="#ae5ad2"/></svg></div>
<svg style="left:708.4px;top:191.2px;" width="10" height="11" viewBox="0 0 10 11"><rect x="5.6000000000000005" y="0.6" width="3.6" height="9.2" fill="#f0e8ff"/><rect x="0.4" y="0.6" width="6" height="1.7" fill="#f0e8ff"/><rect x="0.4" y="4.35" width="6" height="1.7" fill="#f0e8ff"/><rect x="0.4" y="8.1" width="6" height="1.7" fill="#f0e8ff"/><rect x="1.2000000000000002" y="2.8000000000000003" width="3.4" height="1" fill="#f0e8ff" opacity="0.55"/><rect x="1.2000000000000002" y="6.55" width="3.4" height="1" fill="#f0e8ff" opacity="0.55"/></svg>
<div class="t" style="left:720.2px;top:190px;font-size:10.9px;line-height:12px;color:#e4daf2;transform:scaleX(0.9313);">Serum</div>
<div style="left:706px;top:243px;width:123px;height:53px;background:#5b4470;border-radius:3px;overflow:hidden;box-shadow:inset 0 1px 0 #6b5580,inset 1px 0 0 rgba(125,105,150,.35),inset -1px 0 0 rgba(40,20,60,.35);"><svg style="left:0;top:0" width="123.0" height="53"><rect x="0.00" y="16.2" width="3.29" height="2.3" fill="#ae5ad2"/><rect x="3.79" y="16.2" width="3.29" height="2.3" fill="#ae5ad2"/><rect x="7.57" y="16.2" width="3.29" height="2.3" fill="#ae5ad2"/><rect x="11.36" y="16.2" width="3.29" height="2.3" fill="#ae5ad2"/><rect x="15.14" y="30.1" width="3.29" height="2.3" fill="#ae5ad2"/><rect x="18.93" y="30.1" width="3.29" height="2.3" fill="#ae5ad2"/><rect x="22.72" y="30.1" width="3.29" height="2.3" fill="#ae5ad2"/><rect x="26.50" y="30.1" width="3.29" height="2.3" fill="#ae5ad2"/><rect x="30.29" y="27.5" width="3.29" height="2.3" fill="#ae5ad2"/><rect x="34.08" y="27.5" width="3.29" height="2.3" fill="#ae5ad2"/><rect x="37.86" y="27.5" width="3.29" height="2.3" fill="#ae5ad2"/><rect x="41.65" y="27.5" width="3.29" height="2.3" fill="#ae5ad2"/><rect x="45.44" y="21.8" width="3.29" height="2.3" fill="#ae5ad2"/><rect x="49.22" y="21.8" width="3.29" height="2.3" fill="#ae5ad2"/><rect x="53.01" y="21.8" width="3.29" height="2.3" fill="#ae5ad2"/><rect x="56.79" y="21.8" width="3.29" height="2.3" fill="#ae5ad2"/><rect x="60.58" y="49.5" width="3.29" height="2.3" fill="#ae5ad2"/><rect x="64.37" y="49.5" width="3.29" height="2.3" fill="#ae5ad2"/><rect x="68.15" y="49.5" width="3.29" height="2.3" fill="#ae5ad2"/><rect x="71.94" y="49.5" width="3.29" height="2.3" fill="#ae5ad2"/><rect x="75.72" y="30.1" width="3.29" height="2.3" fill="#ae5ad2"/><rect x="79.51" y="30.1" width="3.29" height="2.3" fill="#ae5ad2"/><rect x="83.30" y="30.1" width="3.29" height="2.3" fill="#ae5ad2"/><rect x="87.08" y="30.1" width="3.29" height="2.3" fill="#ae5ad2"/><rect x="90.87" y="27.5" width="3.29" height="2.3" fill="#ae5ad2"/><rect x="94.66" y="27.5" width="3.29" height="2.3" fill="#ae5ad2"/><rect x="98.44" y="27.5" width="3.29" height="2.3" fill="#ae5ad2"/><rect x="102.23" y="27.5" width="3.29" height="2.3" fill="#ae5ad2"/><rect x="106.02" y="21.8" width="3.29" height="2.3" fill="#ae5ad2"/><rect x="109.80" y="21.8" width="3.29" height="2.3" fill="#ae5ad2"/><rect x="113.59" y="21.8" width="3.29" height="2.3" fill="#ae5ad2"/><rect x="117.37" y="21.8" width="3.29" height="2.3" fill="#ae5ad2"/></svg></div>
<svg style="left:708.4px;top:245.2px;" width="10" height="11" viewBox="0 0 10 11"><rect x="5.6000000000000005" y="0.6" width="3.6" height="9.2" fill="#f0e8ff"/><rect x="0.4" y="0.6" width="6" height="1.7" fill="#f0e8ff"/><rect x="0.4" y="4.35" width="6" height="1.7" fill="#f0e8ff"/><rect x="0.4" y="8.1" width="6" height="1.7" fill="#f0e8ff"/><rect x="1.2000000000000002" y="2.8000000000000003" width="3.4" height="1" fill="#f0e8ff" opacity="0.55"/><rect x="1.2000000000000002" y="6.55" width="3.4" height="1" fill="#f0e8ff" opacity="0.55"/></svg>
<div class="t" style="left:720.2px;top:244px;font-size:10.9px;line-height:12px;color:#e4daf2;transform:scaleX(0.9522);">Serum #2</div>
<div style="left:706px;top:297px;width:33px;height:53px;background:linear-gradient(#584170,#5e4873);border-radius:3px;overflow:hidden;box-shadow:inset 0 1px 0 #6b5580,inset 1px 0 0 rgba(125,105,150,.35),inset -1px 0 0 rgba(40,20,60,.35);"><svg style="left:0;top:0" width="33.0" height="53"></svg></div>
<svg style="left:707.6px;top:299px;" width="12" height="9" viewBox="0 0 12 9"><path d="M2.4,2 L5.8,5.6 L9.2,2" fill="none" stroke="#f4eeff" stroke-width="1.5"/></svg>
<div style="left:706px;top:351px;width:123px;height:53px;background:#5b4470;border-radius:3px;overflow:hidden;box-shadow:inset 0 1px 0 #6b5580,inset 1px 0 0 rgba(125,105,150,.35),inset -1px 0 0 rgba(40,20,60,.35);"><svg style="left:0;top:0" width="123.0" height="53"><rect x="0.00" y="16.1" width="7.27" height="1.15" fill="#a656c6"/><rect x="7.57" y="16.1" width="7.27" height="1.15" fill="#a656c6"/><rect x="0.00" y="20.9" width="7.27" height="1.15" fill="#a656c6"/><rect x="7.57" y="20.9" width="7.27" height="1.15" fill="#a656c6"/><rect x="0.00" y="23.0" width="7.27" height="1.15" fill="#a656c6"/><rect x="7.57" y="23.0" width="7.27" height="1.15" fill="#a656c6"/><rect x="0.00" y="25.1" width="7.27" height="1.15" fill="#a656c6"/><rect x="7.57" y="25.1" width="7.27" height="1.15" fill="#a656c6"/><rect x="0.00" y="27.8" width="7.27" height="1.15" fill="#a656c6"/><rect x="7.57" y="27.8" width="7.27" height="1.15" fill="#a656c6"/><rect x="0.00" y="51.0" width="7.27" height="1.15" fill="#a656c6"/><rect x="7.57" y="51.0" width="7.27" height="1.15" fill="#a656c6"/><rect x="15.14" y="20.9" width="7.27" height="1.15" fill="#a656c6"/><rect x="22.72" y="20.9" width="7.27" height="1.15" fill="#a656c6"/><rect x="15.14" y="23.0" width="7.27" height="1.15" fill="#a656c6"/><rect x="22.72" y="23.0" width="7.27" height="1.15" fill="#a656c6"/><rect x="15.14" y="25.7" width="7.27" height="1.15" fill="#a656c6"/><rect x="22.72" y="25.7" width="7.27" height="1.15" fill="#a656c6"/><rect x="15.14" y="27.8" width="7.27" height="1.15" fill="#a656c6"/><rect x="22.72" y="27.8" width="7.27" height="1.15" fill="#a656c6"/><rect x="15.14" y="30.2" width="7.27" height="1.15" fill="#a656c6"/><rect x="22.72" y="30.2" width="7.27" height="1.15" fill="#a656c6"/><rect x="15.14" y="32.6" width="7.27" height="1.15" fill="#a656c6"/><rect x="22.72" y="32.6" width="7.27" height="1.15" fill="#a656c6"/><rect x="15.14" y="44.1" width="7.27" height="1.15" fill="#a656c6"/><rect x="22.72" y="44.1" width="7.27" height="1.15" fill="#a656c6"/><rect x="30.29" y="20.9" width="7.27" height="1.15" fill="#a656c6"/><rect x="37.86" y="20.9" width="7.27" height="1.15" fill="#a656c6"/><rect x="30.29" y="23.0" width="7.27" height="1.15" fill="#a656c6"/><rect x="37.86" y="23.0" width="7.27" height="1.15" fill="#a656c6"/><rect x="30.29" y="25.1" width="7.27" height="1.15" fill="#a656c6"/><rect x="37.86" y="25.1" width="7.27" height="1.15" fill="#a656c6"/><rect x="30.29" y="27.8" width="7.27" height="1.15" fill="#a656c6"/><rect x="37.86" y="27.8" width="7.27" height="1.15" fill="#a656c6"/><rect x="30.29" y="29.9" width="7.27" height="1.15" fill="#a656c6"/><rect x="37.86" y="29.9" width="7.27" height="1.15" fill="#a656c6"/><rect x="30.29" y="31.9" width="7.27" height="1.15" fill="#a656c6"/><rect x="37.86" y="31.9" width="7.27" height="1.15" fill="#a656c6"/><rect x="30.29" y="43.1" width="7.27" height="1.15" fill="#a656c6"/><rect x="37.86" y="43.1" width="7.27" height="1.15" fill="#a656c6"/><rect x="45.44" y="20.9" width="7.27" height="1.15" fill="#a656c6"/><rect x="53.01" y="20.9" width="7.27" height="1.15" fill="#a656c6"/><rect x="45.44" y="23.0" width="7.27" height="1.15" fill="#a656c6"/><rect x="53.01" y="23.0" width="7.27" height="1.15" fill="#a656c6"/><rect x="45.44" y="25.7" width="7.27" height="1.15" fill="#a656c6"/><rect x="53.01" y="25.7" width="7.27" height="1.15" fill="#a656c6"/><rect x="45.44" y="27.8" width="7.27" height="1.15" fill="#a656c6"/><rect x="53.01" y="27.8" width="7.27" height="1.15" fill="#a656c6"/><rect x="45.44" y="30.2" width="7.27" height="1.15" fill="#a656c6"/><rect x="53.01" y="30.2" width="7.27" height="1.15" fill="#a656c6"/><rect x="45.44" y="32.6" width="7.27" height="1.15" fill="#a656c6"/><rect x="53.01" y="32.6" width="7.27" height="1.15" fill="#a656c6"/><rect x="45.44" y="41.4" width="7.27" height="1.15" fill="#a656c6"/><rect x="53.01" y="41.4" width="7.27" height="1.15" fill="#a656c6"/><rect x="60.58" y="16.1" width="7.27" height="1.15" fill="#a656c6"/><rect x="68.15" y="16.1" width="7.27" height="1.15" fill="#a656c6"/><rect x="60.58" y="20.9" width="7.27" height="1.15" fill="#a656c6"/><rect x="68.15" y="20.9" width="7.27" height="1.15" fill="#a656c6"/><rect x="60.58" y="23.0" width="7.27" height="1.15" fill="#a656c6"/><rect x="68.15" y="23.0" width="7.27" height="1.15" fill="#a656c6"/><rect x="60.58" y="25.1" width="7.27" height="1.15" fill="#a656c6"/><rect x="68.15" y="25.1" width="7.27" height="1.15" fill="#a656c6"/><rect x="60.58" y="27.8" width="7.27" height="1.15" fill="#a656c6"/><rect x="68.15" y="27.8" width="7.27" height="1.15" fill="#a656c6"/><rect x="60.58" y="51.0" width="7.27" height="1.15" fill="#a656c6"/><rect x="68.15" y="51.0" width="7.27" height="1.15" fill="#a656c6"/><rect x="75.72" y="20.9" width="7.27" height="1.15" fill="#a656c6"/><rect x="83.30" y="20.9" width="7.27" height="1.15" fill="#a656c6"/><rect x="75.72" y="23.0" width="7.27" height="1.15" fill="#a656c6"/><rect x="83.30" y="23.0" width="7.27" height="1.15" fill="#a656c6"/><rect x="75.72" y="25.7" width="7.27" height="1.15" fill="#a656c6"/><rect x="83.30" y="25.7" width="7.27" height="1.15" fill="#a656c6"/><rect x="75.72" y="27.8" width="7.27" height="1.15" fill="#a656c6"/><rect x="83.30" y="27.8" width="7.27" height="1.15" fill="#a656c6"/><rect x="75.72" y="30.2" width="7.27" height="1.15" fill="#a656c6"/><rect x="83.30" y="30.2" width="7.27" height="1.15" fill="#a656c6"/><rect x="75.72" y="32.6" width="7.27" height="1.15" fill="#a656c6"/><rect x="83.30" y="32.6" width="7.27" height="1.15" fill="#a656c6"/><rect x="75.72" y="44.1" width="7.27" height="1.15" fill="#a656c6"/><rect x="83.30" y="44.1" width="7.27" height="1.15" fill="#a656c6"/><rect x="90.87" y="20.9" width="7.27" height="1.15" fill="#a656c6"/><rect x="98.44" y="20.9" width="7.27" height="1.15" fill="#a656c6"/><rect x="90.87" y="25.1" width="7.27" height="1.15" fill="#a656c6"/><rect x="98.44" y="25.1" width="7.27" height="1.15" fill="#a656c6"/><rect x="90.87" y="27.8" width="7.27" height="1.15" fill="#a656c6"/><rect x="98.44" y="27.8" width="7.27" height="1.15" fill="#a656c6"/><rect x="90.87" y="29.9" width="7.27" height="1.15" fill="#a656c6"/><rect x="98.44" y="29.9" width="7.27" height="1.15" fill="#a656c6"/><rect x="90.87" y="31.9" width="7.27" height="1.15" fill="#a656c6"/><rect x="98.44" y="31.9" width="7.27" height="1.15" fill="#a656c6"/><rect x="90.87" y="43.1" width="7.27" height="1.15" fill="#a656c6"/><rect x="98.44" y="43.1" width="7.27" height="1.15" fill="#a656c6"/><rect x="106.02" y="18.2" width="7.27" height="1.15" fill="#a656c6"/><rect x="113.59" y="18.2" width="7.27" height="1.15" fill="#a656c6"/><rect x="106.02" y="20.9" width="7.27" height="1.15" fill="#a656c6"/><rect x="113.59" y="20.9" width="7.27" height="1.15" fill="#a656c6"/><rect x="106.02" y="23.0" width="7.27" height="1.15" fill="#a656c6"/><rect x="113.59" y="23.0" width="7.27" height="1.15" fill="#a656c6"/><rect x="106.02" y="25.7" width="7.27" height="1.15" fill="#a656c6"/><rect x="113.59" y="25.7" width="7.27" height="1.15" fill="#a656c6"/><rect x="106.02" y="27.8" width="7.27" height="1.15" fill="#a656c6"/><rect x="113.59" y="27.8" width="7.27" height="1.15" fill="#a656c6"/><rect x="106.02" y="30.2" width="7.27" height="1.15" fill="#a656c6"/><rect x="113.59" y="30.2" width="7.27" height="1.15" fill="#a656c6"/><rect x="106.02" y="32.6" width="7.27" height="1.15" fill="#a656c6"/><rect x="113.59" y="32.6" width="7.27" height="1.15" fill="#a656c6"/><rect x="106.02" y="41.4" width="7.27" height="1.15" fill="#a656c6"/><rect x="113.59" y="41.4" width="7.27" height="1.15" fill="#a656c6"/></svg></div>
<svg style="left:708.4px;top:353.2px;" width="10" height="11" viewBox="0 0 10 11"><rect x="5.6000000000000005" y="0.6" width="3.6" height="9.2" fill="#f0e8ff"/><rect x="0.4" y="0.6" width="6" height="1.7" fill="#f0e8ff"/><rect x="0.4" y="4.35" width="6" height="1.7" fill="#f0e8ff"/><rect x="0.4" y="8.1" width="6" height="1.7" fill="#f0e8ff"/><rect x="1.2000000000000002" y="2.8000000000000003" width="3.4" height="1" fill="#f0e8ff" opacity="0.55"/><rect x="1.2000000000000002" y="6.55" width="3.4" height="1" fill="#f0e8ff" opacity="0.55"/></svg>
<div class="t" style="left:720.2px;top:352px;font-size:10.9px;line-height:12px;color:#e4daf2;transform:scaleX(0.8076);">TFG_CHORD..per Saws 1</div>
<div style="left:828px;top:189px;width:122px;height:53px;background:#5b4470;border-radius:3px;overflow:hidden;box-shadow:inset 0 1px 0 #6b5580,inset 1px 0 0 rgba(125,105,150,.35),inset -1px 0 0 rgba(40,20,60,.35);"><svg style="left:0;top:0" width="122.0" height="53"><rect x="3.79" y="16.0" width="3.29" height="2.3" fill="#ae5ad2"/><rect x="0.00" y="40.0" width="3.29" height="2.3" fill="#ae5ad2"/><rect x="11.36" y="16.0" width="3.29" height="2.3" fill="#ae5ad2"/><rect x="7.57" y="40.0" width="3.29" height="2.3" fill="#ae5ad2"/><rect x="18.93" y="25.9" width="3.29" height="2.3" fill="#ae5ad2"/><rect x="15.14" y="49.8" width="3.29" height="2.3" fill="#ae5ad2"/><rect x="26.50" y="25.9" width="3.29" height="2.3" fill="#ae5ad2"/><rect x="22.72" y="49.8" width="3.29" height="2.3" fill="#ae5ad2"/><rect x="34.08" y="24.0" width="3.29" height="2.3" fill="#ae5ad2"/><rect x="30.29" y="47.9" width="3.29" height="2.3" fill="#ae5ad2"/><rect x="41.65" y="24.0" width="3.29" height="2.3" fill="#ae5ad2"/><rect x="37.86" y="47.9" width="3.29" height="2.3" fill="#ae5ad2"/><rect x="49.22" y="19.9" width="3.29" height="2.3" fill="#ae5ad2"/><rect x="45.44" y="43.9" width="3.29" height="2.3" fill="#ae5ad2"/><rect x="56.79" y="19.9" width="3.29" height="2.3" fill="#ae5ad2"/><rect x="53.01" y="43.9" width="3.29" height="2.3" fill="#ae5ad2"/><rect x="64.37" y="16.0" width="3.29" height="2.3" fill="#ae5ad2"/><rect x="60.58" y="40.0" width="3.29" height="2.3" fill="#ae5ad2"/><rect x="71.94" y="16.0" width="3.29" height="2.3" fill="#ae5ad2"/><rect x="68.15" y="40.0" width="3.29" height="2.3" fill="#ae5ad2"/><rect x="79.51" y="25.9" width="3.29" height="2.3" fill="#ae5ad2"/><rect x="75.72" y="49.8" width="3.29" height="2.3" fill="#ae5ad2"/><rect x="87.08" y="25.9" width="3.29" height="2.3" fill="#ae5ad2"/><rect x="83.30" y="49.8" width="3.29" height="2.3" fill="#ae5ad2"/><rect x="94.66" y="24.0" width="3.29" height="2.3" fill="#ae5ad2"/><rect x="90.87" y="47.9" width="3.29" height="2.3" fill="#ae5ad2"/><rect x="102.23" y="24.0" width="3.29" height="2.3" fill="#ae5ad2"/><rect x="98.44" y="47.9" width="3.29" height="2.3" fill="#ae5ad2"/><rect x="109.80" y="19.9" width="3.29" height="2.3" fill="#ae5ad2"/><rect x="106.02" y="43.9" width="3.29" height="2.3" fill="#ae5ad2"/><rect x="117.37" y="19.9" width="3.29" height="2.3" fill="#ae5ad2"/><rect x="113.59" y="43.9" width="3.29" height="2.3" fill="#ae5ad2"/></svg></div>
<svg style="left:830.4px;top:191.2px;" width="10" height="11" viewBox="0 0 10 11"><rect x="5.6000000000000005" y="0.6" width="3.6" height="9.2" fill="#f0e8ff"/><rect x="0.4" y="0.6" width="6" height="1.7" fill="#f0e8ff"/><rect x="0.4" y="4.35" width="6" height="1.7" fill="#f0e8ff"/><rect x="0.4" y="8.1" width="6" height="1.7" fill="#f0e8ff"/><rect x="1.2000000000000002" y="2.8000000000000003" width="3.4" height="1" fill="#f0e8ff" opacity="0.55"/><rect x="1.2000000000000002" y="6.55" width="3.4" height="1" fill="#f0e8ff" opacity="0.55"/></svg>
<div class="t" style="left:842.2px;top:190px;font-size:10.9px;line-height:12px;color:#e4daf2;transform:scaleX(0.9313);">Serum</div>
<div style="left:828px;top:243px;width:122px;height:53px;background:#5b4470;border-radius:3px;overflow:hidden;box-shadow:inset 0 1px 0 #6b5580,inset 1px 0 0 rgba(125,105,150,.35),inset -1px 0 0 rgba(40,20,60,.35);"><svg style="left:0;top:0" width="122.0" height="53"><rect x="0.00" y="16.2" width="3.29" height="2.3" fill="#ae5ad2"/><rect x="3.79" y="16.2" width="3.29" height="2.3" fill="#ae5ad2"/><rect x="7.57" y="16.2" width="3.29" height="2.3" fill="#ae5ad2"/><rect x="11.36" y="16.2" width="3.29" height="2.3" fill="#ae5ad2"/><rect x="15.14" y="30.1" width="3.29" height="2.3" fill="#ae5ad2"/><rect x="18.93" y="30.1" width="3.29" height="2.3" fill="#ae5ad2"/><rect x="22.72" y="30.1" width="3.29" height="2.3" fill="#ae5ad2"/><rect x="26.50" y="30.1" width="3.29" height="2.3" fill="#ae5ad2"/><rect x="30.29" y="27.5" width="3.29" height="2.3" fill="#ae5ad2"/><rect x="34.08" y="27.5" width="3.29" height="2.3" fill="#ae5ad2"/><rect x="37.86" y="27.5" width="3.29" height="2.3" fill="#ae5ad2"/><rect x="41.65" y="27.5" width="3.29" height="2.3" fill="#ae5ad2"/><rect x="45.44" y="21.8" width="3.29" height="2.3" fill="#ae5ad2"/><rect x="49.22" y="21.8" width="3.29" height="2.3" fill="#ae5ad2"/><rect x="53.01" y="21.8" width="3.29" height="2.3" fill="#ae5ad2"/><rect x="56.79" y="21.8" width="3.29" height="2.3" fill="#ae5ad2"/><rect x="60.58" y="49.5" width="3.29" height="2.3" fill="#ae5ad2"/><rect x="64.37" y="49.5" width="3.29" height="2.3" fill="#ae5ad2"/><rect x="68.15" y="49.5" width="3.29" height="2.3" fill="#ae5ad2"/><rect x="71.94" y="49.5" width="3.29" height="2.3" fill="#ae5ad2"/><rect x="75.72" y="30.1" width="3.29" height="2.3" fill="#ae5ad2"/><rect x="79.51" y="30.1" width="3.29" height="2.3" fill="#ae5ad2"/><rect x="83.30" y="30.1" width="3.29" height="2.3" fill="#ae5ad2"/><rect x="87.08" y="30.1" width="3.29" height="2.3" fill="#ae5ad2"/><rect x="90.87" y="27.5" width="3.29" height="2.3" fill="#ae5ad2"/><rect x="94.66" y="27.5" width="3.29" height="2.3" fill="#ae5ad2"/><rect x="98.44" y="27.5" width="3.29" height="2.3" fill="#ae5ad2"/><rect x="102.23" y="27.5" width="3.29" height="2.3" fill="#ae5ad2"/><rect x="106.02" y="21.8" width="3.29" height="2.3" fill="#ae5ad2"/><rect x="109.80" y="21.8" width="3.29" height="2.3" fill="#ae5ad2"/><rect x="113.59" y="21.8" width="3.29" height="2.3" fill="#ae5ad2"/><rect x="117.37" y="21.8" width="3.29" height="2.3" fill="#ae5ad2"/></svg></div>
<svg style="left:830.4px;top:245.2px;" width="10" height="11" viewBox="0 0 10 11"><rect x="5.6000000000000005" y="0.6" width="3.6" height="9.2" fill="#f0e8ff"/><rect x="0.4" y="0.6" width="6" height="1.7" fill="#f0e8ff"/><rect x="0.4" y="4.35" width="6" height="1.7" fill="#f0e8ff"/><rect x="0.4" y="8.1" width="6" height="1.7" fill="#f0e8ff"/><rect x="1.2000000000000002" y="2.8000000000000003" width="3.4" height="1" fill="#f0e8ff" opacity="0.55"/><rect x="1.2000000000000002" y="6.55" width="3.4" height="1" fill="#f0e8ff" opacity="0.55"/></svg>
<div class="t" style="left:842.2px;top:244px;font-size:10.9px;line-height:12px;color:#e4daf2;transform:scaleX(0.9522);">Serum #2</div>
<div style="left:828px;top:297px;width:32px;height:53px;background:linear-gradient(#584170,#5e4873);border-radius:3px;overflow:hidden;box-shadow:inset 0 1px 0 #6b5580,inset 1px 0 0 rgba(125,105,150,.35),inset -1px 0 0 rgba(40,20,60,.35);"><svg style="left:0;top:0" width="32.0" height="53"></svg></div>
<svg style="left:829.6px;top:299px;" width="12" height="9" viewBox="0 0 12 9"><path d="M2.4,2 L5.8,5.6 L9.2,2" fill="none" stroke="#f4eeff" stroke-width="1.5"/></svg>
<div style="left:828px;top:351px;width:122px;height:53px;background:#5b4470;border-radius:3px;overflow:hidden;box-shadow:inset 0 1px 0 #6b5580,inset 1px 0 0 rgba(125,105,150,.35),inset -1px 0 0 rgba(40,20,60,.35);"><svg style="left:0;top:0" width="122.0" height="53"><rect x="0.00" y="16.1" width="7.27" height="1.15" fill="#a656c6"/><rect x="7.57" y="16.1" width="7.27" height="1.15" fill="#a656c6"/><rect x="0.00" y="20.9" width="7.27" height="1.15" fill="#a656c6"/><rect x="7.57" y="20.9" width="7.27" height="1.15" fill="#a656c6"/><rect x="0.00" y="23.0" width="7.27" height="1.15" fill="#a656c6"/><rect x="7.57" y="23.0" width="7.27" height="1.15" fill="#a656c6"/><rect x="0.00" y="25.1" width="7.27" height="1.15" fill="#a656c6"/><rect x="7.57" y="25.1" width="7.27" height="1.15" fill="#a656c6"/><rect x="0.00" y="27.8" width="7.27" height="1.15" fill="#a656c6"/><rect x="7.57" y="27.8" width="7.27" height="1.15" fill="#a656c6"/><rect x="0.00" y="51.0" width="7.27" height="1.15" fill="#a656c6"/><rect x="7.57" y="51.0" width="7.27" height="1.15" fill="#a656c6"/><rect x="15.14" y="20.9" width="7.27" height="1.15" fill="#a656c6"/><rect x="22.72" y="20.9" width="7.27" height="1.15" fill="#a656c6"/><rect x="15.14" y="23.0" width="7.27" height="1.15" fill="#a656c6"/><rect x="22.72" y="23.0" width="7.27" height="1.15" fill="#a656c6"/><rect x="15.14" y="25.7" width="7.27" height="1.15" fill="#a656c6"/><rect x="22.72" y="25.7" width="7.27" height="1.15" fill="#a656c6"/><rect x="15.14" y="27.8" width="7.27" height="1.15" fill="#a656c6"/><rect x="22.72" y="27.8" width="7.27" height="1.15" fill="#a656c6"/><rect x="15.14" y="30.2" width="7.27" height="1.15" fill="#a656c6"/><rect x="22.72" y="30.2" width="7.27" height="1.15" fill="#a656c6"/><rect x="15.14" y="32.6" width="7.27" height="1.15" fill="#a656c6"/><rect x="22.72" y="32.6" width="7.27" height="1.15" fill="#a656c6"/><rect x="15.14" y="44.1" width="7.27" height="1.15" fill="#a656c6"/><rect x="22.72" y="44.1" width="7.27" height="1.15" fill="#a656c6"/><rect x="30.29" y="20.9" width="7.27" height="1.15" fill="#a656c6"/><rect x="37.86" y="20.9" width="7.27" height="1.15" fill="#a656c6"/><rect x="30.29" y="23.0" width="7.27" height="1.15" fill="#a656c6"/><rect x="37.86" y="23.0" width="7.27" height="1.15" fill="#a656c6"/><rect x="30.29" y="25.1" width="7.27" height="1.15" fill="#a656c6"/><rect x="37.86" y="25.1" width="7.27" height="1.15" fill="#a656c6"/><rect x="30.29" y="27.8" width="7.27" height="1.15" fill="#a656c6"/><rect x="37.86" y="27.8" width="7.27" height="1.15" fill="#a656c6"/><rect x="30.29" y="29.9" width="7.27" height="1.15" fill="#a656c6"/><rect x="37.86" y="29.9" width="7.27" height="1.15" fill="#a656c6"/><rect x="30.29" y="31.9" width="7.27" height="1.15" fill="#a656c6"/><rect x="37.86" y="31.9" width="7.27" height="1.15" fill="#a656c6"/><rect x="30.29" y="43.1" width="7.27" height="1.15" fill="#a656c6"/><rect x="37.86" y="43.1" width="7.27" height="1.15" fill="#a656c6"/><rect x="45.44" y="20.9" width="7.27" height="1.15" fill="#a656c6"/><rect x="53.01" y="20.9" width="7.27" height="1.15" fill="#a656c6"/><rect x="45.44" y="23.0" width="7.27" height="1.15" fill="#a656c6"/><rect x="53.01" y="23.0" width="7.27" height="1.15" fill="#a656c6"/><rect x="45.44" y="25.7" width="7.27" height="1.15" fill="#a656c6"/><rect x="53.01" y="25.7" width="7.27" height="1.15" fill="#a656c6"/><rect x="45.44" y="27.8" width="7.27" height="1.15" fill="#a656c6"/><rect x="53.01" y="27.8" width="7.27" height="1.15" fill="#a656c6"/><rect x="45.44" y="30.2" width="7.27" height="1.15" fill="#a656c6"/><rect x="53.01" y="30.2" width="7.27" height="1.15" fill="#a656c6"/><rect x="45.44" y="32.6" width="7.27" height="1.15" fill="#a656c6"/><rect x="53.01" y="32.6" width="7.27" height="1.15" fill="#a656c6"/><rect x="45.44" y="41.4" width="7.27" height="1.15" fill="#a656c6"/><rect x="53.01" y="41.4" width="7.27" height="1.15" fill="#a656c6"/><rect x="60.58" y="16.1" width="7.27" height="1.15" fill="#a656c6"/><rect x="68.15" y="16.1" width="7.27" height="1.15" fill="#a656c6"/><rect x="60.58" y="20.9" width="7.27" height="1.15" fill="#a656c6"/><rect x="68.15" y="20.9" width="7.27" height="1.15" fill="#a656c6"/><rect x="60.58" y="23.0" width="7.27" height="1.15" fill="#a656c6"/><rect x="68.15" y="23.0" width="7.27" height="1.15" fill="#a656c6"/><rect x="60.58" y="25.1" width="7.27" height="1.15" fill="#a656c6"/><rect x="68.15" y="25.1" width="7.27" height="1.15" fill="#a656c6"/><rect x="60.58" y="27.8" width="7.27" height="1.15" fill="#a656c6"/><rect x="68.15" y="27.8" width="7.27" height="1.15" fill="#a656c6"/><rect x="60.58" y="51.0" width="7.27" height="1.15" fill="#a656c6"/><rect x="68.15" y="51.0" width="7.27" height="1.15" fill="#a656c6"/><rect x="75.72" y="20.9" width="7.27" height="1.15" fill="#a656c6"/><rect x="83.30" y="20.9" width="7.27" height="1.15" fill="#a656c6"/><rect x="75.72" y="23.0" width="7.27" height="1.15" fill="#a656c6"/><rect x="83.30" y="23.0" width="7.27" height="1.15" fill="#a656c6"/><rect x="75.72" y="25.7" width="7.27" height="1.15" fill="#a656c6"/><rect x="83.30" y="25.7" width="7.27" height="1.15" fill="#a656c6"/><rect x="75.72" y="27.8" width="7.27" height="1.15" fill="#a656c6"/><rect x="83.30" y="27.8" width="7.27" height="1.15" fill="#a656c6"/><rect x="75.72" y="30.2" width="7.27" height="1.15" fill="#a656c6"/><rect x="83.30" y="30.2" width="7.27" height="1.15" fill="#a656c6"/><rect x="75.72" y="32.6" width="7.27" height="1.15" fill="#a656c6"/><rect x="83.30" y="32.6" width="7.27" height="1.15" fill="#a656c6"/><rect x="75.72" y="44.1" width="7.27" height="1.15" fill="#a656c6"/><rect x="83.30" y="44.1" width="7.27" height="1.15" fill="#a656c6"/><rect x="90.87" y="20.9" width="7.27" height="1.15" fill="#a656c6"/><rect x="98.44" y="20.9" width="7.27" height="1.15" fill="#a656c6"/><rect x="90.87" y="25.1" width="7.27" height="1.15" fill="#a656c6"/><rect x="98.44" y="25.1" width="7.27" height="1.15" fill="#a656c6"/><rect x="90.87" y="27.8" width="7.27" height="1.15" fill="#a656c6"/><rect x="98.44" y="27.8" width="7.27" height="1.15" fill="#a656c6"/><rect x="90.87" y="29.9" width="7.27" height="1.15" fill="#a656c6"/><rect x="98.44" y="29.9" width="7.27" height="1.15" fill="#a656c6"/><rect x="90.87" y="31.9" width="7.27" height="1.15" fill="#a656c6"/><rect x="98.44" y="31.9" width="7.27" height="1.15" fill="#a656c6"/><rect x="90.87" y="43.1" width="7.27" height="1.15" fill="#a656c6"/><rect x="98.44" y="43.1" width="7.27" height="1.15" fill="#a656c6"/><rect x="106.02" y="18.2" width="7.27" height="1.15" fill="#a656c6"/><rect x="113.59" y="18.2" width="7.27" height="1.15" fill="#a656c6"/><rect x="106.02" y="20.9" width="7.27" height="1.15" fill="#a656c6"/><rect x="113.59" y="20.9" width="7.27" height="1.15" fill="#a656c6"/><rect x="106.02" y="23.0" width="7.27" height="1.15" fill="#a656c6"/><rect x="113.59" y="23.0" width="7.27" height="1.15" fill="#a656c6"/><rect x="106.02" y="25.7" width="7.27" height="1.15" fill="#a656c6"/><rect x="113.59" y="25.7" width="7.27" height="1.15" fill="#a656c6"/><rect x="106.02" y="27.8" width="7.27" height="1.15" fill="#a656c6"/><rect x="113.59" y="27.8" width="7.27" height="1.15" fill="#a656c6"/><rect x="106.02" y="30.2" width="7.27" height="1.15" fill="#a656c6"/><rect x="113.59" y="30.2" width="7.27" height="1.15" fill="#a656c6"/><rect x="106.02" y="32.6" width="7.27" height="1.15" fill="#a656c6"/><rect x="113.59" y="32.6" width="7.27" height="1.15" fill="#a656c6"/><rect x="106.02" y="41.4" width="7.27" height="1.15" fill="#a656c6"/><rect x="113.59" y="41.4" width="7.27" height="1.15" fill="#a656c6"/></svg></div>
<svg style="left:830.4px;top:353.2px;" width="10" height="11" viewBox="0 0 10 11"><rect x="5.6000000000000005" y="0.6" width="3.6" height="9.2" fill="#f0e8ff"/><rect x="0.4" y="0.6" width="6" height="1.7" fill="#f0e8ff"/><rect x="0.4" y="4.35" width="6" height="1.7" fill="#f0e8ff"/><rect x="0.4" y="8.1" width="6" height="1.7" fill="#f0e8ff"/><rect x="1.2000000000000002" y="2.8000000000000003" width="3.4" height="1" fill="#f0e8ff" opacity="0.55"/><rect x="1.2000000000000002" y="6.55" width="3.4" height="1" fill="#f0e8ff" opacity="0.55"/></svg>
<div class="t" style="left:842.2px;top:352px;font-size:10.9px;line-height:12px;color:#e4daf2;transform:scaleX(0.8076);">TFG_CHORD..per Saws 1</div>
<div style="left:949px;top:189px;width:122px;height:53px;background:#5b4470;border-radius:3px;overflow:hidden;box-shadow:inset 0 1px 0 #6b5580,inset 1px 0 0 rgba(125,105,150,.35),inset -1px 0 0 rgba(40,20,60,.35);"><svg style="left:0;top:0" width="122.0" height="53"><rect x="3.79" y="16.0" width="3.29" height="2.3" fill="#ae5ad2"/><rect x="0.00" y="40.0" width="3.29" height="2.3" fill="#ae5ad2"/><rect x="11.36" y="16.0" width="3.29" height="2.3" fill="#ae5ad2"/><rect x="7.57" y="40.0" width="3.29" height="2.3" fill="#ae5ad2"/><rect x="18.93" y="25.9" width="3.29" height="2.3" fill="#ae5ad2"/><rect x="15.14" y="49.8" width="3.29" height="2.3" fill="#ae5ad2"/><rect x="26.50" y="25.9" width="3.29" height="2.3" fill="#ae5ad2"/><rect x="22.72" y="49.8" width="3.29" height="2.3" fill="#ae5ad2"/><rect x="34.08" y="24.0" width="3.29" height="2.3" fill="#ae5ad2"/><rect x="30.29" y="47.9" width="3.29" height="2.3" fill="#ae5ad2"/><rect x="41.65" y="24.0" width="3.29" height="2.3" fill="#ae5ad2"/><rect x="37.86" y="47.9" width="3.29" height="2.3" fill="#ae5ad2"/><rect x="49.22" y="19.9" width="3.29" height="2.3" fill="#ae5ad2"/><rect x="45.44" y="43.9" width="3.29" height="2.3" fill="#ae5ad2"/><rect x="56.79" y="19.9" width="3.29" height="2.3" fill="#ae5ad2"/><rect x="53.01" y="43.9" width="3.29" height="2.3" fill="#ae5ad2"/><rect x="64.37" y="16.0" width="3.29" height="2.3" fill="#ae5ad2"/><rect x="60.58" y="40.0" width="3.29" height="2.3" fill="#ae5ad2"/><rect x="71.94" y="16.0" width="3.29" height="2.3" fill="#ae5ad2"/><rect x="68.15" y="40.0" width="3.29" height="2.3" fill="#ae5ad2"/><rect x="79.51" y="25.9" width="3.29" height="2.3" fill="#ae5ad2"/><rect x="75.72" y="49.8" width="3.29" height="2.3" fill="#ae5ad2"/><rect x="87.08" y="25.9" width="3.29" height="2.3" fill="#ae5ad2"/><rect x="83.30" y="49.8" width="3.29" height="2.3" fill="#ae5ad2"/><rect x="94.66" y="24.0" width="3.29" height="2.3" fill="#ae5ad2"/><rect x="90.87" y="47.9" width="3.29" height="2.3" fill="#ae5ad2"/><rect x="102.23" y="24.0" width="3.29" height="2.3" fill="#ae5ad2"/><rect x="98.44" y="47.9" width="3.29" height="2.3" fill="#ae5ad2"/><rect x="109.80" y="19.9" width="3.29" height="2.3" fill="#ae5ad2"/><rect x="106.02" y="43.9" width="3.29" height="2.3" fill="#ae5ad2"/><rect x="117.37" y="19.9" width="3.29" height="2.3" fill="#ae5ad2"/><rect x="113.59" y="43.9" width="3.29" height="2.3" fill="#ae5ad2"/></svg></div>
<svg style="left:951.4px;top:191.2px;" width="10" height="11" viewBox="0 0 10 11"><rect x="5.6000000000000005" y="0.6" width="3.6" height="9.2" fill="#f0e8ff"/><rect x="0.4" y="0.6" width="6" height="1.7" fill="#f0e8ff"/><rect x="0.4" y="4.35" width="6" height="1.7" fill="#f0e8ff"/><rect x="0.4" y="8.1" width="6" height="1.7" fill="#f0e8ff"/><rect x="1.2000000000000002" y="2.8000000000000003" width="3.4" height="1" fill="#f0e8ff" opacity="0.55"/><rect x="1.2000000000000002" y="6.55" width="3.4" height="1" fill="#f0e8ff" opacity="0.55"/></svg>
<div class="t" style="left:963.2px;top:190px;font-size:10.9px;line-height:12px;color:#e4daf2;transform:scaleX(0.9313);">Serum</div>
<div style="left:949px;top:243px;width:122px;height:53px;background:#5b4470;border-radius:3px;overflow:hidden;box-shadow:inset 0 1px 0 #6b5580,inset 1px 0 0 rgba(125,105,150,.35),inset -1px 0 0 rgba(40,20,60,.35);"><svg style="left:0;top:0" width="122.0" height="53"><rect x="0.00" y="16.2" width="3.29" height="2.3" fill="#ae5ad2"/><rect x="3.79" y="16.2" width="3.29" height="2.3" fill="#ae5ad2"/><rect x="7.57" y="16.2" width="3.29" height="2.3" fill="#ae5ad2"/><rect x="11.36" y="16.2" width="3.29" height="2.3" fill="#ae5ad2"/><rect x="15.14" y="30.1" width="3.29" height="2.3" fill="#ae5ad2"/><rect x="18.93" y="30.1" width="3.29" height="2.3" fill="#ae5ad2"/><rect x="22.72" y="30.1" width="3.29" height="2.3" fill="#ae5ad2"/><rect x="26.50" y="30.1" width="3.29" height="2.3" fill="#ae5ad2"/><rect x="30.29" y="27.5" width="3.29" height="2.3" fill="#ae5ad2"/><rect x="34.08" y="27.5" width="3.29" height="2.3" fill="#ae5ad2"/><rect x="37.86" y="27.5" width="3.29" height="2.3" fill="#ae5ad2"/><rect x="41.65" y="27.5" width="3.29" height="2.3" fill="#ae5ad2"/><rect x="45.44" y="21.8" width="3.29" height="2.3" fill="#ae5ad2"/><rect x="49.22" y="21.8" width="3.29" height="2.3" fill="#ae5ad2"/><rect x="53.01" y="21.8" width="3.29" height="2.3" fill="#ae5ad2"/><rect x="56.79" y="21.8" width="3.29" height="2.3" fill="#ae5ad2"/><rect x="60.58" y="49.5" width="3.29" height="2.3" fill="#ae5ad2"/><rect x="64.37" y="49.5" width="3.29" height="2.3" fill="#ae5ad2"/><rect x="68.15" y="49.5" width="3.29" height="2.3" fill="#ae5ad2"/><rect x="71.94" y="49.5" width="3.29" height="2.3" fill="#ae5ad2"/><rect x="75.72" y="30.1" width="3.29" height="2.3" fill="#ae5ad2"/><rect x="79.51" y="30.1" width="3.29" height="2.3" fill="#ae5ad2"/><rect x="83.30" y="30.1" width="3.29" height="2.3" fill="#ae5ad2"/><rect x="87.08" y="30.1" width="3.29" height="2.3" fill="#ae5ad2"/><rect x="90.87" y="27.5" width="3.29" height="2.3" fill="#ae5ad2"/><rect x="94.66" y="27.5" width="3.29" height="2.3" fill="#ae5ad2"/><rect x="98.44" y="27.5" width="3.29" height="2.3" fill="#ae5ad2"/><rect x="102.23" y="27.5" width="3.29" height="2.3" fill="#ae5ad2"/><rect x="106.02" y="21.8" width="3.29" height="2.3" fill="#ae5ad2"/><rect x="109.80" y="21.8" width="3.29" height="2.3" fill="#ae5ad2"/><rect x="113.59" y="21.8" width="3.29" height="2.3" fill="#ae5ad2"/><rect x="117.37" y="21.8" width="3.29" height="2.3" fill="#ae5ad2"/></svg></div>
<svg style="left:951.4px;top:245.2px;" width="10" height="11" viewBox="0 0 10 11"><rect x="5.6000000000000005" y="0.6" width="3.6" height="9.2" fill="#f0e8ff"/><rect x="0.4" y="0.6" width="6" height="1.7" fill="#f0e8ff"/><rect x="0.4" y="4.35" width="6" height="1.7" fill="#f0e8ff"/><rect x="0.4" y="8.1" width="6" height="1.7" fill="#f0e8ff"/><rect x="1.2000000000000002" y="2.8000000000000003" width="3.4" height="1" fill="#f0e8ff" opacity="0.55"/><rect x="1.2000000000000002" y="6.55" width="3.4" height="1" fill="#f0e8ff" opacity="0.55"/></svg>
<div class="t" style="left:963.2px;top:244px;font-size:10.9px;line-height:12px;color:#e4daf2;transform:scaleX(0.9522);">Serum #2</div>
<div style="left:949px;top:297px;width:32px;height:53px;background:linear-gradient(#584170,#5e4873);border-radius:3px;overflow:hidden;box-shadow:inset 0 1px 0 #6b5580,inset 1px 0 0 rgba(125,105,150,.35),inset -1px 0 0 rgba(40,20,60,.35);"><svg style="left:0;top:0" width="32.0" height="53"></svg></div>
<svg style="left:950.6px;top:299px;" width="12" height="9" viewBox="0 0 12 9"><path d="M2.4,2 L5.8,5.6 L9.2,2" fill="none" stroke="#f4eeff" stroke-width="1.5"/></svg>
<div style="left:949px;top:351px;width:122px;height:53px;background:#5b4470;border-radius:3px;overflow:hidden;box-shadow:inset 0 1px 0 #6b5580,inset 1px 0 0 rgba(125,105,150,.35),inset -1px 0 0 rgba(40,20,60,.35);"><svg style="left:0;top:0" width="122.0" height="53"><rect x="0.00" y="16.1" width="7.27" height="1.15" fill="#a656c6"/><rect x="7.57" y="16.1" width="7.27" height="1.15" fill="#a656c6"/><rect x="0.00" y="20.9" width="7.27" height="1.15" fill="#a656c6"/><rect x="7.57" y="20.9" width="7.27" height="1.15" fill="#a656c6"/><rect x="0.00" y="23.0" width="7.27" height="1.15" fill="#a656c6"/><rect x="7.57" y="23.0" width="7.27" height="1.15" fill="#a656c6"/><rect x="0.00" y="25.1" width="7.27" height="1.15" fill="#a656c6"/><rect x="7.57" y="25.1" width="7.27" height="1.15" fill="#a656c6"/><rect x="0.00" y="27.8" width="7.27" height="1.15" fill="#a656c6"/><rect x="7.57" y="27.8" width="7.27" height="1.15" fill="#a656c6"/><rect x="0.00" y="51.0" width="7.27" height="1.15" fill="#a656c6"/><rect x="7.57" y="51.0" width="7.27" height="1.15" fill="#a656c6"/><rect x="15.14" y="20.9" width="7.27" height="1.15" fill="#a656c6"/><rect x="22.72" y="20.9" width="7.27" height="1.15" fill="#a656c6"/><rect x="15.14" y="23.0" width="7.27" height="1.15" fill="#a656c6"/><rect x="22.72" y="23.0" width="7.27" height="1.15" fill="#a656c6"/><rect x="15.14" y="25.7" width="7.27" height="1.15" fill="#a656c6"/><rect x="22.72" y="25.7" width="7.27" height="1.15" fill="#a656c6"/><rect x="15.14" y="27.8" width="7.27" height="1.15" fill="#a656c6"/><rect x="22.72" y="27.8" width="7.27" height="1.15" fill="#a656c6"/><rect x="15.14" y="30.2" width="7.27" height="1.15" fill="#a656c6"/><rect x="22.72" y="30.2" width="7.27" height="1.15" fill="#a656c6"/><rect x="15.14" y="32.6" width="7.27" height="1.15" fill="#a656c6"/><rect x="22.72" y="32.6" width="7.27" height="1.15" fill="#a656c6"/><rect x="15.14" y="44.1" width="7.27" height="1.15" fill="#a656c6"/><rect x="22.72" y="44.1" width="7.27" height="1.15" fill="#a656c6"/><rect x="30.29" y="20.9" width="7.27" height="1.15" fill="#a656c6"/><rect x="37.86" y="20.9" width="7.27" height="1.15" fill="#a656c6"/><rect x="30.29" y="23.0" width="7.27" height="1.15" fill="#a656c6"/><rect x="37.86" y="23.0" width="7.27" height="1.15" fill="#a656c6"/><rect x="30.29" y="25.1" width="7.27" height="1.15" fill="#a656c6"/><rect x="37.86" y="25.1" width="7.27" height="1.15" fill="#a656c6"/><rect x="30.29" y="27.8" width="7.27" height="1.15" fill="#a656c6"/><rect x="37.86" y="27.8" width="7.27" height="1.15" fill="#a656c6"/><rect x="30.29" y="29.9" width="7.27" height="1.15" fill="#a656c6"/><rect x="37.86" y="29.9" width="7.27" height="1.15" fill="#a656c6"/><rect x="30.29" y="31.9" width="7.27" height="1.15" fill="#a656c6"/><rect x="37.86" y="31.9" width="7.27" height="1.15" fill="#a656c6"/><rect x="30.29" y="43.1" width="7.27" height="1.15" fill="#a656c6"/><rect x="37.86" y="43.1" width="7.27" height="1.15" fill="#a656c6"/><rect x="45.44" y="20.9" width="7.27" height="1.15" fill="#a656c6"/><rect x="53.01" y="20.9" width="7.27" height="1.15" fill="#a656c6"/><rect x="45.44" y="23.0" width="7.27" height="1.15" fill="#a656c6"/><rect x="53.01" y="23.0" width="7.27" height="1.15" fill="#a656c6"/><rect x="45.44" y="25.7" width="7.27" height="1.15" fill="#a656c6"/><rect x="53.01" y="25.7" width="7.27" height="1.15" fill="#a656c6"/><rect x="45.44" y="27.8" width="7.27" height="1.15" fill="#a656c6"/><rect x="53.01" y="27.8" width="7.27" height="1.15" fill="#a656c6"/><rect x="45.44" y="30.2" width="7.27" height="1.15" fill="#a656c6"/><rect x="53.01" y="30.2" width="7.27" height="1.15" fill="#a656c6"/><rect x="45.44" y="32.6" width="7.27" height="1.15" fill="#a656c6"/><rect x="53.01" y="32.6" width="7.27" height="1.15" fill="#a656c6"/><rect x="45.44" y="41.4" width="7.27" height="1.15" fill="#a656c6"/><rect x="53.01" y="41.4" width="7.27" height="1.15" fill="#a656c6"/><rect x="60.58" y="16.1" width="7.27" height="1.15" fill="#a656c6"/><rect x="68.15" y="16.1" width="7.27" height="1.15" fill="#a656c6"/><rect x="60.58" y="20.9" width="7.27" height="1.15" fill="#a656c6"/><rect x="68.15" y="20.9" width="7.27" height="1.15" fill="#a656c6"/><rect x="60.58" y="23.0" width="7.27" height="1.15" fill="#a656c6"/><rect x="68.15" y="23.0" width="7.27" height="1.15" fill="#a656c6"/><rect x="60.58" y="25.1" width="7.27" height="1.15" fill="#a656c6"/><rect x="68.15" y="25.1" width="7.27" height="1.15" fill="#a656c6"/><rect x="60.58" y="27.8" width="7.27" height="1.15" fill="#a656c6"/><rect x="68.15" y="27.8" width="7.27" height="1.15" fill="#a656c6"/><rect x="60.58" y="51.0" width="7.27" height="1.15" fill="#a656c6"/><rect x="68.15" y="51.0" width="7.27" height="1.15" fill="#a656c6"/><rect x="75.72" y="20.9" width="7.27" height="1.15" fill="#a656c6"/><rect x="83.30" y="20.9" width="7.27" height="1.15" fill="#a656c6"/><rect x="75.72" y="23.0" width="7.27" height="1.15" fill="#a656c6"/><rect x="83.30" y="23.0" width="7.27" height="1.15" fill="#a656c6"/><rect x="75.72" y="25.7" width="7.27" height="1.15" fill="#a656c6"/><rect x="83.30" y="25.7" width="7.27" height="1.15" fill="#a656c6"/><rect x="75.72" y="27.8" width="7.27" height="1.15" fill="#a656c6"/><rect x="83.30" y="27.8" width="7.27" height="1.15" fill="#a656c6"/><rect x="75.72" y="30.2" width="7.27" height="1.15" fill="#a656c6"/><rect x="83.30" y="30.2" width="7.27" height="1.15" fill="#a656c6"/><rect x="75.72" y="32.6" width="7.27" height="1.15" fill="#a656c6"/><rect x="83.30" y="32.6" width="7.27" height="1.15" fill="#a656c6"/><rect x="75.72" y="44.1" width="7.27" height="1.15" fill="#a656c6"/><rect x="83.30" y="44.1" width="7.27" height="1.15" fill="#a656c6"/><rect x="90.87" y="20.9" width="7.27" height="1.15" fill="#a656c6"/><rect x="98.44" y="20.9" width="7.27" height="1.15" fill="#a656c6"/><rect x="90.87" y="25.1" width="7.27" height="1.15" fill="#a656c6"/><rect x="98.44" y="25.1" width="7.27" height="1.15" fill="#a656c6"/><rect x="90.87" y="27.8" width="7.27" height="1.15" fill="#a656c6"/><rect x="98.44" y="27.8" width="7.27" height="1.15" fill="#a656c6"/><rect x="90.87" y="29.9" width="7.27" height="1.15" fill="#a656c6"/><rect x="98.44" y="29.9" width="7.27" height="1.15" fill="#a656c6"/><rect x="90.87" y="31.9" width="7.27" height="1.15" fill="#a656c6"/><rect x="98.44" y="31.9" width="7.27" height="1.15" fill="#a656c6"/><rect x="90.87" y="43.1" width="7.27" height="1.15" fill="#a656c6"/><rect x="98.44" y="43.1" width="7.27" height="1.15" fill="#a656c6"/><rect x="106.02" y="18.2" width="7.27" height="1.15" fill="#a656c6"/><rect x="113.59" y="18.2" width="7.27" height="1.15" fill="#a656c6"/><rect x="106.02" y="20.9" width="7.27" height="1.15" fill="#a656c6"/><rect x="113.59" y="20.9" width="7.27" height="1.15" fill="#a656c6"/><rect x="106.02" y="23.0" width="7.27" height="1.15" fill="#a656c6"/><rect x="113.59" y="23.0" width="7.27" height="1.15" fill="#a656c6"/><rect x="106.02" y="25.7" width="7.27" height="1.15" fill="#a656c6"/><rect x="113.59" y="25.7" width="7.27" height="1.15" fill="#a656c6"/><rect x="106.02" y="27.8" width="7.27" height="1.15" fill="#a656c6"/><rect x="113.59" y="27.8" width="7.27" height="1.15" fill="#a656c6"/><rect x="106.02" y="30.2" width="7.27" height="1.15" fill="#a656c6"/><rect x="113.59" y="30.2" width="7.27" height="1.15" fill="#a656c6"/><rect x="106.02" y="32.6" width="7.27" height="1.15" fill="#a656c6"/><rect x="113.59" y="32.6" width="7.27" height="1.15" fill="#a656c6"/><rect x="106.02" y="41.4" width="7.27" height="1.15" fill="#a656c6"/><rect x="113.59" y="41.4" width="7.27" height="1.15" fill="#a656c6"/></svg></div>
<svg style="left:951.4px;top:353.2px;" width="10" height="11" viewBox="0 0 10 11"><rect x="5.6000000000000005" y="0.6" width="3.6" height="9.2" fill="#f0e8ff"/><rect x="0.4" y="0.6" width="6" height="1.7" fill="#f0e8ff"/><rect x="0.4" y="4.35" width="6" height="1.7" fill="#f0e8ff"/><rect x="0.4" y="8.1" width="6" height="1.7" fill="#f0e8ff"/><rect x="1.2000000000000002" y="2.8000000000000003" width="3.4" height="1" fill="#f0e8ff" opacity="0.55"/><rect x="1.2000000000000002" y="6.55" width="3.4" height="1" fill="#f0e8ff" opacity="0.55"/></svg>
<div class="t" style="left:963.2px;top:352px;font-size:10.9px;line-height:12px;color:#e4daf2;transform:scaleX(0.8076);">TFG_CHORD..per Saws 1</div>
<div style="left:1070px;top:189px;width:122px;height:53px;background:#5b4470;border-radius:3px;overflow:hidden;box-shadow:inset 0 1px 0 #6b5580,inset 1px 0 0 rgba(125,105,150,.35),inset -1px 0 0 rgba(40,20,60,.35);"><svg style="left:0;top:0" width="122.0" height="53"><rect x="3.79" y="16.0" width="3.29" height="2.3" fill="#ae5ad2"/><rect x="0.00" y="40.0" width="3.29" height="2.3" fill="#ae5ad2"/><rect x="11.36" y="16.0" width="3.29" height="2.3" fill="#ae5ad2"/><rect x="7.57" y="40.0" width="3.29" height="2.3" fill="#ae5ad2"/><rect x="18.93" y="25.9" width="3.29" height="2.3" fill="#ae5ad2"/><rect x="15.14" y="49.8" width="3.29" height="2.3" fill="#ae5ad2"/><rect x="26.50" y="25.9" width="3.29" height="2.3" fill="#ae5ad2"/><rect x="22.72" y="49.8" width="3.29" height="2.3" fill="#ae5ad2"/><rect x="34.08" y="24.0" width="3.29" height="2.3" fill="#ae5ad2"/><rect x="30.29" y="47.9" width="3.29" height="2.3" fill="#ae5ad2"/><rect x="41.65" y="24.0" width="3.29" height="2.3" fill="#ae5ad2"/><rect x="37.86" y="47.9" width="3.29" height="2.3" fill="#ae5ad2"/><rect x="49.22" y="19.9" width="3.29" height="2.3" fill="#ae5ad2"/><rect x="45.44" y="43.9" width="3.29" height="2.3" fill="#ae5ad2"/><rect x="56.79" y="19.9" width="3.29" height="2.3" fill="#ae5ad2"/><rect x="53.01" y="43.9" width="3.29" height="2.3" fill="#ae5ad2"/><rect x="64.37" y="16.0" width="3.29" height="2.3" fill="#ae5ad2"/><rect x="60.58" y="40.0" width="3.29" height="2.3" fill="#ae5ad2"/><rect x="71.94" y="16.0" width="3.29" height="2.3" fill="#ae5ad2"/><rect x="68.15" y="40.0" width="3.29" height="2.3" fill="#ae5ad2"/><rect x="79.51" y="25.9" width="3.29" height="2.3" fill="#ae5ad2"/><rect x="75.72" y="49.8" width="3.29" height="2.3" fill="#ae5ad2"/><rect x="87.08" y="25.9" width="3.29" height="2.3" fill="#ae5ad2"/><rect x="83.30" y="49.8" width="3.29" height="2.3" fill="#ae5ad2"/><rect x="94.66" y="24.0" width="3.29" height="2.3" fill="#ae5ad2"/><rect x="90.87" y="47.9" width="3.29" height="2.3" fill="#ae5ad2"/><rect x="102.23" y="24.0" width="3.29" height="2.3" fill="#ae5ad2"/><rect x="98.44" y="47.9" width="3.29" height="2.3" fill="#ae5ad2"/><rect x="109.80" y="19.9" width="3.29" height="2.3" fill="#ae5ad2"/><rect x="106.02" y="43.9" width="3.29" height="2.3" fill="#ae5ad2"/><rect x="117.37" y="19.9" width="3.29" height="2.3" fill="#ae5ad2"/><rect x="113.59" y="43.9" width="3.29" height="2.3" fill="#ae5ad2"/></svg></div>
<svg style="left:1072.4px;top:191.2px;" width="10" height="11" viewBox="0 0 10 11"><rect x="5.6000000000000005" y="0.6" width="3.6" height="9.2" fill="#f0e8ff"/><rect x="0.4" y="0.6" width="6" height="1.7" fill="#f0e8ff"/><rect x="0.4" y="4.35" width="6" height="1.7" fill="#f0e8ff"/><rect x="0.4" y="8.1" width="6" height="1.7" fill="#f0e8ff"/><rect x="1.2000000000000002" y="2.8000000000000003" width="3.4" height="1" fill="#f0e8ff" opacity="0.55"/><rect x="1.2000000000000002" y="6.55" width="3.4" height="1" fill="#f0e8ff" opacity="0.55"/></svg>
<div class="t" style="left:1084.2px;top:190px;font-size:10.9px;line-height:12px;color:#e4daf2;transform:scaleX(0.9313);">Serum</div>
<div style="left:1070px;top:243px;width:122px;height:53px;background:#5b4470;border-radius:3px;overflow:hidden;box-shadow:inset 0 1px 0 #6b5580,inset 1px 0 0 rgba(125,105,150,.35),inset -1px 0 0 rgba(40,20,60,.35);"><svg style="left:0;top:0" width="122.0" height="53"><rect x="0.00" y="16.2" width="3.29" height="2.3" fill="#ae5ad2"/><rect x="3.79" y="16.2" width="3.29" height="2.3" fill="#ae5ad2"/><rect x="7.57" y="16.2" width="3.29" height="2.3" fill="#ae5ad2"/><rect x="11.36" y="16.2" width="3.29" height="2.3" fill="#ae5ad2"/><rect x="15.14" y="30.1" width="3.29" height="2.3" fill="#ae5ad2"/><rect x="18.93" y="30.1" width="3.29" height="2.3" fill="#ae5ad2"/><rect x="22.72" y="30.1" width="3.29" height="2.3" fill="#ae5ad2"/><rect x="26.50" y="30.1" width="3.29" height="2.3" fill="#ae5ad2"/><rect x="30.29" y="27.5" width="3.29" height="2.3" fill="#ae5ad2"/><rect x="34.08" y="27.5" width="3.29" height="2.3" fill="#ae5ad2"/><rect x="37.86" y="27.5" width="3.29" height="2.3" fill="#ae5ad2"/><rect x="41.65" y="27.5" width="3.29" height="2.3" fill="#ae5ad2"/><rect x="45.44" y="21.8" width="3.29" height="2.3" fill="#ae5ad2"/><rect x="49.22" y="21.8" width="3.29" height="2.3" fill="#ae5ad2"/><rect x="53.01" y="21.8" width="3.29" height="2.3" fill="#ae5ad2"/><rect x="56.79" y="21.8" width="3.29" height="2.3" fill="#ae5ad2"/><rect x="60.58" y="49.5" width="3.29" height="2.3" fill="#ae5ad2"/><rect x="64.37" y="49.5" width="3.29" height="2.3" fill="#ae5ad2"/><rect x="68.15" y="49.5" width="3.29" height="2.3" fill="#ae5ad2"/><rect x="71.94" y="49.5" width="3.29" height="2.3" fill="#ae5ad2"/><rect x="75.72" y="30.1" width="3.29" height="2.3" fill="#ae5ad2"/><rect x="79.51" y="30.1" width="3.29" height="2.3" fill="#ae5ad2"/><rect x="83.30" y="30.1" width="3.29" height="2.3" fill="#ae5ad2"/><rect x="87.08" y="30.1" width="3.29" height="2.3" fill="#ae5ad2"/><rect x="90.87" y="27.5" width="3.29" height="2.3" fill="#ae5ad2"/><rect x="94.66" y="27.5" width="3.29" height="2.3" fill="#ae5ad2"/><rect x="98.44" y="27.5" width="3.29" height="2.3" fill="#ae5ad2"/><rect x="102.23" y="27.5" width="3.29" height="2.3" fill="#ae5ad2"/><rect x="106.02" y="21.8" width="3.29" height="2.3" fill="#ae5ad2"/><rect x="109.80" y="21.8" width="3.29" height="2.3" fill="#ae5ad2"/><rect x="113.59" y="21.8" width="3.29" height="2.3" fill="#ae5ad2"/><rect x="117.37" y="21.8" width="3.29" height="2.3" fill="#ae5ad2"/></svg></div>
<svg style="left:1072.4px;top:245.2px;" width="10" height="11" viewBox="0 0 10 11"><rect x="5.6000000000000005" y="0.6" width="3.6" height="9.2" fill="#f0e8ff"/><rect x="0.4" y="0.6" width="6" height="1.7" fill="#f0e8ff"/><rect x="0.4" y="4.35" width="6" height="1.7" fill="#f0e8ff"/><rect x="0.4" y="8.1" width="6" height="1.7" fill="#f0e8ff"/><rect x="1.2000000000000002" y="2.8000000000000003" width="3.4" height="1" fill="#f0e8ff" opacity="0.55"/><rect x="1.2000000000000002" y="6.55" width="3.4" height="1" fill="#f0e8ff" opacity="0.55"/></svg>
<div class="t" style="left:1084.2px;top:244px;font-size:10.9px;line-height:12px;color:#e4daf2;transform:scaleX(0.9522);">Serum #2</div>
<div style="left:1070px;top:297px;width:32px;height:53px;background:linear-gradient(#584170,#5e4873);border-radius:3px;overflow:hidden;box-shadow:inset 0 1px 0 #6b5580,inset 1px 0 0 rgba(125,105,150,.35),inset -1px 0 0 rgba(40,20,60,.35);"><svg style="left:0;top:0" width="32.0" height="53"></svg></div>
<svg style="left:1071.6px;top:299px;" width="12" height="9" viewBox="0 0 12 9"><path d="M2.4,2 L5.8,5.6 L9.2,2" fill="none" stroke="#f4eeff" stroke-width="1.5"/></svg>
<div style="left:1070px;top:351px;width:122px;height:53px;background:#5b4470;border-radius:3px;overflow:hidden;box-shadow:inset 0 1px 0 #6b5580,inset 1px 0 0 rgba(125,105,150,.35),inset -1px 0 0 rgba(40,20,60,.35);"><svg style="left:0;top:0" width="122.0" height="53"><rect x="0.00" y="16.1" width="7.27" height="1.15" fill="#a656c6"/><rect x="7.57" y="16.1" width="7.27" height="1.15" fill="#a656c6"/><rect x="0.00" y="20.9" width="7.27" height="1.15" fill="#a656c6"/><rect x="7.57" y="20.9" width="7.27" height="1.15" fill="#a656c6"/><rect x="0.00" y="23.0" width="7.27" height="1.15" fill="#a656c6"/><rect x="7.57" y="23.0" width="7.27" height="1.15" fill="#a656c6"/><rect x="0.00" y="25.1" width="7.27" height="1.15" fill="#a656c6"/><rect x="7.57" y="25.1" width="7.27" height="1.15" fill="#a656c6"/><rect x="0.00" y="27.8" width="7.27" height="1.15" fill="#a656c6"/><rect x="7.57" y="27.8" width="7.27" height="1.15" fill="#a656c6"/><rect x="0.00" y="51.0" width="7.27" height="1.15" fill="#a656c6"/><rect x="7.57" y="51.0" width="7.27" height="1.15" fill="#a656c6"/><rect x="15.14" y="20.9" width="7.27" height="1.15" fill="#a656c6"/><rect x="22.72" y="20.9" width="7.27" height="1.15" fill="#a656c6"/><rect x="15.14" y="23.0" width="7.27" height="1.15" fill="#a656c6"/><rect x="22.72" y="23.0" width="7.27" height="1.15" fill="#a656c6"/><rect x="15.14" y="25.7" width="7.27" height="1.15" fill="#a656c6"/><rect x="22.72" y="25.7" width="7.27" height="1.15" fill="#a656c6"/><rect x="15.14" y="27.8" width="7.27" height="1.15" fill="#a656c6"/><rect x="22.72" y="27.8" width="7.27" height="1.15" fill="#a656c6"/><rect x="15.14" y="30.2" width="7.27" height="1.15" fill="#a656c6"/><rect x="22.72" y="30.2" width="7.27" height="1.15" fill="#a656c6"/><rect x="15.14" y="32.6" width="7.27" height="1.15" fill="#a656c6"/><rect x="22.72" y="32.6" width="7.27" height="1.15" fill="#a656c6"/><rect x="15.14" y="44.1" width="7.27" height="1.15" fill="#a656c6"/><rect x="22.72" y="44.1" width="7.27" height="1.15" fill="#a656c6"/><rect x="30.29" y="20.9" width="7.27" height="1.15" fill="#a656c6"/><rect x="37.86" y="20.9" width="7.27" height="1.15" fill="#a656c6"/><rect x="30.29" y="23.0" width="7.27" height="1.15" fill="#a656c6"/><rect x="37.86" y="23.0" width="7.27" height="1.15" fill="#a656c6"/><rect x="30.29" y="25.1" width="7.27" height="1.15" fill="#a656c6"/><rect x="37.86" y="25.1" width="7.27" height="1.15" fill="#a656c6"/><rect x="30.29" y="27.8" width="7.27" height="1.15" fill="#a656c6"/><rect x="37.86" y="27.8" width="7.27" height="1.15" fill="#a656c6"/><rect x="30.29" y="29.9" width="7.27" height="1.15" fill="#a656c6"/><rect x="37.86" y="29.9" width="7.27" height="1.15" fill="#a656c6"/><rect x="30.29" y="31.9" width="7.27" height="1.15" fill="#a656c6"/><rect x="37.86" y="31.9" width="7.27" height="1.15" fill="#a656c6"/><rect x="30.29" y="43.1" width="7.27" height="1.15" fill="#a656c6"/><rect x="37.86" y="43.1" width="7.27" height="1.15" fill="#a656c6"/><rect x="45.44" y="20.9" width="7.27" height="1.15" fill="#a656c6"/><rect x="53.01" y="20.9" width="7.27" height="1.15" fill="#a656c6"/><rect x="45.44" y="23.0" width="7.27" height="1.15" fill="#a656c6"/><rect x="53.01" y="23.0" width="7.27" height="1.15" fill="#a656c6"/><rect x="45.44" y="25.7" width="7.27" height="1.15" fill="#a656c6"/><rect x="53.01" y="25.7" width="7.27" height="1.15" fill="#a656c6"/><rect x="45.44" y="27.8" width="7.27" height="1.15" fill="#a656c6"/><rect x="53.01" y="27.8" width="7.27" height="1.15" fill="#a656c6"/><rect x="45.44" y="30.2" width="7.27" height="1.15" fill="#a656c6"/><rect x="53.01" y="30.2" width="7.27" height="1.15" fill="#a656c6"/><rect x="45.44" y="32.6" width="7.27" height="1.15" fill="#a656c6"/><rect x="53.01" y="32.6" width="7.27" height="1.15" fill="#a656c6"/><rect x="45.44" y="41.4" width="7.27" height="1.15" fill="#a656c6"/><rect x="53.01" y="41.4" width="7.27" height="1.15" fill="#a656c6"/><rect x="60.58" y="16.1" width="7.27" height="1.15" fill="#a656c6"/><rect x="68.15" y="16.1" width="7.27" height="1.15" fill="#a656c6"/><rect x="60.58" y="20.9" width="7.27" height="1.15" fill="#a656c6"/><rect x="68.15" y="20.9" width="7.27" height="1.15" fill="#a656c6"/><rect x="60.58" y="23.0" width="7.27" height="1.15" fill="#a656c6"/><rect x="68.15" y="23.0" width="7.27" height="1.15" fill="#a656c6"/><rect x="60.58" y="25.1" width="7.27" height="1.15" fill="#a656c6"/><rect x="68.15" y="25.1" width="7.27" height="1.15" fill="#a656c6"/><rect x="60.58" y="27.8" width="7.27" height="1.15" fill="#a656c6"/><rect x="68.15" y="27.8" width="7.27" height="1.15" fill="#a656c6"/><rect x="60.58" y="51.0" width="7.27" height="1.15" fill="#a656c6"/><rect x="68.15" y="51.0" width="7.27" height="1.15" fill="#a656c6"/><rect x="75.72" y="20.9" width="7.27" height="1.15" fill="#a656c6"/><rect x="83.30" y="20.9" width="7.27" height="1.15" fill="#a656c6"/><rect x="75.72" y="23.0" width="7.27" height="1.15" fill="#a656c6"/><rect x="83.30" y="23.0" width="7.27" height="1.15" fill="#a656c6"/><rect x="75.72" y="25.7" width="7.27" height="1.15" fill="#a656c6"/><rect x="83.30" y="25.7" width="7.27" height="1.15" fill="#a656c6"/><rect x="75.72" y="27.8" width="7.27" height="1.15" fill="#a656c6"/><rect x="83.30" y="27.8" width="7.27" height="1.15" fill="#a656c6"/><rect x="75.72" y="30.2" width="7.27" height="1.15" fill="#a656c6"/><rect x="83.30" y="30.2" width="7.27" height="1.15" fill="#a656c6"/><rect x="75.72" y="32.6" width="7.27" height="1.15" fill="#a656c6"/><rect x="83.30" y="32.6" width="7.27" height="1.15" fill="#a656c6"/><rect x="75.72" y="44.1" width="7.27" height="1.15" fill="#a656c6"/><rect x="83.30" y="44.1" width="7.27" height="1.15" fill="#a656c6"/><rect x="90.87" y="20.9" width="7.27" height="1.15" fill="#a656c6"/><rect x="98.44" y="20.9" width="7.27" height="1.15" fill="#a656c6"/><rect x="90.87" y="25.1" width="7.27" height="1.15" fill="#a656c6"/><rect x="98.44" y="25.1" width="7.27" height="1.15" fill="#a656c6"/><rect x="90.87" y="27.8" width="7.27" height="1.15" fill="#a656c6"/><rect x="98.44" y="27.8" width="7.27" height="1.15" fill="#a656c6"/><rect x="90.87" y="29.9" width="7.27" height="1.15" fill="#a656c6"/><rect x="98.44" y="29.9" width="7.27" height="1.15" fill="#a656c6"/><rect x="90.87" y="31.9" width="7.27" height="1.15" fill="#a656c6"/><rect x="98.44" y="31.9" width="7.27" height="1.15" fill="#a656c6"/><rect x="90.87" y="43.1" width="7.27" height="1.15" fill="#a656c6"/><rect x="98.44" y="43.1" width="7.27" height="1.15" fill="#a656c6"/><rect x="106.02" y="18.2" width="7.27" height="1.15" fill="#a656c6"/><rect x="113.59" y="18.2" width="7.27" height="1.15" fill="#a656c6"/><rect x="106.02" y="20.9" width="7.27" height="1.15" fill="#a656c6"/><rect x="113.59" y="20.9" width="7.27" height="1.15" fill="#a656c6"/><rect x="106.02" y="23.0" width="7.27" height="1.15" fill="#a656c6"/><rect x="113.59" y="23.0" width="7.27" height="1.15" fill="#a656c6"/><rect x="106.02" y="25.7" width="7.27" height="1.15" fill="#a656c6"/><rect x="113.59" y="25.7" width="7.27" height="1.15" fill="#a656c6"/><rect x="106.02" y="27.8" width="7.27" height="1.15" fill="#a656c6"/><rect x="113.59" y="27.8" width="7.27" height="1.15" fill="#a656c6"/><rect x="106.02" y="30.2" width="7.27" height="1.15" fill="#a656c6"/><rect x="113.59" y="30.2" width="7.27" height="1.15" fill="#a656c6"/><rect x="106.02" y="32.6" width="7.27" height="1.15" fill="#a656c6"/><rect x="113.59" y="32.6" width="7.27" height="1.15" fill="#a656c6"/><rect x="106.02" y="41.4" width="7.27" height="1.15" fill="#a656c6"/><rect x="113.59" y="41.4" width="7.27" height="1.15" fill="#a656c6"/></svg></div>
<svg style="left:1072.4px;top:353.2px;" width="10" height="11" viewBox="0 0 10 11"><rect x="5.6000000000000005" y="0.6" width="3.6" height="9.2" fill="#f0e8ff"/><rect x="0.4" y="0.6" width="6" height="1.7" fill="#f0e8ff"/><rect x="0.4" y="4.35" width="6" height="1.7" fill="#f0e8ff"/><rect x="0.4" y="8.1" width="6" height="1.7" fill="#f0e8ff"/><rect x="1.2000000000000002" y="2.8000000000000003" width="3.4" height="1" fill="#f0e8ff" opacity="0.55"/><rect x="1.2000000000000002" y="6.55" width="3.4" height="1" fill="#f0e8ff" opacity="0.55"/></svg>
<div class="t" style="left:1084.2px;top:352px;font-size:10.9px;line-height:12px;color:#e4daf2;transform:scaleX(0.8076);">TFG_CHORD..per Saws 1</div>
<div style="left:706px;top:405px;width:123px;height:53px;background:#5b4470;border-radius:3px;overflow:hidden;box-shadow:inset 0 1px 0 #6b5580,inset 1px 0 0 rgba(125,105,150,.35),inset -1px 0 0 rgba(40,20,60,.35);"><svg style="left:0;top:0" width="123.0" height="53"><rect x="106.02" y="15.8" width="3.29" height="2.3" fill="#ae5ad2"/><rect x="109.80" y="17.5" width="3.29" height="2.3" fill="#ae5ad2"/><rect x="35.97" y="24.4" width="3.29" height="2.3" fill="#ae5ad2"/><rect x="90.87" y="24.4" width="3.29" height="2.3" fill="#ae5ad2"/><rect x="113.59" y="24.4" width="3.29" height="2.3" fill="#ae5ad2"/><rect x="5.68" y="29.5" width="3.29" height="2.3" fill="#ae5ad2"/><rect x="18.93" y="29.5" width="3.29" height="2.3" fill="#ae5ad2"/><rect x="26.50" y="29.5" width="3.29" height="2.3" fill="#ae5ad2"/><rect x="66.26" y="29.5" width="3.29" height="2.3" fill="#ae5ad2"/><rect x="79.51" y="29.5" width="3.29" height="2.3" fill="#ae5ad2"/><rect x="87.08" y="29.5" width="3.29" height="2.3" fill="#ae5ad2"/><rect x="117.37" y="29.5" width="3.29" height="2.3" fill="#ae5ad2"/><rect x="15.14" y="33.0" width="3.29" height="2.3" fill="#ae5ad2"/><rect x="22.72" y="33.0" width="3.29" height="2.3" fill="#ae5ad2"/><rect x="75.72" y="33.0" width="3.29" height="2.3" fill="#ae5ad2"/><rect x="83.30" y="33.0" width="3.29" height="2.3" fill="#ae5ad2"/><rect x="96.55" y="33.0" width="3.29" height="2.3" fill="#ae5ad2"/><rect x="104.12" y="33.0" width="1.39" height="2.3" fill="#ae5ad2"/><rect x="13.25" y="36.4" width="1.39" height="2.3" fill="#ae5ad2"/><rect x="43.54" y="36.4" width="5.18" height="2.3" fill="#ae5ad2"/><rect x="71.94" y="36.4" width="3.29" height="2.3" fill="#ae5ad2"/><rect x="102.23" y="36.4" width="1.39" height="2.3" fill="#ae5ad2"/><rect x="11.36" y="38.1" width="1.39" height="2.3" fill="#ae5ad2"/><rect x="41.65" y="38.1" width="1.39" height="2.3" fill="#ae5ad2"/><rect x="49.22" y="38.1" width="3.29" height="2.3" fill="#ae5ad2"/><rect x="0.00" y="41.6" width="3.29" height="2.3" fill="#ae5ad2"/><rect x="30.29" y="41.6" width="3.29" height="2.3" fill="#ae5ad2"/><rect x="60.58" y="41.6" width="3.29" height="2.3" fill="#ae5ad2"/><rect x="53.01" y="45.0" width="3.29" height="2.3" fill="#ae5ad2"/><rect x="56.79" y="49.8" width="3.29" height="2.3" fill="#ae5ad2"/></svg></div>
<svg style="left:708.4px;top:407.2px;" width="10" height="11" viewBox="0 0 10 11"><rect x="5.6000000000000005" y="0.6" width="3.6" height="9.2" fill="#f0e8ff"/><rect x="0.4" y="0.6" width="6" height="1.7" fill="#f0e8ff"/><rect x="0.4" y="4.35" width="6" height="1.7" fill="#f0e8ff"/><rect x="0.4" y="8.1" width="6" height="1.7" fill="#f0e8ff"/><rect x="1.2000000000000002" y="2.8000000000000003" width="3.4" height="1" fill="#f0e8ff" opacity="0.55"/><rect x="1.2000000000000002" y="6.55" width="3.4" height="1" fill="#f0e8ff" opacity="0.55"/></svg>
<div class="t" style="left:720.2px;top:406px;font-size:10.9px;line-height:12px;color:#e4daf2;transform:scaleX(0.8765);">MAIN LEAD</div>
<div style="left:828px;top:405px;width:122px;height:53px;background:#5b4470;border-radius:3px;overflow:hidden;box-shadow:inset 0 1px 0 #6b5580,inset 1px 0 0 rgba(125,105,150,.35),inset -1px 0 0 rgba(40,20,60,.35);"><svg style="left:0;top:0" width="122.0" height="53"><rect x="106.02" y="15.8" width="3.29" height="2.3" fill="#ae5ad2"/><rect x="109.80" y="17.5" width="3.29" height="2.3" fill="#ae5ad2"/><rect x="35.97" y="24.4" width="3.29" height="2.3" fill="#ae5ad2"/><rect x="90.87" y="24.4" width="3.29" height="2.3" fill="#ae5ad2"/><rect x="113.59" y="24.4" width="3.29" height="2.3" fill="#ae5ad2"/><rect x="5.68" y="29.5" width="3.29" height="2.3" fill="#ae5ad2"/><rect x="18.93" y="29.5" width="3.29" height="2.3" fill="#ae5ad2"/><rect x="26.50" y="29.5" width="3.29" height="2.3" fill="#ae5ad2"/><rect x="66.26" y="29.5" width="3.29" height="2.3" fill="#ae5ad2"/><rect x="79.51" y="29.5" width="3.29" height="2.3" fill="#ae5ad2"/><rect x="87.08" y="29.5" width="3.29" height="2.3" fill="#ae5ad2"/><rect x="117.37" y="29.5" width="3.29" height="2.3" fill="#ae5ad2"/><rect x="15.14" y="33.0" width="3.29" height="2.3" fill="#ae5ad2"/><rect x="22.72" y="33.0" width="3.29" height="2.3" fill="#ae5ad2"/><rect x="75.72" y="33.0" width="3.29" height="2.3" fill="#ae5ad2"/><rect x="83.30" y="33.0" width="3.29" height="2.3" fill="#ae5ad2"/><rect x="96.55" y="33.0" width="3.29" height="2.3" fill="#ae5ad2"/><rect x="104.12" y="33.0" width="1.39" height="2.3" fill="#ae5ad2"/><rect x="13.25" y="36.4" width="1.39" height="2.3" fill="#ae5ad2"/><rect x="43.54" y="36.4" width="5.18" height="2.3" fill="#ae5ad2"/><rect x="71.94" y="36.4" width="3.29" height="2.3" fill="#ae5ad2"/><rect x="102.23" y="36.4" width="1.39" height="2.3" fill="#ae5ad2"/><rect x="11.36" y="38.1" width="1.39" height="2.3" fill="#ae5ad2"/><rect x="41.65" y="38.1" width="1.39" height="2.3" fill="#ae5ad2"/><rect x="49.22" y="38.1" width="3.29" height="2.3" fill="#ae5ad2"/><rect x="0.00" y="41.6" width="3.29" height="2.3" fill="#ae5ad2"/><rect x="30.29" y="41.6" width="3.29" height="2.3" fill="#ae5ad2"/><rect x="60.58" y="41.6" width="3.29" height="2.3" fill="#ae5ad2"/><rect x="53.01" y="45.0" width="3.29" height="2.3" fill="#ae5ad2"/><rect x="56.79" y="49.8" width="3.29" height="2.3" fill="#ae5ad2"/></svg></div>
<svg style="left:830.4px;top:407.2px;" width="10" height="11" viewBox="0 0 10 11"><rect x="5.6000000000000005" y="0.6" width="3.6" height="9.2" fill="#f0e8ff"/><rect x="0.4" y="0.6" width="6" height="1.7" fill="#f0e8ff"/><rect x="0.4" y="4.35" width="6" height="1.7" fill="#f0e8ff"/><rect x="0.4" y="8.1" width="6" height="1.7" fill="#f0e8ff"/><rect x="1.2000000000000002" y="2.8000000000000003" width="3.4" height="1" fill="#f0e8ff" opacity="0.55"/><rect x="1.2000000000000002" y="6.55" width="3.4" height="1" fill="#f0e8ff" opacity="0.55"/></svg>
<div class="t" style="left:842.2px;top:406px;font-size:10.9px;line-height:12px;color:#e4daf2;transform:scaleX(0.8765);">MAIN LEAD</div>
<div style="left:828px;top:459px;width:122px;height:53px;background:#5b4470;border-radius:3px;overflow:hidden;box-shadow:inset 0 1px 0 #6b5580,inset 1px 0 0 rgba(125,105,150,.35),inset -1px 0 0 rgba(40,20,60,.35);"><svg style="left:0;top:0" width="122.0" height="53"><rect x="18.93" y="15.9" width="3.29" height="2.3" fill="#ae5ad2"/><rect x="106.53" y="15.9" width="3.29" height="2.3" fill="#ae5ad2"/><rect x="22.72" y="18.1" width="3.29" height="2.3" fill="#ae5ad2"/><rect x="110.32" y="18.1" width="3.29" height="2.3" fill="#ae5ad2"/><rect x="5.68" y="22.0" width="3.29" height="2.3" fill="#ae5ad2"/><rect x="15.14" y="22.0" width="3.29" height="2.3" fill="#ae5ad2"/><rect x="87.08" y="22.0" width="3.29" height="2.3" fill="#ae5ad2"/><rect x="13.25" y="25.8" width="1.39" height="2.3" fill="#ae5ad2"/><rect x="26.50" y="25.8" width="3.29" height="2.3" fill="#ae5ad2"/><rect x="35.97" y="25.8" width="3.29" height="2.3" fill="#ae5ad2"/><rect x="43.71" y="25.8" width="1.01" height="2.3" fill="#ae5ad2"/><rect x="49.39" y="25.8" width="3.29" height="2.3" fill="#ae5ad2"/><rect x="90.87" y="25.8" width="3.29" height="2.3" fill="#ae5ad2"/><rect x="114.10" y="25.8" width="3.29" height="2.3" fill="#ae5ad2"/><rect x="11.36" y="31.8" width="1.39" height="2.3" fill="#ae5ad2"/><rect x="30.29" y="31.8" width="3.29" height="2.3" fill="#ae5ad2"/><rect x="41.65" y="31.8" width="1.01" height="2.3" fill="#ae5ad2"/><rect x="45.44" y="31.8" width="3.29" height="2.3" fill="#ae5ad2"/><rect x="57.48" y="31.8" width="0.80" height="2.3" fill="#ae5ad2"/><rect x="59.20" y="31.8" width="0.80" height="2.3" fill="#ae5ad2"/><rect x="79.51" y="31.8" width="3.29" height="2.3" fill="#ae5ad2"/><rect x="106.53" y="31.8" width="3.29" height="2.3" fill="#ae5ad2"/><rect x="114.10" y="31.8" width="3.29" height="2.3" fill="#ae5ad2"/><rect x="117.89" y="31.8" width="2.53" height="2.3" fill="#ae5ad2"/><rect x="53.18" y="35.9" width="3.29" height="2.3" fill="#ae5ad2"/><rect x="60.75" y="35.9" width="2.53" height="2.3" fill="#ae5ad2"/><rect x="72.11" y="35.9" width="3.29" height="2.3" fill="#ae5ad2"/><rect x="75.90" y="35.9" width="3.29" height="2.3" fill="#ae5ad2"/><rect x="83.30" y="35.9" width="3.29" height="2.3" fill="#ae5ad2"/><rect x="90.87" y="35.9" width="3.29" height="2.3" fill="#ae5ad2"/><rect x="97.07" y="35.9" width="3.29" height="2.3" fill="#ae5ad2"/><rect x="104.64" y="35.9" width="1.39" height="2.3" fill="#ae5ad2"/><rect x="110.32" y="35.9" width="3.29" height="2.3" fill="#ae5ad2"/><rect x="0.00" y="39.9" width="3.29" height="2.3" fill="#ae5ad2"/><rect x="79.68" y="39.9" width="3.29" height="2.3" fill="#ae5ad2"/><rect x="87.08" y="39.9" width="3.29" height="2.3" fill="#ae5ad2"/><rect x="102.23" y="39.9" width="1.39" height="2.3" fill="#ae5ad2"/><rect x="117.89" y="39.9" width="2.53" height="2.3" fill="#ae5ad2"/><rect x="66.09" y="42.0" width="2.91" height="2.3" fill="#ae5ad2"/><rect x="75.90" y="42.0" width="3.29" height="2.3" fill="#ae5ad2"/><rect x="83.30" y="42.0" width="3.29" height="2.3" fill="#ae5ad2"/><rect x="97.07" y="42.0" width="2.91" height="2.3" fill="#ae5ad2"/><rect x="103.95" y="45.9" width="1.39" height="2.3" fill="#ae5ad2"/><rect x="102.23" y="49.8" width="1.39" height="2.3" fill="#ae5ad2"/></svg></div>
<svg style="left:830.4px;top:461.2px;" width="10" height="11" viewBox="0 0 10 11"><rect x="5.6000000000000005" y="0.6" width="3.6" height="9.2" fill="#f0e8ff"/><rect x="0.4" y="0.6" width="6" height="1.7" fill="#f0e8ff"/><rect x="0.4" y="4.35" width="6" height="1.7" fill="#f0e8ff"/><rect x="0.4" y="8.1" width="6" height="1.7" fill="#f0e8ff"/><rect x="1.2000000000000002" y="2.8000000000000003" width="3.4" height="1" fill="#f0e8ff" opacity="0.55"/><rect x="1.2000000000000002" y="6.55" width="3.4" height="1" fill="#f0e8ff" opacity="0.55"/></svg>
<div class="t" style="left:842.2px;top:460px;font-size:10.9px;line-height:12px;color:#e4daf2;transform:scaleX(0.8427);">LEAD HARMONY</div>
<div style="left:464px;top:513px;width:122px;height:53px;background:#5b4470;border-radius:3px;overflow:hidden;box-shadow:inset 0 1px 0 #6b5580,inset 1px 0 0 rgba(125,105,150,.35),inset -1px 0 0 rgba(40,20,60,.35);"><svg style="left:0;top:0" width="122.0" height="53"><rect x="7.57" y="49.8" width="2.72" height="2.5" fill="#ae5ad2"/><rect x="22.72" y="49.8" width="2.72" height="2.5" fill="#ae5ad2"/><rect x="37.86" y="49.8" width="2.72" height="2.5" fill="#ae5ad2"/><rect x="53.01" y="49.8" width="2.72" height="2.5" fill="#ae5ad2"/><rect x="68.15" y="49.8" width="2.72" height="2.5" fill="#ae5ad2"/><rect x="83.30" y="49.8" width="2.72" height="2.5" fill="#ae5ad2"/><rect x="98.44" y="49.8" width="2.72" height="2.5" fill="#ae5ad2"/><rect x="113.59" y="49.8" width="2.72" height="2.5" fill="#ae5ad2"/></svg></div>
<svg style="left:466.4px;top:515.2px;" width="10" height="11" viewBox="0 0 10 11"><rect x="5.6000000000000005" y="0.6" width="3.6" height="9.2" fill="#f0e8ff"/><rect x="0.4" y="0.6" width="6" height="1.7" fill="#f0e8ff"/><rect x="0.4" y="4.35" width="6" height="1.7" fill="#f0e8ff"/><rect x="0.4" y="8.1" width="6" height="1.7" fill="#f0e8ff"/><rect x="1.2000000000000002" y="2.8000000000000003" width="3.4" height="1" fill="#f0e8ff" opacity="0.55"/><rect x="1.2000000000000002" y="6.55" width="3.4" height="1" fill="#f0e8ff" opacity="0.55"/></svg>
<div class="t" style="left:478.2px;top:514px;font-size:10.9px;line-height:12px;color:#e4daf2;transform:scaleX(1.0442);">plx_rdmp_clap_navy</div>
<div style="left:464px;top:567px;width:122px;height:53px;background:#5b4470;border-radius:3px;overflow:hidden;box-shadow:inset 0 1px 0 #6b5580,inset 1px 0 0 rgba(125,105,150,.35),inset -1px 0 0 rgba(40,20,60,.35);"><svg style="left:0;top:0" width="122.0" height="53"><rect x="3.79" y="49.8" width="2.72" height="2.5" fill="#ae5ad2"/><rect x="11.36" y="49.8" width="2.72" height="2.5" fill="#ae5ad2"/><rect x="18.93" y="49.8" width="2.72" height="2.5" fill="#ae5ad2"/><rect x="26.50" y="49.8" width="2.72" height="2.5" fill="#ae5ad2"/><rect x="34.08" y="49.8" width="2.72" height="2.5" fill="#ae5ad2"/><rect x="41.65" y="49.8" width="2.72" height="2.5" fill="#ae5ad2"/><rect x="49.22" y="49.8" width="2.72" height="2.5" fill="#ae5ad2"/><rect x="56.79" y="49.8" width="2.72" height="2.5" fill="#ae5ad2"/><rect x="64.37" y="49.8" width="2.72" height="2.5" fill="#ae5ad2"/><rect x="71.94" y="49.8" width="2.72" height="2.5" fill="#ae5ad2"/><rect x="79.51" y="49.8" width="2.72" height="2.5" fill="#ae5ad2"/><rect x="87.08" y="49.8" width="2.72" height="2.5" fill="#ae5ad2"/><rect x="94.66" y="49.8" width="2.72" height="2.5" fill="#ae5ad2"/><rect x="102.23" y="49.8" width="2.72" height="2.5" fill="#ae5ad2"/><rect x="109.80" y="49.8" width="2.72" height="2.5" fill="#ae5ad2"/><rect x="117.37" y="49.8" width="2.72" height="2.5" fill="#ae5ad2"/></svg></div>
<svg style="left:466.4px;top:569.2px;" width="10" height="11" viewBox="0 0 10 11"><rect x="5.6000000000000005" y="0.6" width="3.6" height="9.2" fill="#f0e8ff"/><rect x="0.4" y="0.6" width="6" height="1.7" fill="#f0e8ff"/><rect x="0.4" y="4.35" width="6" height="1.7" fill="#f0e8ff"/><rect x="0.4" y="8.1" width="6" height="1.7" fill="#f0e8ff"/><rect x="1.2000000000000002" y="2.8000000000000003" width="3.4" height="1" fill="#f0e8ff" opacity="0.55"/><rect x="1.2000000000000002" y="6.55" width="3.4" height="1" fill="#f0e8ff" opacity="0.55"/></svg>
<div class="t" style="left:478.2px;top:568px;font-size:10.9px;line-height:12px;color:#e4daf2;transform:scaleX(0.9331);">001_Hi_Hat.._Zenhiser</div>
<div style="left:464px;top:621px;width:122px;height:53px;background:#5b4470;border-radius:3px;overflow:hidden;box-shadow:inset 0 1px 0 #6b5580,inset 1px 0 0 rgba(125,105,150,.35),inset -1px 0 0 rgba(40,20,60,.35);"><svg style="left:0;top:0" width="122.0" height="53"><rect x="-0.30" y="49.4" width="0.9" height="2.2" fill="#9a58b8"/><rect x="7.27" y="49.4" width="0.9" height="2.2" fill="#9a58b8"/><rect x="14.84" y="49.4" width="0.9" height="2.2" fill="#9a58b8"/><rect x="22.42" y="49.4" width="0.9" height="2.2" fill="#9a58b8"/><rect x="29.99" y="49.4" width="0.9" height="2.2" fill="#9a58b8"/><rect x="37.56" y="49.4" width="0.9" height="2.2" fill="#9a58b8"/><rect x="45.14" y="49.4" width="0.9" height="2.2" fill="#9a58b8"/><rect x="52.71" y="49.4" width="0.9" height="2.2" fill="#9a58b8"/><rect x="60.28" y="49.4" width="0.9" height="2.2" fill="#9a58b8"/><rect x="67.85" y="49.4" width="0.9" height="2.2" fill="#9a58b8"/><rect x="75.42" y="49.4" width="0.9" height="2.2" fill="#9a58b8"/><rect x="83.00" y="49.4" width="0.9" height="2.2" fill="#9a58b8"/><rect x="90.57" y="49.4" width="0.9" height="2.2" fill="#9a58b8"/><rect x="98.14" y="49.4" width="0.9" height="2.2" fill="#9a58b8"/><rect x="105.72" y="49.4" width="0.9" height="2.2" fill="#9a58b8"/><rect x="113.29" y="49.4" width="0.9" height="2.2" fill="#9a58b8"/></svg></div>
<svg style="left:466.4px;top:623.2px;" width="10" height="11" viewBox="0 0 10 11"><rect x="5.6000000000000005" y="0.6" width="3.6" height="9.2" fill="#f0e8ff"/><rect x="0.4" y="0.6" width="6" height="1.7" fill="#f0e8ff"/><rect x="0.4" y="4.35" width="6" height="1.7" fill="#f0e8ff"/><rect x="0.4" y="8.1" width="6" height="1.7" fill="#f0e8ff"/><rect x="1.2000000000000002" y="2.8000000000000003" width="3.4" height="1" fill="#f0e8ff" opacity="0.55"/><rect x="1.2000000000000002" y="6.55" width="3.4" height="1" fill="#f0e8ff" opacity="0.55"/></svg>
<div class="t" style="left:478.2px;top:622px;font-size:10.9px;line-height:12px;color:#e4daf2;transform:scaleX(0.8675);">012_Kick_D..E_Zenhiser</div>
<div style="left:464px;top:675px;width:92px;height:53px;background:#5b4470;border-radius:3px;overflow:hidden;box-shadow:inset 0 1px 0 #6b5580,inset 1px 0 0 rgba(125,105,150,.35),inset -1px 0 0 rgba(40,20,60,.35);"><svg style="left:0;top:0" width="92.0" height="53"><rect x="0.00" y="35.8" width="29.69" height="3" fill="#ae5ad2"/><rect x="60.58" y="35.8" width="29.69" height="3" fill="#ae5ad2"/></svg></div>
<svg style="left:466.4px;top:677.2px;" width="10" height="11" viewBox="0 0 10 11"><rect x="5.6000000000000005" y="0.6" width="3.6" height="9.2" fill="#f0e8ff"/><rect x="0.4" y="0.6" width="6" height="1.7" fill="#f0e8ff"/><rect x="0.4" y="4.35" width="6" height="1.7" fill="#f0e8ff"/><rect x="0.4" y="8.1" width="6" height="1.7" fill="#f0e8ff"/><rect x="1.2000000000000002" y="2.8000000000000003" width="3.4" height="1" fill="#f0e8ff" opacity="0.55"/><rect x="1.2000000000000002" y="6.55" width="3.4" height="1" fill="#f0e8ff" opacity="0.55"/></svg>
<div class="t" style="left:478.2px;top:676px;font-size:10.9px;line-height:12px;color:#e4daf2;transform:scaleX(0.8309);">ZENOLOGY_2</div>
<div style="left:585px;top:513px;width:122px;height:53px;background:#5b4470;border-radius:3px;overflow:hidden;box-shadow:inset 0 1px 0 #6b5580,inset 1px 0 0 rgba(125,105,150,.35),inset -1px 0 0 rgba(40,20,60,.35);"><svg style="left:0;top:0" width="122.0" height="53"><rect x="7.57" y="49.8" width="2.72" height="2.5" fill="#ae5ad2"/><rect x="22.72" y="49.8" width="2.72" height="2.5" fill="#ae5ad2"/><rect x="37.86" y="49.8" width="2.72" height="2.5" fill="#ae5ad2"/><rect x="53.01" y="49.8" width="2.72" height="2.5" fill="#ae5ad2"/><rect x="68.15" y="49.8" width="2.72" height="2.5" fill="#ae5ad2"/><rect x="83.30" y="49.8" width="2.72" height="2.5" fill="#ae5ad2"/><rect x="98.44" y="49.8" width="2.72" height="2.5" fill="#ae5ad2"/><rect x="113.59" y="49.8" width="2.72" height="2.5" fill="#ae5ad2"/></svg></div>
<svg style="left:587.4px;top:515.2px;" width="10" height="11" viewBox="0 0 10 11"><rect x="5.6000000000000005" y="0.6" width="3.6" height="9.2" fill="#f0e8ff"/><rect x="0.4" y="0.6" width="6" height="1.7" fill="#f0e8ff"/><rect x="0.4" y="4.35" width="6" height="1.7" fill="#f0e8ff"/><rect x="0.4" y="8.1" width="6" height="1.7" fill="#f0e8ff"/><rect x="1.2000000000000002" y="2.8000000000000003" width="3.4" height="1" fill="#f0e8ff" opacity="0.55"/><rect x="1.2000000000000002" y="6.55" width="3.4" height="1" fill="#f0e8ff" opacity="0.55"/></svg>
<div class="t" style="left:599.2px;top:514px;font-size:10.9px;line-height:12px;color:#e4daf2;transform:scaleX(1.0442);">plx_rdmp_clap_navy</div>
<div style="left:585px;top:567px;width:122px;height:53px;background:#5b4470;border-radius:3px;overflow:hidden;box-shadow:inset 0 1px 0 #6b5580,inset 1px 0 0 rgba(125,105,150,.35),inset -1px 0 0 rgba(40,20,60,.35);"><svg style="left:0;top:0" width="122.0" height="53"><rect x="3.79" y="49.8" width="2.72" height="2.5" fill="#ae5ad2"/><rect x="11.36" y="49.8" width="2.72" height="2.5" fill="#ae5ad2"/><rect x="18.93" y="49.8" width="2.72" height="2.5" fill="#ae5ad2"/><rect x="26.50" y="49.8" width="2.72" height="2.5" fill="#ae5ad2"/><rect x="34.08" y="49.8" width="2.72" height="2.5" fill="#ae5ad2"/><rect x="41.65" y="49.8" width="2.72" height="2.5" fill="#ae5ad2"/><rect x="49.22" y="49.8" width="2.72" height="2.5" fill="#ae5ad2"/><rect x="56.79" y="49.8" width="2.72" height="2.5" fill="#ae5ad2"/><rect x="64.37" y="49.8" width="2.72" height="2.5" fill="#ae5ad2"/><rect x="71.94" y="49.8" width="2.72" height="2.5" fill="#ae5ad2"/><rect x="79.51" y="49.8" width="2.72" height="2.5" fill="#ae5ad2"/><rect x="87.08" y="49.8" width="2.72" height="2.5" fill="#ae5ad2"/><rect x="94.66" y="49.8" width="2.72" height="2.5" fill="#ae5ad2"/><rect x="102.23" y="49.8" width="2.72" height="2.5" fill="#ae5ad2"/><rect x="109.80" y="49.8" width="2.72" height="2.5" fill="#ae5ad2"/><rect x="117.37" y="49.8" width="2.72" height="2.5" fill="#ae5ad2"/></svg></div>
<svg style="left:587.4px;top:569.2px;" width="10" height="11" viewBox="0 0 10 11"><rect x="5.6000000000000005" y="0.6" width="3.6" height="9.2" fill="#f0e8ff"/><rect x="0.4" y="0.6" width="6" height="1.7" fill="#f0e8ff"/><rect x="0.4" y="4.35" width="6" height="1.7" fill="#f0e8ff"/><rect x="0.4" y="8.1" width="6" height="1.7" fill="#f0e8ff"/><rect x="1.2000000000000002" y="2.8000000000000003" width="3.4" height="1" fill="#f0e8ff" opacity="0.55"/><rect x="1.2000000000000002" y="6.55" width="3.4" height="1" fill="#f0e8ff" opacity="0.55"/></svg>
<div class="t" style="left:599.2px;top:568px;font-size:10.9px;line-height:12px;color:#e4daf2;transform:scaleX(0.9331);">001_Hi_Hat.._Zenhiser</div>
<div style="left:585px;top:621px;width:122px;height:53px;background:#5b4470;border-radius:3px;overflow:hidden;box-shadow:inset 0 1px 0 #6b5580,inset 1px 0 0 rgba(125,105,150,.35),inset -1px 0 0 rgba(40,20,60,.35);"><svg style="left:0;top:0" width="122.0" height="53"><rect x="-0.30" y="49.4" width="0.9" height="2.2" fill="#9a58b8"/><rect x="7.27" y="49.4" width="0.9" height="2.2" fill="#9a58b8"/><rect x="14.84" y="49.4" width="0.9" height="2.2" fill="#9a58b8"/><rect x="22.42" y="49.4" width="0.9" height="2.2" fill="#9a58b8"/><rect x="29.99" y="49.4" width="0.9" height="2.2" fill="#9a58b8"/><rect x="37.56" y="49.4" width="0.9" height="2.2" fill="#9a58b8"/><rect x="45.14" y="49.4" width="0.9" height="2.2" fill="#9a58b8"/><rect x="52.71" y="49.4" width="0.9" height="2.2" fill="#9a58b8"/><rect x="60.28" y="49.4" width="0.9" height="2.2" fill="#9a58b8"/><rect x="67.85" y="49.4" width="0.9" height="2.2" fill="#9a58b8"/><rect x="75.42" y="49.4" width="0.9" height="2.2" fill="#9a58b8"/><rect x="83.00" y="49.4" width="0.9" height="2.2" fill="#9a58b8"/><rect x="90.57" y="49.4" width="0.9" height="2.2" fill="#9a58b8"/><rect x="98.14" y="49.4" width="0.9" height="2.2" fill="#9a58b8"/><rect x="105.72" y="49.4" width="0.9" height="2.2" fill="#9a58b8"/><rect x="113.29" y="49.4" width="0.9" height="2.2" fill="#9a58b8"/></svg></div>
<svg style="left:587.4px;top:623.2px;" width="10" height="11" viewBox="0 0 10 11"><rect x="5.6000000000000005" y="0.6" width="3.6" height="9.2" fill="#f0e8ff"/><rect x="0.4" y="0.6" width="6" height="1.7" fill="#f0e8ff"/><rect x="0.4" y="4.35" width="6" height="1.7" fill="#f0e8ff"/><rect x="0.4" y="8.1" width="6" height="1.7" fill="#f0e8ff"/><rect x="1.2000000000000002" y="2.8000000000000003" width="3.4" height="1" fill="#f0e8ff" opacity="0.55"/><rect x="1.2000000000000002" y="6.55" width="3.4" height="1" fill="#f0e8ff" opacity="0.55"/></svg>
<div class="t" style="left:599.2px;top:622px;font-size:10.9px;line-height:12px;color:#e4daf2;transform:scaleX(0.8675);">012_Kick_D..E_Zenhiser</div>
<div style="left:585px;top:675px;width:92px;height:53px;background:#5b4470;border-radius:3px;overflow:hidden;box-shadow:inset 0 1px 0 #6b5580,inset 1px 0 0 rgba(125,105,150,.35),inset -1px 0 0 rgba(40,20,60,.35);"><svg style="left:0;top:0" width="92.0" height="53"><rect x="0.00" y="35.8" width="29.69" height="3" fill="#ae5ad2"/><rect x="60.58" y="35.8" width="29.69" height="3" fill="#ae5ad2"/></svg></div>
<svg style="left:587.4px;top:677.2px;" width="10" height="11" viewBox="0 0 10 11"><rect x="5.6000000000000005" y="0.6" width="3.6" height="9.2" fill="#f0e8ff"/><rect x="0.4" y="0.6" width="6" height="1.7" fill="#f0e8ff"/><rect x="0.4" y="4.35" width="6" height="1.7" fill="#f0e8ff"/><rect x="0.4" y="8.1" width="6" height="1.7" fill="#f0e8ff"/><rect x="1.2000000000000002" y="2.8000000000000003" width="3.4" height="1" fill="#f0e8ff" opacity="0.55"/><rect x="1.2000000000000002" y="6.55" width="3.4" height="1" fill="#f0e8ff" opacity="0.55"/></svg>
<div class="t" style="left:599.2px;top:676px;font-size:10.9px;line-height:12px;color:#e4daf2;transform:scaleX(0.8309);">ZENOLOGY_2</div>
<div style="left:706px;top:513px;width:123px;height:53px;background:#5b4470;border-radius:3px;overflow:hidden;box-shadow:inset 0 1px 0 #6b5580,inset 1px 0 0 rgba(125,105,150,.35),inset -1px 0 0 rgba(40,20,60,.35);"><svg style="left:0;top:0" width="123.0" height="53"><rect x="7.57" y="49.8" width="2.72" height="2.5" fill="#ae5ad2"/><rect x="22.72" y="49.8" width="2.72" height="2.5" fill="#ae5ad2"/><rect x="37.86" y="49.8" width="2.72" height="2.5" fill="#ae5ad2"/><rect x="53.01" y="49.8" width="2.72" height="2.5" fill="#ae5ad2"/><rect x="68.15" y="49.8" width="2.72" height="2.5" fill="#ae5ad2"/><rect x="83.30" y="49.8" width="2.72" height="2.5" fill="#ae5ad2"/><rect x="98.44" y="49.8" width="2.72" height="2.5" fill="#ae5ad2"/><rect x="113.59" y="49.8" width="2.72" height="2.5" fill="#ae5ad2"/></svg></div>
<svg style="left:708.4px;top:515.2px;" width="10" height="11" viewBox="0 0 10 11"><rect x="5.6000000000000005" y="0.6" width="3.6" height="9.2" fill="#f0e8ff"/><rect x="0.4" y="0.6" width="6" height="1.7" fill="#f0e8ff"/><rect x="0.4" y="4.35" width="6" height="1.7" fill="#f0e8ff"/><rect x="0.4" y="8.1" width="6" height="1.7" fill="#f0e8ff"/><rect x="1.2000000000000002" y="2.8000000000000003" width="3.4" height="1" fill="#f0e8ff" opacity="0.55"/><rect x="1.2000000000000002" y="6.55" width="3.4" height="1" fill="#f0e8ff" opacity="0.55"/></svg>
<div class="t" style="left:720.2px;top:514px;font-size:10.9px;line-height:12px;color:#e4daf2;transform:scaleX(1.0442);">plx_rdmp_clap_navy</div>
<div style="left:706px;top:567px;width:123px;height:53px;background:#5b4470;border-radius:3px;overflow:hidden;box-shadow:inset 0 1px 0 #6b5580,inset 1px 0 0 rgba(125,105,150,.35),inset -1px 0 0 rgba(40,20,60,.35);"><svg style="left:0;top:0" width="123.0" height="53"><rect x="3.79" y="49.8" width="2.72" height="2.5" fill="#ae5ad2"/><rect x="11.36" y="49.8" width="2.72" height="2.5" fill="#ae5ad2"/><rect x="18.93" y="49.8" width="2.72" height="2.5" fill="#ae5ad2"/><rect x="26.50" y="49.8" width="2.72" height="2.5" fill="#ae5ad2"/><rect x="34.08" y="49.8" width="2.72" height="2.5" fill="#ae5ad2"/><rect x="41.65" y="49.8" width="2.72" height="2.5" fill="#ae5ad2"/><rect x="49.22" y="49.8" width="2.72" height="2.5" fill="#ae5ad2"/><rect x="56.79" y="49.8" width="2.72" height="2.5" fill="#ae5ad2"/><rect x="64.37" y="49.8" width="2.72" height="2.5" fill="#ae5ad2"/><rect x="71.94" y="49.8" width="2.72" height="2.5" fill="#ae5ad2"/><rect x="79.51" y="49.8" width="2.72" height="2.5" fill="#ae5ad2"/><rect x="87.08" y="49.8" width="2.72" height="2.5" fill="#ae5ad2"/><rect x="94.66" y="49.8" width="2.72" height="2.5" fill="#ae5ad2"/><rect x="102.23" y="49.8" width="2.72" height="2.5" fill="#ae5ad2"/><rect x="109.80" y="49.8" width="2.72" height="2.5" fill="#ae5ad2"/><rect x="117.37" y="49.8" width="2.72" height="2.5" fill="#ae5ad2"/></svg></div>
<svg style="left:708.4px;top:569.2px;" width="10" height="11" viewBox="0 0 10 11"><rect x="5.6000000000000005" y="0.6" width="3.6" height="9.2" fill="#f0e8ff"/><rect x="0.4" y="0.6" width="6" height="1.7" fill="#f0e8ff"/><rect x="0.4" y="4.35" width="6" height="1.7" fill="#f0e8ff"/><rect x="0.4" y="8.1" width="6" height="1.7" fill="#f0e8ff"/><rect x="1.2000000000000002" y="2.8000000000000003" width="3.4" height="1" fill="#f0e8ff" opacity="0.55"/><rect x="1.2000000000000002" y="6.55" width="3.4" height="1" fill="#f0e8ff" opacity="0.55"/></svg>
<div class="t" style="left:720.2px;top:568px;font-size:10.9px;line-height:12px;color:#e4daf2;transform:scaleX(0.8880);">001_Hi_Hat..Y_Zenhiser</div>
<div style="left:706px;top:621px;width:123px;height:53px;background:#5b4470;border-radius:3px;overflow:hidden;box-shadow:inset 0 1px 0 #6b5580,inset 1px 0 0 rgba(125,105,150,.35),inset -1px 0 0 rgba(40,20,60,.35);"><svg style="left:0;top:0" width="123.0" height="53"><rect x="-0.30" y="49.4" width="0.9" height="2.2" fill="#9a58b8"/><rect x="7.27" y="49.4" width="0.9" height="2.2" fill="#9a58b8"/><rect x="14.84" y="49.4" width="0.9" height="2.2" fill="#9a58b8"/><rect x="22.42" y="49.4" width="0.9" height="2.2" fill="#9a58b8"/><rect x="29.99" y="49.4" width="0.9" height="2.2" fill="#9a58b8"/><rect x="37.56" y="49.4" width="0.9" height="2.2" fill="#9a58b8"/><rect x="45.14" y="49.4" width="0.9" height="2.2" fill="#9a58b8"/><rect x="52.71" y="49.4" width="0.9" height="2.2" fill="#9a58b8"/><rect x="60.28" y="49.4" width="0.9" height="2.2" fill="#9a58b8"/><rect x="67.85" y="49.4" width="0.9" height="2.2" fill="#9a58b8"/><rect x="75.42" y="49.4" width="0.9" height="2.2" fill="#9a58b8"/><rect x="83.00" y="49.4" width="0.9" height="2.2" fill="#9a58b8"/><rect x="90.57" y="49.4" width="0.9" height="2.2" fill="#9a58b8"/><rect x="98.14" y="49.4" width="0.9" height="2.2" fill="#9a58b8"/><rect x="105.72" y="49.4" width="0.9" height="2.2" fill="#9a58b8"/><rect x="113.29" y="49.4" width="0.9" height="2.2" fill="#9a58b8"/></svg></div>
<svg style="left:708.4px;top:623.2px;" width="10" height="11" viewBox="0 0 10 11"><rect x="5.6000000000000005" y="0.6" width="3.6" height="9.2" fill="#f0e8ff"/><rect x="0.4" y="0.6" width="6" height="1.7" fill="#f0e8ff"/><rect x="0.4" y="4.35" width="6" height="1.7" fill="#f0e8ff"/><rect x="0.4" y="8.1" width="6" height="1.7" fill="#f0e8ff"/><rect x="1.2000000000000002" y="2.8000000000000003" width="3.4" height="1" fill="#f0e8ff" opacity="0.55"/><rect x="1.2000000000000002" y="6.55" width="3.4" height="1" fill="#f0e8ff" opacity="0.55"/></svg>
<div class="t" style="left:720.2px;top:622px;font-size:10.9px;line-height:12px;color:#e4daf2;transform:scaleX(0.8675);">012_Kick_D..E_Zenhiser</div>
<div style="left:706px;top:675px;width:92px;height:53px;background:#5b4470;border-radius:3px;overflow:hidden;box-shadow:inset 0 1px 0 #6b5580,inset 1px 0 0 rgba(125,105,150,.35),inset -1px 0 0 rgba(40,20,60,.35);"><svg style="left:0;top:0" width="92.0" height="53"><rect x="0.00" y="35.8" width="29.69" height="3" fill="#ae5ad2"/><rect x="60.58" y="35.8" width="29.69" height="3" fill="#ae5ad2"/></svg></div>
<svg style="left:708.4px;top:677.2px;" width="10" height="11" viewBox="0 0 10 11"><rect x="5.6000000000000005" y="0.6" width="3.6" height="9.2" fill="#f0e8ff"/><rect x="0.4" y="0.6" width="6" height="1.7" fill="#f0e8ff"/><rect x="0.4" y="4.35" width="6" height="1.7" fill="#f0e8ff"/><rect x="0.4" y="8.1" width="6" height="1.7" fill="#f0e8ff"/><rect x="1.2000000000000002" y="2.8000000000000003" width="3.4" height="1" fill="#f0e8ff" opacity="0.55"/><rect x="1.2000000000000002" y="6.55" width="3.4" height="1" fill="#f0e8ff" opacity="0.55"/></svg>
<div class="t" style="left:720.2px;top:676px;font-size:10.9px;line-height:12px;color:#e4daf2;transform:scaleX(0.8309);">ZENOLOGY_2</div>
<div style="left:828px;top:513px;width:122px;height:53px;background:#5b4470;border-radius:3px;overflow:hidden;box-shadow:inset 0 1px 0 #6b5580,inset 1px 0 0 rgba(125,105,150,.35),inset -1px 0 0 rgba(40,20,60,.35);"><svg style="left:0;top:0" width="122.0" height="53"><rect x="7.57" y="49.8" width="2.72" height="2.5" fill="#ae5ad2"/><rect x="22.72" y="49.8" width="2.72" height="2.5" fill="#ae5ad2"/><rect x="37.86" y="49.8" width="2.72" height="2.5" fill="#ae5ad2"/><rect x="53.01" y="49.8" width="2.72" height="2.5" fill="#ae5ad2"/><rect x="68.15" y="49.8" width="2.72" height="2.5" fill="#ae5ad2"/><rect x="83.30" y="49.8" width="2.72" height="2.5" fill="#ae5ad2"/><rect x="98.44" y="49.8" width="2.72" height="2.5" fill="#ae5ad2"/><rect x="113.59" y="49.8" width="2.72" height="2.5" fill="#ae5ad2"/></svg></div>
<svg style="left:830.4px;top:515.2px;" width="10" height="11" viewBox="0 0 10 11"><rect x="5.6000000000000005" y="0.6" width="3.6" height="9.2" fill="#f0e8ff"/><rect x="0.4" y="0.6" width="6" height="1.7" fill="#f0e8ff"/><rect x="0.4" y="4.35" width="6" height="1.7" fill="#f0e8ff"/><rect x="0.4" y="8.1" width="6" height="1.7" fill="#f0e8ff"/><rect x="1.2000000000000002" y="2.8000000000000003" width="3.4" height="1" fill="#f0e8ff" opacity="0.55"/><rect x="1.2000000000000002" y="6.55" width="3.4" height="1" fill="#f0e8ff" opacity="0.55"/></svg>
<div class="t" style="left:842.2px;top:514px;font-size:10.9px;line-height:12px;color:#e4daf2;transform:scaleX(1.0442);">plx_rdmp_clap_navy</div>
<div style="left:828px;top:567px;width:122px;height:53px;background:#5b4470;border-radius:3px;overflow:hidden;box-shadow:inset 0 1px 0 #6b5580,inset 1px 0 0 rgba(125,105,150,.35),inset -1px 0 0 rgba(40,20,60,.35);"><svg style="left:0;top:0" width="122.0" height="53"><rect x="3.79" y="49.8" width="2.72" height="2.5" fill="#ae5ad2"/><rect x="11.36" y="49.8" width="2.72" height="2.5" fill="#ae5ad2"/><rect x="18.93" y="49.8" width="2.72" height="2.5" fill="#ae5ad2"/><rect x="26.50" y="49.8" width="2.72" height="2.5" fill="#ae5ad2"/><rect x="34.08" y="49.8" width="2.72" height="2.5" fill="#ae5ad2"/><rect x="41.65" y="49.8" width="2.72" height="2.5" fill="#ae5ad2"/><rect x="49.22" y="49.8" width="2.72" height="2.5" fill="#ae5ad2"/><rect x="56.79" y="49.8" width="2.72" height="2.5" fill="#ae5ad2"/><rect x="64.37" y="49.8" width="2.72" height="2.5" fill="#ae5ad2"/><rect x="71.94" y="49.8" width="2.72" height="2.5" fill="#ae5ad2"/><rect x="79.51" y="49.8" width="2.72" height="2.5" fill="#ae5ad2"/><rect x="87.08" y="49.8" width="2.72" height="2.5" fill="#ae5ad2"/><rect x="94.66" y="49.8" width="2.72" height="2.5" fill="#ae5ad2"/><rect x="102.23" y="49.8" width="2.72" height="2.5" fill="#ae5ad2"/><rect x="109.80" y="49.8" width="2.72" height="2.5" fill="#ae5ad2"/><rect x="117.37" y="49.8" width="2.72" height="2.5" fill="#ae5ad2"/></svg></div>
<svg style="left:830.4px;top:569.2px;" width="10" height="11" viewBox="0 0 10 11"><rect x="5.6000000000000005" y="0.6" width="3.6" height="9.2" fill="#f0e8ff"/><rect x="0.4" y="0.6" width="6" height="1.7" fill="#f0e8ff"/><rect x="0.4" y="4.35" width="6" height="1.7" fill="#f0e8ff"/><rect x="0.4" y="8.1" width="6" height="1.7" fill="#f0e8ff"/><rect x="1.2000000000000002" y="2.8000000000000003" width="3.4" height="1" fill="#f0e8ff" opacity="0.55"/><rect x="1.2000000000000002" y="6.55" width="3.4" height="1" fill="#f0e8ff" opacity="0.55"/></svg>
<div class="t" style="left:842.2px;top:568px;font-size:10.9px;line-height:12px;color:#e4daf2;transform:scaleX(0.9331);">001_Hi_Hat.._Zenhiser</div>
<div style="left:828px;top:621px;width:122px;height:53px;background:#5b4470;border-radius:3px;overflow:hidden;box-shadow:inset 0 1px 0 #6b5580,inset 1px 0 0 rgba(125,105,150,.35),inset -1px 0 0 rgba(40,20,60,.35);"><svg style="left:0;top:0" width="122.0" height="53"><rect x="-0.30" y="49.4" width="0.9" height="2.2" fill="#9a58b8"/><rect x="7.27" y="49.4" width="0.9" height="2.2" fill="#9a58b8"/><rect x="14.84" y="49.4" width="0.9" height="2.2" fill="#9a58b8"/><rect x="22.42" y="49.4" width="0.9" height="2.2" fill="#9a58b8"/><rect x="29.99" y="49.4" width="0.9" height="2.2" fill="#9a58b8"/><rect x="37.56" y="49.4" width="0.9" height="2.2" fill="#9a58b8"/><rect x="45.14" y="49.4" width="0.9" height="2.2" fill="#9a58b8"/><rect x="52.71" y="49.4" width="0.9" height="2.2" fill="#9a58b8"/><rect x="60.28" y="49.4" width="0.9" height="2.2" fill="#9a58b8"/><rect x="67.85" y="49.4" width="0.9" height="2.2" fill="#9a58b8"/><rect x="75.42" y="49.4" width="0.9" height="2.2" fill="#9a58b8"/><rect x="83.00" y="49.4" width="0.9" height="2.2" fill="#9a58b8"/><rect x="90.57" y="49.4" width="0.9" height="2.2" fill="#9a58b8"/><rect x="98.14" y="49.4" width="0.9" height="2.2" fill="#9a58b8"/><rect x="105.72" y="49.4" width="0.9" height="2.2" fill="#9a58b8"/><rect x="113.29" y="49.4" width="0.9" height="2.2" fill="#9a58b8"/></svg></div>
<svg style="left:830.4px;top:623.2px;" width="10" height="11" viewBox="0 0 10 11"><rect x="5.6000000000000005" y="0.6" width="3.6" height="9.2" fill="#f0e8ff"/><rect x="0.4" y="0.6" width="6" height="1.7" fill="#f0e8ff"/><rect x="0.4" y="4.35" width="6" height="1.7" fill="#f0e8ff"/><rect x="0.4" y="8.1" width="6" height="1.7" fill="#f0e8ff"/><rect x="1.2000000000000002" y="2.8000000000000003" width="3.4" height="1" fill="#f0e8ff" opacity="0.55"/><rect x="1.2000000000000002" y="6.55" width="3.4" height="1" fill="#f0e8ff" opacity="0.55"/></svg>
<div class="t" style="left:842.2px;top:622px;font-size:10.9px;line-height:12px;color:#e4daf2;transform:scaleX(0.8675);">012_Kick_D..E_Zenhiser</div>
<div style="left:828px;top:675px;width:91px;height:53px;background:#5b4470;border-radius:3px;overflow:hidden;box-shadow:inset 0 1px 0 #6b5580,inset 1px 0 0 rgba(125,105,150,.35),inset -1px 0 0 rgba(40,20,60,.35);"><svg style="left:0;top:0" width="91.0" height="53"><rect x="0.00" y="35.8" width="29.69" height="3" fill="#ae5ad2"/><rect x="60.58" y="35.8" width="29.69" height="3" fill="#ae5ad2"/></svg></div>
<svg style="left:830.4px;top:677.2px;" width="10" height="11" viewBox="0 0 10 11"><rect x="5.6000000000000005" y="0.6" width="3.6" height="9.2" fill="#f0e8ff"/><rect x="0.4" y="0.6" width="6" height="1.7" fill="#f0e8ff"/><rect x="0.4" y="4.35" width="6" height="1.7" fill="#f0e8ff"/><rect x="0.4" y="8.1" width="6" height="1.7" fill="#f0e8ff"/><rect x="1.2000000000000002" y="2.8000000000000003" width="3.4" height="1" fill="#f0e8ff" opacity="0.55"/><rect x="1.2000000000000002" y="6.55" width="3.4" height="1" fill="#f0e8ff" opacity="0.55"/></svg>
<div class="t" style="left:842.2px;top:676px;font-size:10.9px;line-height:12px;color:#e4daf2;transform:scaleX(0.8309);">ZENOLOGY_2</div>
<div style="left:343px;top:729px;width:122px;height:53px;background:#422e55;border-radius:3px;overflow:hidden;box-shadow:inset 0 1px 0 #54406a,inset 1px 0 0 rgba(125,105,150,.35),inset -1px 0 0 rgba(40,20,60,.35);"><svg style="left:0;top:0" width="122.0" height="53"><rect x="0.0" y="15.9" width="6.9" height="1.1" fill="#a552c8" opacity="0.75"/><rect x="23.2" y="15.9" width="6.9" height="1.1" fill="#a552c8" opacity="0.75"/><rect x="60.9" y="15.9" width="6.9" height="1.1" fill="#a552c8" opacity="0.75"/><rect x="106.4" y="15.9" width="3.0" height="1.1" fill="#a552c8" opacity="0.75"/><rect x="83.7" y="16.6" width="6.9" height="1.1" fill="#a552c8" opacity="0.75"/><rect x="110.3" y="16.6" width="3.0" height="1.1" fill="#a552c8" opacity="0.75"/><rect x="15.4" y="17.9" width="6.9" height="1.1" fill="#a552c8" opacity="0.75"/><rect x="75.9" y="17.9" width="6.9" height="1.1" fill="#a552c8" opacity="0.75"/><rect x="11.6" y="19.2" width="6.9" height="1.1" fill="#a552c8" opacity="0.75"/><rect x="36.0" y="19.2" width="3.9" height="1.1" fill="#a552c8" opacity="0.75"/><rect x="91.0" y="19.2" width="3.4" height="1.1" fill="#a552c8" opacity="0.75"/><rect x="114.1" y="19.2" width="3.0" height="1.1" fill="#a552c8" opacity="0.75"/><rect x="6.0" y="21.3" width="3.4" height="1.1" fill="#a552c8" opacity="0.75"/><rect x="19.3" y="21.3" width="3.4" height="1.1" fill="#a552c8" opacity="0.75"/><rect x="27.0" y="21.3" width="10.3" height="1.1" fill="#a552c8" opacity="0.75"/><rect x="66.5" y="21.3" width="3.4" height="1.1" fill="#a552c8" opacity="0.75"/><rect x="79.8" y="21.3" width="3.4" height="1.1" fill="#a552c8" opacity="0.75"/><rect x="87.5" y="21.3" width="10.3" height="1.1" fill="#a552c8" opacity="0.75"/><rect x="118.0" y="21.3" width="3.0" height="1.1" fill="#a552c8" opacity="0.75"/><rect x="15.4" y="23.0" width="3.4" height="1.1" fill="#a552c8" opacity="0.75"/><rect x="23.2" y="23.0" width="3.0" height="1.1" fill="#a552c8" opacity="0.75"/><rect x="53.2" y="23.0" width="6.9" height="1.1" fill="#a552c8" opacity="0.75"/><rect x="75.9" y="23.0" width="3.4" height="1.1" fill="#a552c8" opacity="0.75"/><rect x="83.7" y="23.0" width="3.0" height="1.1" fill="#a552c8" opacity="0.75"/><rect x="97.4" y="23.0" width="2.6" height="1.1" fill="#a552c8" opacity="0.75"/><rect x="114.1" y="23.0" width="6.9" height="1.1" fill="#a552c8" opacity="0.75"/><rect x="12.0" y="24.2" width="3.0" height="1.1" fill="#a552c8" opacity="0.7"/><rect x="42.0" y="24.2" width="10.7" height="1.1" fill="#a552c8" opacity="0.7"/><rect x="72.1" y="24.2" width="3.4" height="1.1" fill="#a552c8" opacity="0.7"/><rect x="102.5" y="24.2" width="3.4" height="1.1" fill="#a552c8" opacity="0.7"/><rect x="106.4" y="24.2" width="6.4" height="1.1" fill="#a552c8" opacity="0.7"/><rect x="0.0" y="26.0" width="3.9" height="1.2" fill="#a552c8" opacity="0.8"/><rect x="6.0" y="26.0" width="16.3" height="1.2" fill="#a552c8" opacity="0.8"/><rect x="30.5" y="26.0" width="3.4" height="1.2" fill="#a552c8" opacity="0.8"/><rect x="60.9" y="26.0" width="21.9" height="1.2" fill="#a552c8" opacity="0.8"/><rect x="53.2" y="27.6" width="3.9" height="1.1" fill="#a552c8" opacity="0.8"/><rect x="106.4" y="27.6" width="14.6" height="1.1" fill="#a552c8" opacity="0.8"/><rect x="4.3" y="29.3" width="56.6" height="1.5" fill="#a552c8" opacity="1"/><rect x="64.8" y="29.3" width="56.2" height="1.5" fill="#a552c8" opacity="1"/><rect x="15.4" y="30.9" width="14.6" height="1.3" fill="#a552c8" opacity="0.95"/><rect x="45.9" y="30.9" width="15.0" height="1.3" fill="#a552c8" opacity="0.95"/><rect x="75.9" y="30.9" width="15.0" height="1.3" fill="#a552c8" opacity="0.95"/><rect x="106.4" y="30.9" width="14.6" height="1.3" fill="#a552c8" opacity="0.95"/><rect x="2.1" y="32.4" width="12.4" height="1.2" fill="#a552c8" opacity="0.9"/><rect x="34.3" y="32.4" width="12.4" height="1.2" fill="#a552c8" opacity="0.9"/><rect x="48.5" y="32.4" width="8.6" height="1.2" fill="#a552c8" opacity="0.9"/><rect x="62.6" y="32.4" width="12.4" height="1.2" fill="#a552c8" opacity="0.9"/><rect x="94.8" y="32.4" width="12.9" height="1.2" fill="#a552c8" opacity="0.9"/><rect x="110.3" y="32.4" width="8.6" height="1.2" fill="#a552c8" opacity="0.9"/><rect x="18.9" y="33.5" width="13.3" height="1.2" fill="#a552c8" opacity="0.9"/><rect x="45.9" y="33.5" width="12.9" height="1.2" fill="#a552c8" opacity="0.9"/><rect x="79.8" y="33.5" width="12.9" height="1.2" fill="#a552c8" opacity="0.9"/><rect x="106.4" y="33.5" width="12.4" height="1.2" fill="#a552c8" opacity="0.9"/><rect x="0.0" y="34.5" width="16.3" height="1.4" fill="#a552c8" opacity="1"/><rect x="32.6" y="34.5" width="15.0" height="1.4" fill="#a552c8" opacity="1"/><rect x="60.9" y="34.5" width="15.9" height="1.4" fill="#a552c8" opacity="1"/><rect x="93.1" y="34.5" width="15.0" height="1.4" fill="#a552c8" opacity="1"/><rect x="17.2" y="35.8" width="15.0" height="1.4" fill="#a552c8" opacity="0.95"/><rect x="47.6" y="35.8" width="17.2" height="1.4" fill="#a552c8" opacity="0.95"/><rect x="78.1" y="35.8" width="15.0" height="1.4" fill="#a552c8" opacity="0.95"/><rect x="108.5" y="35.8" width="12.4" height="1.4" fill="#a552c8" opacity="0.95"/><rect x="30.5" y="37.2" width="14.2" height="1.2" fill="#a552c8" opacity="0.9"/><rect x="91.0" y="37.2" width="14.2" height="1.2" fill="#a552c8" opacity="0.9"/><rect x="15.4" y="37.9" width="14.2" height="1.5" fill="#a552c8" opacity="0.95"/><rect x="45.9" y="37.9" width="15.0" height="1.5" fill="#a552c8" opacity="0.95"/><rect x="75.9" y="37.9" width="14.2" height="1.5" fill="#a552c8" opacity="0.95"/><rect x="106.4" y="37.9" width="14.6" height="1.5" fill="#a552c8" opacity="0.95"/><rect x="45.9" y="43.9" width="15.0" height="1.5" fill="#a552c8" opacity="0.95"/><rect x="106.4" y="43.9" width="14.6" height="1.5" fill="#a552c8" opacity="0.95"/><rect x="15.4" y="45.7" width="16.7" height="1.3" fill="#a552c8" opacity="0.95"/><rect x="75.9" y="45.7" width="16.3" height="1.3" fill="#a552c8" opacity="0.95"/><rect x="31.3" y="45.4" width="14.2" height="1.2" fill="#a552c8" opacity="0.9"/><rect x="91.4" y="45.4" width="14.6" height="1.2" fill="#a552c8" opacity="0.9"/><rect x="0.0" y="50.5" width="15.0" height="1.6" fill="#a552c8" opacity="1"/><rect x="60.9" y="50.5" width="14.2" height="1.6" fill="#a552c8" opacity="1"/></svg></div>
<svg style="left:345.4px;top:731.2px;" width="10" height="11" viewBox="0 0 10 11"><rect x="5.6000000000000005" y="0.6" width="3.6" height="9.2" fill="#f0e8ff"/><rect x="0.4" y="0.6" width="6" height="1.7" fill="#f0e8ff"/><rect x="0.4" y="4.35" width="6" height="1.7" fill="#f0e8ff"/><rect x="0.4" y="8.1" width="6" height="1.7" fill="#f0e8ff"/><rect x="1.2000000000000002" y="2.8000000000000003" width="3.4" height="1" fill="#f0e8ff" opacity="0.55"/><rect x="1.2000000000000002" y="6.55" width="3.4" height="1" fill="#f0e8ff" opacity="0.55"/></svg>
<div class="t" style="left:357.2px;top:730px;font-size:10.9px;line-height:12px;color:#d6c8e8;transform:scaleX(1.0245);">Pattern 11</div>
<div style="left:435px;top:783px;width:122px;height:53px;background:linear-gradient(#6f5775,#65506e);border-radius:3px;overflow:hidden;box-shadow:inset 0 1px 0 #7d6684,inset 1px 0 0 rgba(125,105,150,.35),inset -1px 0 0 rgba(40,20,60,.35);"><svg style="left:0;top:0" width="122.0" height="53"><path d="M0.0,33.3 L1.0,33.3 L2.0,33.3 L3.0,33.3 L4.0,33.3 L5.1,33.3 L6.1,33.3 L7.1,33.3 L8.1,33.3 L9.1,33.3 L10.1,33.3 L11.1,33.3 L12.1,33.3 L13.2,33.3 L14.2,33.3 L15.2,33.3 L16.2,33.3 L17.2,33.3 L18.2,33.1 L19.2,33.0 L20.2,32.1 L21.2,31.7 L22.3,31.0 L23.3,30.4 L24.3,28.8 L25.3,27.3 L26.3,25.1 L27.3,23.9 L28.3,20.9 L29.3,18.2 L30.4,22.5 L31.4,24.1 L32.4,27.2 L33.4,26.5 L34.4,29.2 L35.4,29.0 L36.4,29.7 L37.4,29.1 L38.4,29.9 L39.5,30.1 L40.5,30.3 L41.5,31.0 L42.5,31.5 L43.5,31.4 L44.5,32.0 L45.5,31.8 L46.5,32.4 L47.5,32.4 L48.6,32.2 L49.6,32.5 L50.6,32.6 L51.6,32.7 L52.6,32.7 L53.6,33.0 L54.6,33.1 L55.6,32.9 L56.7,33.1 L57.7,33.2 L58.7,33.3 L59.7,33.3 L60.7,33.3 L61.7,33.3 L62.7,33.3 L63.7,33.3 L64.7,33.3 L65.8,33.3 L66.8,33.3 L67.8,33.3 L68.8,33.3 L69.8,33.3 L70.8,33.3 L71.8,33.3 L72.8,33.3 L73.9,33.3 L74.9,33.3 L75.9,33.3 L76.9,33.3 L77.9,33.3 L78.9,33.3 L79.9,33.3 L80.9,33.3 L81.9,33.3 L83.0,33.3 L84.0,33.3 L85.0,33.3 L86.0,33.3 L87.0,33.3 L88.0,33.3 L89.0,33.3 L90.0,33.3 L91.0,33.3 L92.1,33.3 L93.1,33.3 L94.1,33.3 L95.1,33.3 L96.1,33.3 L97.1,33.3 L98.1,33.3 L99.1,33.3 L100.2,33.3 L101.2,33.3 L102.2,33.3 L103.2,33.3 L104.2,33.3 L105.2,33.3 L106.2,33.3 L107.2,33.3 L108.2,33.3 L109.3,33.3 L110.3,33.3 L111.3,33.3 L112.3,33.3 L113.3,33.3 L114.3,33.3 L115.3,33.3 L116.3,33.3 L117.4,33.3 L118.4,33.3 L119.4,33.3 L120.4,33.3 L121.4,33.3 L121.4,34.2 L120.4,34.3 L119.4,34.2 L118.4,34.3 L117.4,34.2 L116.3,34.3 L115.3,34.3 L114.3,34.3 L113.3,34.2 L112.3,34.3 L111.3,34.3 L110.3,34.2 L109.3,34.3 L108.2,34.3 L107.2,34.2 L106.2,34.3 L105.2,34.3 L104.2,34.3 L103.2,34.3 L102.2,34.2 L101.2,34.2 L100.2,34.2 L99.1,34.2 L98.1,34.3 L97.1,34.3 L96.1,34.2 L95.1,34.3 L94.1,34.3 L93.1,34.3 L92.1,34.2 L91.0,34.2 L90.0,34.2 L89.0,34.2 L88.0,34.2 L87.0,34.2 L86.0,34.3 L85.0,34.2 L84.0,34.3 L83.0,34.2 L81.9,34.2 L80.9,34.2 L79.9,34.3 L78.9,34.2 L77.9,34.2 L76.9,34.2 L75.9,34.2 L74.9,34.2 L73.9,34.2 L72.8,34.2 L71.8,34.3 L70.8,34.2 L69.8,34.2 L68.8,34.3 L67.8,34.2 L66.8,34.2 L65.8,34.2 L64.7,34.3 L63.7,34.2 L62.7,34.3 L61.7,34.2 L60.7,34.3 L59.7,34.3 L58.7,34.3 L57.7,34.4 L56.7,34.4 L55.6,34.7 L54.6,34.5 L53.6,34.7 L52.6,34.9 L51.6,34.9 L50.6,35.1 L49.6,35.1 L48.6,35.4 L47.5,35.4 L46.5,35.3 L45.5,35.6 L44.5,35.6 L43.5,36.0 L42.5,35.9 L41.5,36.8 L40.5,37.7 L39.5,37.3 L38.4,37.3 L37.4,38.1 L36.4,38.1 L35.4,38.3 L34.4,38.7 L33.4,41.8 L32.4,39.8 L31.4,43.7 L30.4,44.5 L29.3,49.6 L28.3,47.9 L27.3,43.0 L26.3,43.4 L25.3,40.9 L24.3,39.2 L23.3,37.3 L22.3,36.5 L21.2,35.8 L20.2,35.5 L19.2,34.5 L18.2,34.4 L17.2,34.3 L16.2,34.3 L15.2,34.3 L14.2,34.3 L13.2,34.2 L12.1,34.2 L11.1,34.3 L10.1,34.2 L9.1,34.3 L8.1,34.3 L7.1,34.2 L6.1,34.2 L5.1,34.2 L4.0,34.2 L3.0,34.3 L2.0,34.2 L1.0,34.3 L0.0,34.3Z" fill="#cdb6d4"/></svg></div>
<svg style="left:437px;top:785.6px;" width="11" height="10" viewBox="0 0 11 10"><path d="M1.6,1.6 v6.8 M1.6,5 h8 M4.4,2.2 l3,2.8 -3,2.8 M6.6,2.4 l2.8,2.6 -2.8,2.6" fill="none" stroke="#f0ecf6" stroke-width="1.1"/></svg>
<div class="t" style="left:449.4px;top:784px;font-size:10.9px;line-height:12px;color:#eee4f4;transform:scaleX(0.9233);">@prodgrad..oosh Riser</div>
<div style="left:397px;top:837px;width:68px;height:53px;background:#4f6360;border-radius:3px;overflow:hidden;box-shadow:inset 0 1px 0 #6c827e,inset 1px 0 0 rgba(125,105,150,.35),inset -1px 0 0 rgba(40,20,60,.35);"><svg style="left:0;top:0" width="68.0" height="53"><rect x="0" y="0" width="67.6" height="14.6" fill="#5c716d"/><path d="M0.0,34.0 L1.0,33.9 L2.0,33.8 L3.0,33.7 L4.0,33.5 L5.0,33.4 L6.0,33.1 L7.0,33.0 L8.0,32.9 L8.9,32.7 L9.9,32.5 L10.9,32.3 L11.9,32.1 L12.9,31.8 L13.9,31.6 L14.9,31.5 L15.9,31.4 L16.9,31.1 L17.9,31.0 L18.9,30.6 L19.9,30.2 L20.9,30.2 L21.9,30.2 L22.9,29.9 L23.9,29.5 L24.9,29.1 L25.8,28.7 L26.8,28.8 L27.8,28.2 L28.8,28.1 L29.8,28.0 L30.8,27.9 L31.8,27.5 L32.8,27.0 L33.8,27.0 L34.8,26.5 L35.8,26.5 L36.8,26.5 L37.8,25.9 L38.8,25.4 L39.8,25.9 L40.8,25.2 L41.8,24.9 L42.7,24.0 L43.7,23.6 L44.7,24.2 L45.7,23.1 L46.7,23.0 L47.7,23.6 L48.7,23.0 L49.7,23.3 L50.7,21.8 L51.7,21.7 L52.7,21.0 L53.7,20.9 L54.7,20.8 L55.7,20.4 L56.7,20.5 L57.7,21.1 L58.7,19.8 L59.6,20.8 L60.6,20.2 L61.6,18.5 L62.6,19.9 L63.6,19.5 L64.6,19.2 L65.6,17.0 L66.6,18.4 L67.6,18.5 L67.6,48.2 L66.6,48.3 L65.6,49.5 L64.6,47.6 L63.6,47.4 L62.6,47.0 L61.6,48.2 L60.6,46.7 L59.6,46.2 L58.7,47.1 L57.7,46.0 L56.7,46.5 L55.7,46.6 L54.7,46.2 L53.7,46.2 L52.7,46.0 L51.7,45.4 L50.7,45.4 L49.7,44.2 L48.7,44.4 L47.7,43.9 L46.7,44.4 L45.7,44.3 L44.7,43.4 L43.7,43.8 L42.7,43.5 L41.8,42.7 L40.8,42.5 L39.8,41.9 L38.8,42.4 L37.8,42.0 L36.8,41.4 L35.8,41.4 L34.8,41.4 L33.8,41.0 L32.8,41.0 L31.8,40.6 L30.8,40.3 L29.8,40.1 L28.8,40.1 L27.8,40.0 L26.8,39.5 L25.8,39.5 L24.9,39.2 L23.9,38.9 L22.9,38.6 L21.9,38.3 L20.9,38.3 L19.9,38.3 L18.9,38.0 L17.9,37.6 L16.9,37.5 L15.9,37.3 L14.9,37.2 L13.9,37.1 L12.9,36.9 L11.9,36.7 L10.9,36.5 L9.9,36.4 L8.9,36.2 L8.0,36.0 L7.0,36.0 L6.0,35.8 L5.0,35.6 L4.0,35.5 L3.0,35.4 L2.0,35.3 L1.0,35.2 L0.0,35.1Z" fill="#b1c8c1"/><path d="M0,16 h4.2 l-4.2,4.6z" fill="#e9a35c"/></svg></div>
<svg style="left:399px;top:839.6px;" width="11" height="10" viewBox="0 0 11 10"><path d="M1.6,1.6 v6.8 M1.6,5 h8 M4.4,2.2 l3,2.8 -3,2.8 M6.6,2.4 l2.8,2.6 -2.8,2.6" fill="none" stroke="#f0ecf6" stroke-width="1.1"/></svg>
<div class="t" style="left:411.4px;top:838px;font-size:10.9px;line-height:12px;color:#e8f2f0;transform:scaleX(0.9434);">25_A..Rise</div>
<div style="left:918px;top:135px;width:274px;height:53px;background:#4f767a;border-radius:3px;overflow:hidden;box-shadow:inset 0 1px 0 #5f8a8c,inset 1px 0 0 rgba(125,105,150,.35),inset -1px 0 0 rgba(40,20,60,.35);"><svg style="left:0;top:0" width="274.0" height="53"><defs><linearGradient id="ag1" x1="0" y1="0" x2="0" y2="1"><stop offset="0" stop-color="#4f767a"/><stop offset="1" stop-color="#497074"/></linearGradient></defs><rect width="272.4" height="52.2" fill="url(#ag1)"/><path d="M0,15.6 C14,17.4 22,20.6 31.4,28.8 L272.4,39 V52.2 H0Z" fill="#5b8583"/><path d="M0,15.6 C14,17.4 22,20.6 31.4,28.8 L272.4,39" fill="none" stroke="#bfe6de" stroke-width="1.1"/></svg></div>
<svg style="left:918.6px;top:137.4px;" width="13" height="11" viewBox="0 0 13 11"><circle cx="3.2" cy="8" r="1.7" fill="none" stroke="#eef" stroke-width="1"/><circle cx="9.6" cy="3" r="1.7" fill="none" stroke="#eef" stroke-width="1"/><path d="M4.6,7 L8.2,4" stroke="#eef" stroke-width="1.1"/></svg>
<div class="t" style="left:932px;top:136px;font-size:10.9px;line-height:12px;color:#e6f4f2;transform:scaleX(1.0016);">Param. EQ 2 – Master – Band 7 freq</div>
<div style="left:918px;top:837px;width:304px;height:53px;background:#5b6289;border-radius:3px;overflow:hidden;box-shadow:inset 0 1px 0 #5c6690,inset 1px 0 0 rgba(125,105,150,.35),inset -1px 0 0 rgba(40,20,60,.35);"><svg style="left:0;top:0" width="304.0" height="53"><rect x="0" y="0" width="302.7" height="16" fill="#4b5479"/><rect x="0" y="16" width="302.7" height="36.2" fill="#5b6289"/><rect x="0" y="15.6" width="302.7" height="1.1" fill="#d4d8f4"/><rect x="0" y="16" width="0.9" height="36.2" fill="#d4d8f4"/></svg></div>
<svg style="left:918.6px;top:839.4px;" width="13" height="11" viewBox="0 0 13 11"><circle cx="3.2" cy="8" r="1.7" fill="none" stroke="#eef" stroke-width="1"/><circle cx="9.6" cy="3" r="1.7" fill="none" stroke="#eef" stroke-width="1"/><path d="M4.6,7 L8.2,4" stroke="#eef" stroke-width="1.1"/></svg>
<div class="t" style="left:932px;top:838px;font-size:10.9px;line-height:12px;color:#e8eaf8;transform:scaleX(0.9930);">Param. EQ 2 – Mix level</div>
<div style="left:872px;top:135px;width:7px;height:828px;background:linear-gradient(90deg,rgba(150,40,220,0),rgba(150,40,220,.3) 40%,rgba(160,50,225,.42));"></div>
<div style="left:879px;top:135px;width:1px;height:828px;background:#c468f2;"></div>
<svg style="left:870.5px;top:116px;" width="18" height="12" viewBox="0 0 18 12"><path d="M1.4,1 H16.6 L9,11.6Z" fill="#14022a"/><path d="M2.6,1.6 H15.4 L9,10.6Z" fill="#b455dc"/><path d="M2.6,1.6 H15.4 L14.4,3 H3.6Z" fill="#dd8cfa"/></svg>
</div></body></html>
